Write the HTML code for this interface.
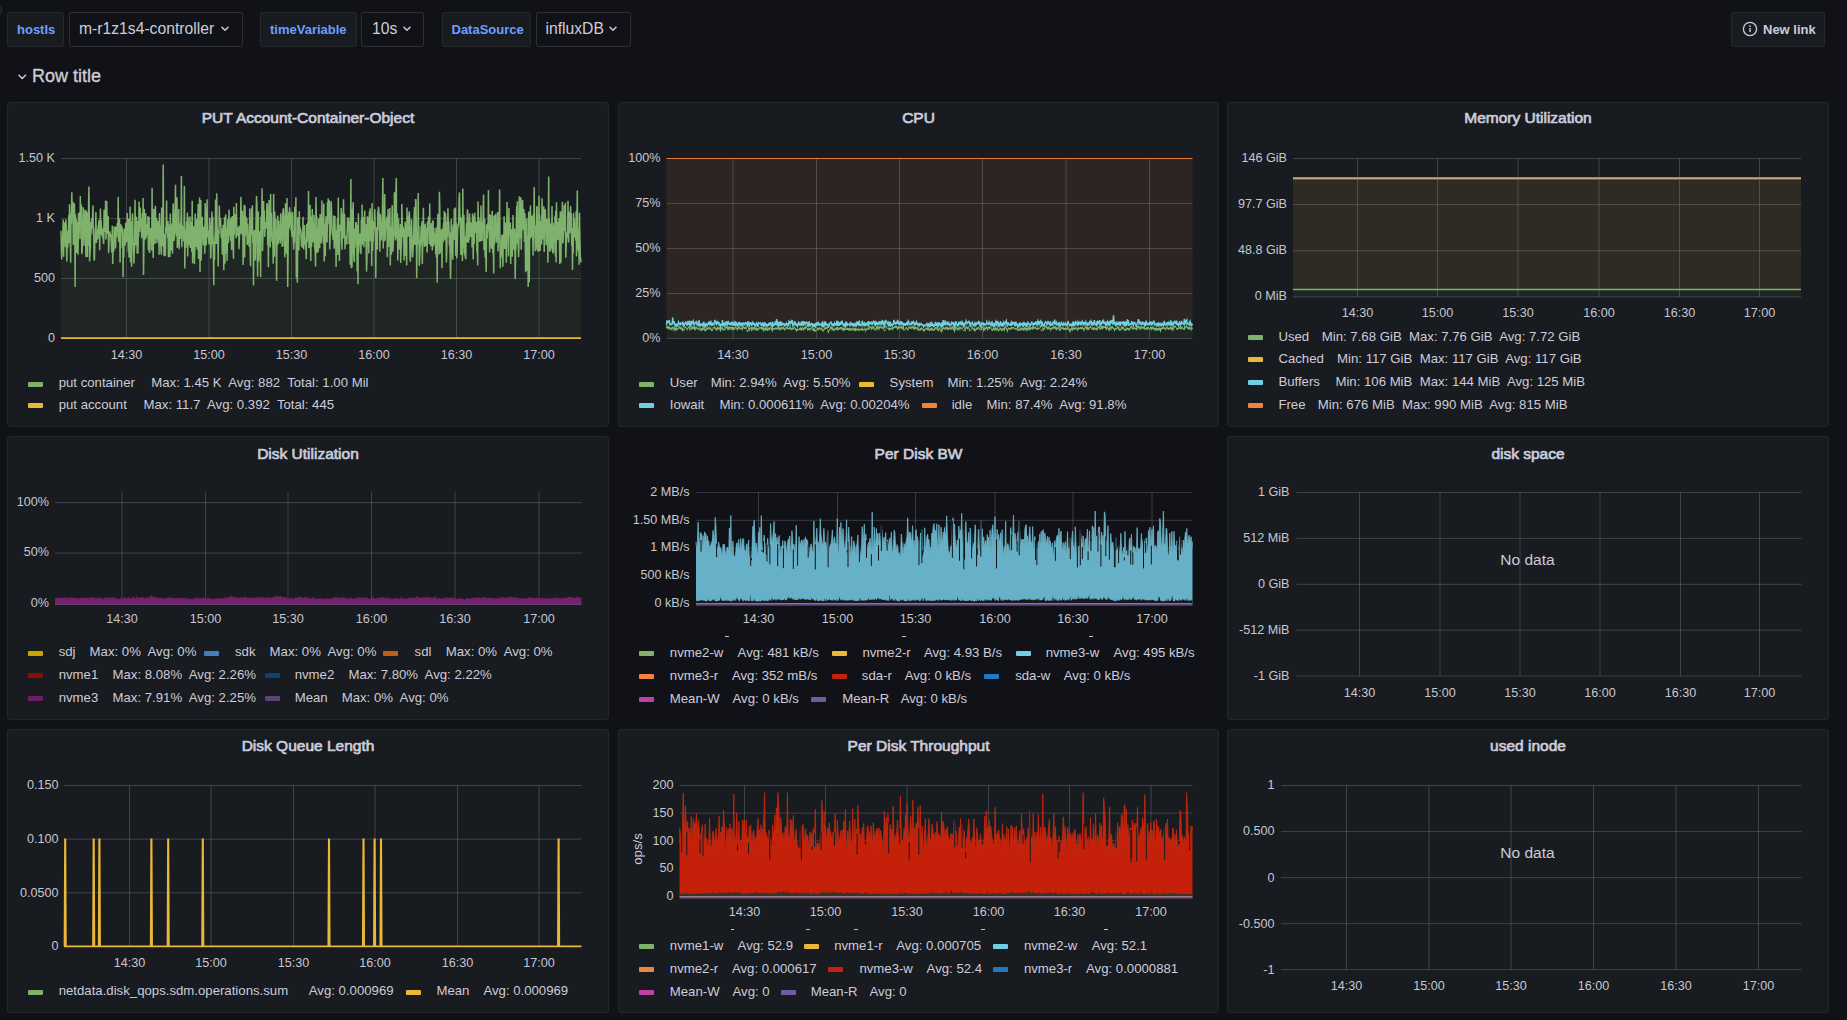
<!DOCTYPE html>
<html><head><meta charset="utf-8"><style>
html,body{margin:0;padding:0;background:#111217;width:1847px;height:1020px;overflow:hidden;position:relative;font-family:"Liberation Sans", sans-serif;}
.t{position:absolute;white-space:nowrap;line-height:1;}
.c{text-align:center;}
.a{position:absolute;}
.p{position:absolute;box-sizing:border-box;background:#181b1f;border:1px solid #24262b;border-radius:3px;}
.vl{position:absolute;top:12px;height:35px;box-sizing:border-box;background:#181b1f;border:1px solid #25272c;border-radius:2px;}
.vv{position:absolute;top:12px;height:35px;box-sizing:border-box;background:#111217;border:1px solid #2c2e33;border-radius:2px;}
.sw{position:absolute;width:15px;height:5px;border-radius:1px;}
.circ{position:absolute;left:-14px;top:3px;width:16px;height:15px;box-sizing:border-box;border-radius:8px;background:#16181c;border:1px solid #2e3137;}
</style></head><body>
<div class="circ"></div><div class="vl" style="left:7px;width:57px"></div><div class="t" style="left:17.00px;top:22.90px;font-size:13px;color:#6e9fff;font-weight:700;">hostIs</div><div class="vv" style="left:69px;width:174px"></div><div class="t" style="left:79.00px;top:20.61px;font-size:15.7px;color:#ccccdc;font-weight:400;">m-r1z1s4-controller</div><svg class="a" style="left:221.3px;top:26.4px" width="8" height="6.0" viewBox="0 0 8 6.0"><path d="M1 1.2 L4.0 4.2 L7 1.2" stroke="#ccccdc" stroke-width="1.5" fill="none" stroke-linecap="round" stroke-linejoin="round"/></svg><div class="vl" style="left:260px;width:97px"></div><div class="t" style="left:270.00px;top:22.90px;font-size:13px;color:#6e9fff;font-weight:700;">timeVariable</div><div class="vv" style="left:361px;width:63px"></div><div class="t" style="left:372.00px;top:20.61px;font-size:15.7px;color:#ccccdc;font-weight:400;">10s</div><svg class="a" style="left:402.6px;top:26.4px" width="8" height="6.0" viewBox="0 0 8 6.0"><path d="M1 1.2 L4.0 4.2 L7 1.2" stroke="#ccccdc" stroke-width="1.5" fill="none" stroke-linecap="round" stroke-linejoin="round"/></svg><div class="vl" style="left:442px;width:89px"></div><div class="t" style="left:451.50px;top:22.90px;font-size:13px;color:#6e9fff;font-weight:700;">DataSource</div><div class="vv" style="left:536px;width:95px"></div><div class="t" style="left:545.50px;top:20.61px;font-size:15.7px;color:#ccccdc;font-weight:400;">influxDB</div><svg class="a" style="left:608.6px;top:26.4px" width="8" height="6.0" viewBox="0 0 8 6.0"><path d="M1 1.2 L4.0 4.2 L7 1.2" stroke="#ccccdc" stroke-width="1.5" fill="none" stroke-linecap="round" stroke-linejoin="round"/></svg><div class="vl" style="left:1731px;width:94px"></div><svg class="a" style="left:1742px;top:21px" width="16" height="16" viewBox="0 0 16 16"><circle cx="8" cy="8" r="6.6" stroke="#ccccdc" stroke-width="1.3" fill="none"/><rect x="7.3" y="7" width="1.4" height="4" fill="#ccccdc"/><circle cx="8" cy="5.2" r="0.85" fill="#ccccdc"/></svg><div class="t" style="left:1763.00px;top:23.10px;font-size:13px;color:#ccccdc;font-weight:700;">New link</div><svg class="a" style="left:18px;top:73.8px" width="8.5" height="6.25" viewBox="0 0 8.5 6.25"><path d="M1 1.2 L4.25 4.45 L7.5 1.2" stroke="#ccccdc" stroke-width="1.5" fill="none" stroke-linecap="round" stroke-linejoin="round"/></svg><div class="t" style="left:32.00px;top:66.76px;font-size:18px;color:#ccccdc;font-weight:400;-webkit-text-stroke:0.35px #ccccdc;">Row title</div><div class="p" style="left:7px;top:102px;width:602px;height:325px"></div><div class="p" style="left:618px;top:102px;width:601px;height:325px"></div><div class="p" style="left:1227px;top:102px;width:602px;height:325px"></div><div class="p" style="left:7px;top:436px;width:602px;height:284px"></div><div class="p" style="left:1227px;top:436px;width:602px;height:284px"></div><div class="p" style="left:7px;top:729px;width:602px;height:284px"></div><div class="p" style="left:618px;top:729px;width:601px;height:284px"></div><div class="p" style="left:1227px;top:729px;width:602px;height:284px"></div><div class="t c" style="left:58.00px;width:500px;top:110.48px;font-size:15.5px;color:#ccccdc;font-weight:400;-webkit-text-stroke:0.7px #ccccdc;">PUT Account-Container-Object</div><div class="t c" style="left:668.50px;width:500px;top:110.48px;font-size:15.5px;color:#ccccdc;font-weight:400;-webkit-text-stroke:0.7px #ccccdc;">CPU</div><div class="t c" style="left:1278.00px;width:500px;top:110.48px;font-size:15.5px;color:#ccccdc;font-weight:400;-webkit-text-stroke:0.7px #ccccdc;">Memory Utilization</div><div class="t c" style="left:58.00px;width:500px;top:445.58px;font-size:15.5px;color:#ccccdc;font-weight:400;-webkit-text-stroke:0.7px #ccccdc;">Disk Utilization</div><div class="t c" style="left:668.50px;width:500px;top:445.58px;font-size:15.5px;color:#ccccdc;font-weight:400;-webkit-text-stroke:0.7px #ccccdc;">Per Disk BW</div><div class="t c" style="left:1278.00px;width:500px;top:445.58px;font-size:15.5px;color:#ccccdc;font-weight:400;-webkit-text-stroke:0.7px #ccccdc;">disk space</div><div class="t c" style="left:58.00px;width:500px;top:737.88px;font-size:15.5px;color:#ccccdc;font-weight:400;-webkit-text-stroke:0.7px #ccccdc;">Disk Queue Length</div><div class="t c" style="left:668.50px;width:500px;top:737.88px;font-size:15.5px;color:#ccccdc;font-weight:400;-webkit-text-stroke:0.7px #ccccdc;">Per Disk Throughput</div><div class="t c" style="left:1278.00px;width:500px;top:737.88px;font-size:15.5px;color:#ccccdc;font-weight:400;-webkit-text-stroke:0.7px #ccccdc;">used inode</div><div class="t" style="right:1792.00px;top:152.43px;font-size:12.6px;color:#c7c7d2;font-weight:400;">1.50 K</div><div class="t" style="right:1792.00px;top:212.43px;font-size:12.6px;color:#c7c7d2;font-weight:400;">1 K</div><div class="t" style="right:1792.00px;top:272.43px;font-size:12.6px;color:#c7c7d2;font-weight:400;">500</div><div class="t" style="right:1792.00px;top:332.43px;font-size:12.6px;color:#c7c7d2;font-weight:400;">0</div><div class="t c" style="left:-123.50px;width:500px;top:349.33px;font-size:12.6px;color:#c7c7d2;font-weight:400;">14:30</div><div class="t c" style="left:-41.00px;width:500px;top:349.33px;font-size:12.6px;color:#c7c7d2;font-weight:400;">15:00</div><div class="t c" style="left:41.50px;width:500px;top:349.33px;font-size:12.6px;color:#c7c7d2;font-weight:400;">15:30</div><div class="t c" style="left:124.00px;width:500px;top:349.33px;font-size:12.6px;color:#c7c7d2;font-weight:400;">16:00</div><div class="t c" style="left:206.50px;width:500px;top:349.33px;font-size:12.6px;color:#c7c7d2;font-weight:400;">16:30</div><div class="t c" style="left:289.00px;width:500px;top:349.33px;font-size:12.6px;color:#c7c7d2;font-weight:400;">17:00</div><div class="sw" style="left:28.0px;top:381.5px;background:#7eb26d"></div><div class="t" style="left:58.70px;top:376.33px;font-size:13.2px;color:#ccccdc;font-weight:400;">put container</div><div class="t" style="left:151.30px;top:376.33px;font-size:13.2px;color:#ccccdc;font-weight:400;">Max: 1.45 K&nbsp; Avg: 882&nbsp; Total: 1.00 Mil</div><div class="sw" style="left:28.0px;top:403.3px;background:#eab839"></div><div class="t" style="left:58.70px;top:398.13px;font-size:13.2px;color:#ccccdc;font-weight:400;">put account</div><div class="t" style="left:143.50px;top:398.13px;font-size:13.2px;color:#ccccdc;font-weight:400;">Max: 11.7&nbsp; Avg: 0.392&nbsp; Total: 445</div><div class="t" style="right:1186.50px;top:152.43px;font-size:12.6px;color:#c7c7d2;font-weight:400;">100%</div><div class="t" style="right:1186.50px;top:197.43px;font-size:12.6px;color:#c7c7d2;font-weight:400;">75%</div><div class="t" style="right:1186.50px;top:242.43px;font-size:12.6px;color:#c7c7d2;font-weight:400;">50%</div><div class="t" style="right:1186.50px;top:287.43px;font-size:12.6px;color:#c7c7d2;font-weight:400;">25%</div><div class="t" style="right:1186.50px;top:332.43px;font-size:12.6px;color:#c7c7d2;font-weight:400;">0%</div><div class="t c" style="left:483.00px;width:500px;top:349.33px;font-size:12.6px;color:#c7c7d2;font-weight:400;">14:30</div><div class="t c" style="left:566.50px;width:500px;top:349.33px;font-size:12.6px;color:#c7c7d2;font-weight:400;">15:00</div><div class="t c" style="left:649.50px;width:500px;top:349.33px;font-size:12.6px;color:#c7c7d2;font-weight:400;">15:30</div><div class="t c" style="left:732.50px;width:500px;top:349.33px;font-size:12.6px;color:#c7c7d2;font-weight:400;">16:00</div><div class="t c" style="left:816.00px;width:500px;top:349.33px;font-size:12.6px;color:#c7c7d2;font-weight:400;">16:30</div><div class="t c" style="left:899.50px;width:500px;top:349.33px;font-size:12.6px;color:#c7c7d2;font-weight:400;">17:00</div><div class="sw" style="left:639.0px;top:381.5px;background:#7eb26d"></div><div class="t" style="left:669.80px;top:376.33px;font-size:13.2px;color:#ccccdc;font-weight:400;">User</div><div class="t" style="left:710.70px;top:376.33px;font-size:13.2px;color:#ccccdc;font-weight:400;">Min: 2.94%&nbsp; Avg: 5.50%</div><div class="sw" style="left:859.0px;top:381.5px;background:#eab839"></div><div class="t" style="left:889.60px;top:376.33px;font-size:13.2px;color:#ccccdc;font-weight:400;">System</div><div class="t" style="left:947.40px;top:376.33px;font-size:13.2px;color:#ccccdc;font-weight:400;">Min: 1.25%&nbsp; Avg: 2.24%</div><div class="sw" style="left:639.0px;top:403.3px;background:#6ed0e0"></div><div class="t" style="left:669.80px;top:398.13px;font-size:13.2px;color:#ccccdc;font-weight:400;">Iowait</div><div class="t" style="left:719.40px;top:398.13px;font-size:13.2px;color:#ccccdc;font-weight:400;">Min: 0.000611%&nbsp; Avg: 0.00204%</div><div class="sw" style="left:921.5px;top:403.3px;background:#ef843c"></div><div class="t" style="left:951.70px;top:398.13px;font-size:13.2px;color:#ccccdc;font-weight:400;">idle</div><div class="t" style="left:986.60px;top:398.13px;font-size:13.2px;color:#ccccdc;font-weight:400;">Min: 87.4%&nbsp; Avg: 91.8%</div><div class="t" style="right:560.00px;top:152.43px;font-size:12.6px;color:#c7c7d2;font-weight:400;">146 GiB</div><div class="t" style="right:560.00px;top:198.27px;font-size:12.6px;color:#c7c7d2;font-weight:400;">97.7 GiB</div><div class="t" style="right:560.00px;top:244.10px;font-size:12.6px;color:#c7c7d2;font-weight:400;">48.8 GiB</div><div class="t" style="right:560.00px;top:289.93px;font-size:12.6px;color:#c7c7d2;font-weight:400;">0 MiB</div><div class="t c" style="left:1107.50px;width:500px;top:307.33px;font-size:12.6px;color:#c7c7d2;font-weight:400;">14:30</div><div class="t c" style="left:1187.50px;width:500px;top:307.33px;font-size:12.6px;color:#c7c7d2;font-weight:400;">15:00</div><div class="t c" style="left:1268.00px;width:500px;top:307.33px;font-size:12.6px;color:#c7c7d2;font-weight:400;">15:30</div><div class="t c" style="left:1349.00px;width:500px;top:307.33px;font-size:12.6px;color:#c7c7d2;font-weight:400;">16:00</div><div class="t c" style="left:1429.50px;width:500px;top:307.33px;font-size:12.6px;color:#c7c7d2;font-weight:400;">16:30</div><div class="t c" style="left:1509.50px;width:500px;top:307.33px;font-size:12.6px;color:#c7c7d2;font-weight:400;">17:00</div><div class="sw" style="left:1248.0px;top:335.3px;background:#7eb26d"></div><div class="t" style="left:1278.40px;top:330.13px;font-size:13.2px;color:#ccccdc;font-weight:400;">Used</div><div class="t" style="left:1321.80px;top:330.13px;font-size:13.2px;color:#ccccdc;font-weight:400;">Min: 7.68 GiB&nbsp; Max: 7.76 GiB&nbsp; Avg: 7.72 GiB</div><div class="sw" style="left:1248.0px;top:357.4px;background:#eab839"></div><div class="t" style="left:1278.40px;top:352.23px;font-size:13.2px;color:#ccccdc;font-weight:400;">Cached</div><div class="t" style="left:1337.10px;top:352.23px;font-size:13.2px;color:#ccccdc;font-weight:400;">Min: 117 GiB&nbsp; Max: 117 GiB&nbsp; Avg: 117 GiB</div><div class="sw" style="left:1248.0px;top:380.4px;background:#6ed0e0"></div><div class="t" style="left:1278.40px;top:375.23px;font-size:13.2px;color:#ccccdc;font-weight:400;">Buffers</div><div class="t" style="left:1335.40px;top:375.23px;font-size:13.2px;color:#ccccdc;font-weight:400;">Min: 106 MiB&nbsp; Max: 144 MiB&nbsp; Avg: 125 MiB</div><div class="sw" style="left:1248.0px;top:403.2px;background:#ef843c"></div><div class="t" style="left:1278.40px;top:398.03px;font-size:13.2px;color:#ccccdc;font-weight:400;">Free</div><div class="t" style="left:1317.80px;top:398.03px;font-size:13.2px;color:#ccccdc;font-weight:400;">Min: 676 MiB&nbsp; Max: 990 MiB&nbsp; Avg: 815 MiB</div><div class="t" style="right:1798.00px;top:495.53px;font-size:12.6px;color:#c7c7d2;font-weight:400;">100%</div><div class="t" style="right:1798.00px;top:546.48px;font-size:12.6px;color:#c7c7d2;font-weight:400;">50%</div><div class="t" style="right:1798.00px;top:597.43px;font-size:12.6px;color:#c7c7d2;font-weight:400;">0%</div><div class="t c" style="left:-128.00px;width:500px;top:613.33px;font-size:12.6px;color:#c7c7d2;font-weight:400;">14:30</div><div class="t c" style="left:-44.50px;width:500px;top:613.33px;font-size:12.6px;color:#c7c7d2;font-weight:400;">15:00</div><div class="t c" style="left:38.00px;width:500px;top:613.33px;font-size:12.6px;color:#c7c7d2;font-weight:400;">15:30</div><div class="t c" style="left:121.50px;width:500px;top:613.33px;font-size:12.6px;color:#c7c7d2;font-weight:400;">16:00</div><div class="t c" style="left:205.00px;width:500px;top:613.33px;font-size:12.6px;color:#c7c7d2;font-weight:400;">16:30</div><div class="t c" style="left:289.00px;width:500px;top:613.33px;font-size:12.6px;color:#c7c7d2;font-weight:400;">17:00</div><div class="sw" style="left:28.0px;top:650.5px;background:#cca300"></div><div class="t" style="left:58.70px;top:645.33px;font-size:13.2px;color:#ccccdc;font-weight:400;">sdj</div><div class="t" style="left:89.60px;top:645.33px;font-size:13.2px;color:#ccccdc;font-weight:400;">Max: 0%&nbsp; Avg: 0%</div><div class="sw" style="left:204.0px;top:650.5px;background:#447ebc"></div><div class="t" style="left:235.00px;top:645.33px;font-size:13.2px;color:#ccccdc;font-weight:400;">sdk</div><div class="t" style="left:269.60px;top:645.33px;font-size:13.2px;color:#ccccdc;font-weight:400;">Max: 0%&nbsp; Avg: 0%</div><div class="sw" style="left:382.7px;top:650.5px;background:#c15c17"></div><div class="t" style="left:414.60px;top:645.33px;font-size:13.2px;color:#ccccdc;font-weight:400;">sdl</div><div class="t" style="left:445.80px;top:645.33px;font-size:13.2px;color:#ccccdc;font-weight:400;">Max: 0%&nbsp; Avg: 0%</div><div class="sw" style="left:28.0px;top:673.4px;background:#890f02"></div><div class="t" style="left:58.70px;top:668.23px;font-size:13.2px;color:#ccccdc;font-weight:400;">nvme1</div><div class="t" style="left:112.50px;top:668.23px;font-size:13.2px;color:#ccccdc;font-weight:400;">Max: 8.08%&nbsp; Avg: 2.26%</div><div class="sw" style="left:264.5px;top:673.4px;background:#0a437c"></div><div class="t" style="left:294.70px;top:668.23px;font-size:13.2px;color:#ccccdc;font-weight:400;">nvme2</div><div class="t" style="left:348.40px;top:668.23px;font-size:13.2px;color:#ccccdc;font-weight:400;">Max: 7.80%&nbsp; Avg: 2.22%</div><div class="sw" style="left:28.0px;top:696.3px;background:#6d1f62"></div><div class="t" style="left:58.70px;top:691.13px;font-size:13.2px;color:#ccccdc;font-weight:400;">nvme3</div><div class="t" style="left:112.50px;top:691.13px;font-size:13.2px;color:#ccccdc;font-weight:400;">Max: 7.91%&nbsp; Avg: 2.25%</div><div class="sw" style="left:264.5px;top:696.3px;background:#584477"></div><div class="t" style="left:294.70px;top:691.13px;font-size:13.2px;color:#ccccdc;font-weight:400;">Mean</div><div class="t" style="left:341.70px;top:691.13px;font-size:13.2px;color:#ccccdc;font-weight:400;">Max: 0%&nbsp; Avg: 0%</div><div class="t" style="right:1157.50px;top:485.53px;font-size:12.6px;color:#c7c7d2;font-weight:400;">2 MB/s</div><div class="t" style="right:1157.50px;top:513.51px;font-size:12.6px;color:#c7c7d2;font-weight:400;">1.50 MB/s</div><div class="t" style="right:1157.50px;top:541.48px;font-size:12.6px;color:#c7c7d2;font-weight:400;">1 MB/s</div><div class="t" style="right:1157.50px;top:569.46px;font-size:12.6px;color:#c7c7d2;font-weight:400;">500 kB/s</div><div class="t" style="right:1157.50px;top:597.43px;font-size:12.6px;color:#c7c7d2;font-weight:400;">0 kB/s</div><div class="t c" style="left:508.50px;width:500px;top:613.33px;font-size:12.6px;color:#c7c7d2;font-weight:400;">14:30</div><div class="t c" style="left:587.50px;width:500px;top:613.33px;font-size:12.6px;color:#c7c7d2;font-weight:400;">15:00</div><div class="t c" style="left:665.50px;width:500px;top:613.33px;font-size:12.6px;color:#c7c7d2;font-weight:400;">15:30</div><div class="t c" style="left:745.00px;width:500px;top:613.33px;font-size:12.6px;color:#c7c7d2;font-weight:400;">16:00</div><div class="t c" style="left:823.00px;width:500px;top:613.33px;font-size:12.6px;color:#c7c7d2;font-weight:400;">16:30</div><div class="t c" style="left:902.00px;width:500px;top:613.33px;font-size:12.6px;color:#c7c7d2;font-weight:400;">17:00</div><div class="a" style="left:725.0px;top:636px;width:4px;height:1px;background:#c4c4d0"></div><div class="a" style="left:902.0px;top:636px;width:4px;height:1px;background:#c4c4d0"></div><div class="a" style="left:1089.0px;top:636px;width:4px;height:1px;background:#c4c4d0"></div><div class="sw" style="left:639.0px;top:651.3px;background:#7eb26d"></div><div class="t" style="left:669.80px;top:646.13px;font-size:13.2px;color:#ccccdc;font-weight:400;">nvme2-w</div><div class="t" style="left:737.60px;top:646.13px;font-size:13.2px;color:#ccccdc;font-weight:400;">Avg: 481 kB/s</div><div class="sw" style="left:831.5px;top:651.3px;background:#eab839"></div><div class="t" style="left:862.40px;top:646.13px;font-size:13.2px;color:#ccccdc;font-weight:400;">nvme2-r</div><div class="t" style="left:923.90px;top:646.13px;font-size:13.2px;color:#ccccdc;font-weight:400;">Avg: 4.93 B/s</div><div class="sw" style="left:1015.5px;top:651.3px;background:#6ed0e0"></div><div class="t" style="left:1045.70px;top:646.13px;font-size:13.2px;color:#ccccdc;font-weight:400;">nvme3-w</div><div class="t" style="left:1113.50px;top:646.13px;font-size:13.2px;color:#ccccdc;font-weight:400;">Avg: 495 kB/s</div><div class="sw" style="left:639.0px;top:674.2px;background:#ef843c"></div><div class="t" style="left:669.80px;top:669.03px;font-size:13.2px;color:#ccccdc;font-weight:400;">nvme3-r</div><div class="t" style="left:731.90px;top:669.03px;font-size:13.2px;color:#ccccdc;font-weight:400;">Avg: 352 mB/s</div><div class="sw" style="left:831.5px;top:674.2px;background:#c4220a"></div><div class="t" style="left:861.80px;top:669.03px;font-size:13.2px;color:#ccccdc;font-weight:400;">sda-r</div><div class="t" style="left:904.70px;top:669.03px;font-size:13.2px;color:#ccccdc;font-weight:400;">Avg: 0 kB/s</div><div class="sw" style="left:984.3px;top:674.2px;background:#1f78c1"></div><div class="t" style="left:1015.20px;top:669.03px;font-size:13.2px;color:#ccccdc;font-weight:400;">sda-w</div><div class="t" style="left:1063.80px;top:669.03px;font-size:13.2px;color:#ccccdc;font-weight:400;">Avg: 0 kB/s</div><div class="sw" style="left:639.0px;top:697.1px;background:#ba43a9"></div><div class="t" style="left:669.80px;top:691.93px;font-size:13.2px;color:#ccccdc;font-weight:400;">Mean-W</div><div class="t" style="left:732.50px;top:691.93px;font-size:13.2px;color:#ccccdc;font-weight:400;">Avg: 0 kB/s</div><div class="sw" style="left:811.4px;top:697.1px;background:#705da0"></div><div class="t" style="left:842.30px;top:691.93px;font-size:13.2px;color:#ccccdc;font-weight:400;">Mean-R</div><div class="t" style="left:900.70px;top:691.93px;font-size:13.2px;color:#ccccdc;font-weight:400;">Avg: 0 kB/s</div><div class="t" style="right:557.50px;top:486.43px;font-size:12.6px;color:#c7c7d2;font-weight:400;">1 GiB</div><div class="t" style="right:557.50px;top:532.33px;font-size:12.6px;color:#c7c7d2;font-weight:400;">512 MiB</div><div class="t" style="right:557.50px;top:578.23px;font-size:12.6px;color:#c7c7d2;font-weight:400;">0 GiB</div><div class="t" style="right:557.50px;top:624.13px;font-size:12.6px;color:#c7c7d2;font-weight:400;">-512 MiB</div><div class="t" style="right:557.50px;top:670.03px;font-size:12.6px;color:#c7c7d2;font-weight:400;">-1 GiB</div><div class="t c" style="left:1109.50px;width:500px;top:686.83px;font-size:12.6px;color:#c7c7d2;font-weight:400;">14:30</div><div class="t c" style="left:1190.00px;width:500px;top:686.83px;font-size:12.6px;color:#c7c7d2;font-weight:400;">15:00</div><div class="t c" style="left:1270.00px;width:500px;top:686.83px;font-size:12.6px;color:#c7c7d2;font-weight:400;">15:30</div><div class="t c" style="left:1350.00px;width:500px;top:686.83px;font-size:12.6px;color:#c7c7d2;font-weight:400;">16:00</div><div class="t c" style="left:1430.50px;width:500px;top:686.83px;font-size:12.6px;color:#c7c7d2;font-weight:400;">16:30</div><div class="t c" style="left:1509.50px;width:500px;top:686.83px;font-size:12.6px;color:#c7c7d2;font-weight:400;">17:00</div><div class="t c" style="left:1277.50px;width:500px;top:551.88px;font-size:15.5px;color:#ccccdc;font-weight:400;">No data</div><div class="t" style="right:1788.50px;top:779.43px;font-size:12.6px;color:#c7c7d2;font-weight:400;">0.150</div><div class="t" style="right:1788.50px;top:833.10px;font-size:12.6px;color:#c7c7d2;font-weight:400;">0.100</div><div class="t" style="right:1788.50px;top:886.77px;font-size:12.6px;color:#c7c7d2;font-weight:400;">0.0500</div><div class="t" style="right:1788.50px;top:940.43px;font-size:12.6px;color:#c7c7d2;font-weight:400;">0</div><div class="t c" style="left:-120.50px;width:500px;top:956.83px;font-size:12.6px;color:#c7c7d2;font-weight:400;">14:30</div><div class="t c" style="left:-39.00px;width:500px;top:956.83px;font-size:12.6px;color:#c7c7d2;font-weight:400;">15:00</div><div class="t c" style="left:43.50px;width:500px;top:956.83px;font-size:12.6px;color:#c7c7d2;font-weight:400;">15:30</div><div class="t c" style="left:125.00px;width:500px;top:956.83px;font-size:12.6px;color:#c7c7d2;font-weight:400;">16:00</div><div class="t c" style="left:207.50px;width:500px;top:956.83px;font-size:12.6px;color:#c7c7d2;font-weight:400;">16:30</div><div class="t c" style="left:289.00px;width:500px;top:956.83px;font-size:12.6px;color:#c7c7d2;font-weight:400;">17:00</div><div class="sw" style="left:28.0px;top:989.6px;background:#7eb26d"></div><div class="t" style="left:58.70px;top:984.43px;font-size:13.2px;color:#ccccdc;font-weight:400;">netdata.disk_qops.sdm.operations.sum</div><div class="t" style="left:308.80px;top:984.43px;font-size:13.2px;color:#ccccdc;font-weight:400;">Avg: 0.000969</div><div class="sw" style="left:405.5px;top:989.6px;background:#eab839"></div><div class="t" style="left:436.40px;top:984.43px;font-size:13.2px;color:#ccccdc;font-weight:400;">Mean</div><div class="t" style="left:483.40px;top:984.43px;font-size:13.2px;color:#ccccdc;font-weight:400;">Avg: 0.000969</div><div class="t" style="right:1173.50px;top:779.43px;font-size:12.6px;color:#c7c7d2;font-weight:400;">200</div><div class="t" style="right:1173.50px;top:807.06px;font-size:12.6px;color:#c7c7d2;font-weight:400;">150</div><div class="t" style="right:1173.50px;top:834.68px;font-size:12.6px;color:#c7c7d2;font-weight:400;">100</div><div class="t" style="right:1173.50px;top:862.31px;font-size:12.6px;color:#c7c7d2;font-weight:400;">50</div><div class="t" style="right:1173.50px;top:889.93px;font-size:12.6px;color:#c7c7d2;font-weight:400;">0</div><div class="t c" style="left:494.50px;width:500px;top:906.33px;font-size:12.6px;color:#c7c7d2;font-weight:400;">14:30</div><div class="t c" style="left:575.50px;width:500px;top:906.33px;font-size:12.6px;color:#c7c7d2;font-weight:400;">15:00</div><div class="t c" style="left:657.00px;width:500px;top:906.33px;font-size:12.6px;color:#c7c7d2;font-weight:400;">15:30</div><div class="t c" style="left:738.50px;width:500px;top:906.33px;font-size:12.6px;color:#c7c7d2;font-weight:400;">16:00</div><div class="t c" style="left:819.50px;width:500px;top:906.33px;font-size:12.6px;color:#c7c7d2;font-weight:400;">16:30</div><div class="t c" style="left:901.00px;width:500px;top:906.33px;font-size:12.6px;color:#c7c7d2;font-weight:400;">17:00</div><div class="t" style="left:618px;top:841.5px;width:40px;height:14px;font-size:13.2px;color:#ccccdc;transform:rotate(-90deg);transform-origin:20px 7px;text-align:center;line-height:14px">ops/s</div><div class="a" style="left:730.7px;top:929px;width:3.5px;height:1px;background:#c4c4d0"></div><div class="a" style="left:806.2px;top:929px;width:3.5px;height:1px;background:#c4c4d0"></div><div class="a" style="left:854.2px;top:929px;width:3.5px;height:1px;background:#c4c4d0"></div><div class="a" style="left:981.1px;top:929px;width:3.5px;height:1px;background:#c4c4d0"></div><div class="a" style="left:1104.3px;top:929px;width:3.5px;height:1px;background:#c4c4d0"></div><div class="sw" style="left:639.0px;top:944.2px;background:#7eb26d"></div><div class="t" style="left:669.80px;top:939.03px;font-size:13.2px;color:#ccccdc;font-weight:400;">nvme1-w</div><div class="t" style="left:737.60px;top:939.03px;font-size:13.2px;color:#ccccdc;font-weight:400;">Avg: 52.9</div><div class="sw" style="left:804.0px;top:944.2px;background:#eab839"></div><div class="t" style="left:834.20px;top:939.03px;font-size:13.2px;color:#ccccdc;font-weight:400;">nvme1-r</div><div class="t" style="left:896.30px;top:939.03px;font-size:13.2px;color:#ccccdc;font-weight:400;">Avg: 0.000705</div><div class="sw" style="left:992.7px;top:944.2px;background:#6ed0e0"></div><div class="t" style="left:1023.90px;top:939.03px;font-size:13.2px;color:#ccccdc;font-weight:400;">nvme2-w</div><div class="t" style="left:1091.70px;top:939.03px;font-size:13.2px;color:#ccccdc;font-weight:400;">Avg: 52.1</div><div class="sw" style="left:639.0px;top:967.4px;background:#ef843c"></div><div class="t" style="left:669.80px;top:962.23px;font-size:13.2px;color:#ccccdc;font-weight:400;">nvme2-r</div><div class="t" style="left:731.90px;top:962.23px;font-size:13.2px;color:#ccccdc;font-weight:400;">Avg: 0.000617</div><div class="sw" style="left:828.2px;top:967.4px;background:#c4220a"></div><div class="t" style="left:859.40px;top:962.23px;font-size:13.2px;color:#ccccdc;font-weight:400;">nvme3-w</div><div class="t" style="left:926.60px;top:962.23px;font-size:13.2px;color:#ccccdc;font-weight:400;">Avg: 52.4</div><div class="sw" style="left:992.7px;top:967.4px;background:#1f78c1"></div><div class="t" style="left:1023.90px;top:962.23px;font-size:13.2px;color:#ccccdc;font-weight:400;">nvme3-r</div><div class="t" style="left:1086.00px;top:962.23px;font-size:13.2px;color:#ccccdc;font-weight:400;">Avg: 0.0000881</div><div class="sw" style="left:639.0px;top:990.2px;background:#ba43a9"></div><div class="t" style="left:669.80px;top:985.03px;font-size:13.2px;color:#ccccdc;font-weight:400;">Mean-W</div><div class="t" style="left:732.50px;top:985.03px;font-size:13.2px;color:#ccccdc;font-weight:400;">Avg: 0</div><div class="sw" style="left:780.5px;top:990.2px;background:#705da0"></div><div class="t" style="left:810.70px;top:985.03px;font-size:13.2px;color:#ccccdc;font-weight:400;">Mean-R</div><div class="t" style="left:869.50px;top:985.03px;font-size:13.2px;color:#ccccdc;font-weight:400;">Avg: 0</div><div class="t" style="right:572.50px;top:779.43px;font-size:12.6px;color:#c7c7d2;font-weight:400;">1</div><div class="t" style="right:572.50px;top:825.48px;font-size:12.6px;color:#c7c7d2;font-weight:400;">0.500</div><div class="t" style="right:572.50px;top:871.53px;font-size:12.6px;color:#c7c7d2;font-weight:400;">0</div><div class="t" style="right:572.50px;top:917.58px;font-size:12.6px;color:#c7c7d2;font-weight:400;">-0.500</div><div class="t" style="right:572.50px;top:963.63px;font-size:12.6px;color:#c7c7d2;font-weight:400;">-1</div><div class="t c" style="left:1096.50px;width:500px;top:980.33px;font-size:12.6px;color:#c7c7d2;font-weight:400;">14:30</div><div class="t c" style="left:1179.00px;width:500px;top:980.33px;font-size:12.6px;color:#c7c7d2;font-weight:400;">15:00</div><div class="t c" style="left:1261.00px;width:500px;top:980.33px;font-size:12.6px;color:#c7c7d2;font-weight:400;">15:30</div><div class="t c" style="left:1343.50px;width:500px;top:980.33px;font-size:12.6px;color:#c7c7d2;font-weight:400;">16:00</div><div class="t c" style="left:1426.00px;width:500px;top:980.33px;font-size:12.6px;color:#c7c7d2;font-weight:400;">16:30</div><div class="t c" style="left:1508.50px;width:500px;top:980.33px;font-size:12.6px;color:#c7c7d2;font-weight:400;">17:00</div><div class="t c" style="left:1277.50px;width:500px;top:845.38px;font-size:15.5px;color:#ccccdc;font-weight:400;">No data</div><svg class="a" style="left:0;top:0" width="1847" height="1020" viewBox="0 0 1847 1020"><g stroke="rgba(204,204,214,0.22)" stroke-width="1"><line x1="61" y1="158.50" x2="581" y2="158.50"/><line x1="61" y1="218.50" x2="581" y2="218.50"/><line x1="61" y1="278.50" x2="581" y2="278.50"/><line x1="61" y1="338.50" x2="581" y2="338.50"/><line x1="126.50" y1="158.5" x2="126.50" y2="338.5"/><line x1="209.00" y1="158.5" x2="209.00" y2="338.5"/><line x1="291.50" y1="158.5" x2="291.50" y2="338.5"/><line x1="374.00" y1="158.5" x2="374.00" y2="338.5"/><line x1="456.50" y1="158.5" x2="456.50" y2="338.5"/><line x1="539.00" y1="158.5" x2="539.00" y2="338.5"/></g><path d="M61.0 338.5 L61.0 230.8 L61.4 249.1 L61.7 259.5 L62.1 246.1 L62.5 242.9 L62.9 233.3 L63.2 219.5 L63.6 256.8 L64.0 222.3 L64.3 223.6 L64.7 229.3 L65.1 239.9 L65.5 247.3 L65.8 219.4 L66.2 226.0 L66.6 253.7 L66.9 261.5 L67.3 230.7 L67.7 247.8 L68.1 239.5 L68.4 231.7 L68.8 214.9 L69.2 243.0 L69.5 204.3 L69.9 217.8 L70.3 243.5 L70.7 262.7 L71.0 213.4 L71.4 223.9 L71.8 192.3 L72.2 210.4 L72.5 217.9 L72.9 201.7 L73.3 245.1 L73.6 228.1 L74.0 243.7 L74.4 203.2 L74.8 224.3 L75.1 286.9 L75.5 214.2 L75.9 242.2 L76.2 219.1 L76.6 253.0 L77.0 221.7 L77.4 222.7 L77.7 239.2 L78.1 254.7 L78.5 212.8 L78.8 231.7 L79.2 221.7 L79.6 212.5 L80.0 239.2 L80.3 195.9 L80.7 227.2 L81.1 219.9 L81.4 204.5 L81.8 254.1 L82.2 250.4 L82.6 230.7 L82.9 231.1 L83.3 207.2 L83.7 222.3 L84.0 246.0 L84.4 223.0 L84.8 217.7 L85.2 209.7 L85.5 218.3 L85.9 256.9 L86.3 210.8 L86.6 232.5 L87.0 223.8 L87.4 256.9 L87.8 212.6 L88.1 246.1 L88.5 211.2 L88.9 186.4 L89.2 209.7 L89.6 261.4 L90.0 253.0 L90.4 247.4 L90.7 222.3 L91.1 233.2 L91.5 218.5 L91.9 228.2 L92.2 227.7 L92.6 216.0 L93.0 205.4 L93.3 234.9 L93.7 228.0 L94.1 260.4 L94.5 259.3 L94.8 239.4 L95.2 241.5 L95.6 231.4 L95.9 212.1 L96.3 242.9 L96.7 238.2 L97.1 239.9 L97.4 229.4 L97.8 238.9 L98.2 225.4 L98.5 226.2 L98.9 220.8 L99.3 220.4 L99.7 250.2 L100.0 227.2 L100.4 208.4 L100.8 234.7 L101.1 220.4 L101.5 228.2 L101.9 235.5 L102.3 235.2 L102.6 237.6 L103.0 228.6 L103.4 242.3 L103.7 244.1 L104.1 209.8 L104.5 229.3 L104.9 209.4 L105.2 232.1 L105.6 200.4 L106.0 239.4 L106.3 231.3 L106.7 201.0 L107.1 220.5 L107.5 220.7 L107.8 234.0 L108.2 215.9 L108.6 253.2 L108.9 245.7 L109.3 232.7 L109.7 231.3 L110.1 233.3 L110.4 236.0 L110.8 234.7 L111.2 241.1 L111.6 248.9 L111.9 252.8 L112.3 225.4 L112.7 263.9 L113.0 251.1 L113.4 244.0 L113.8 251.5 L114.2 226.7 L114.5 242.4 L114.9 235.0 L115.3 226.4 L115.6 248.6 L116.0 227.1 L116.4 230.2 L116.8 237.5 L117.1 227.2 L117.5 223.1 L117.9 229.3 L118.2 196.7 L118.6 241.7 L119.0 225.9 L119.4 218.6 L119.7 234.3 L120.1 262.4 L120.5 224.1 L120.8 225.4 L121.2 232.2 L121.6 225.9 L122.0 228.3 L122.3 248.0 L122.7 228.6 L123.1 277.2 L123.4 233.9 L123.8 257.6 L124.2 236.3 L124.6 228.5 L124.9 245.7 L125.3 242.2 L125.7 222.8 L126.0 227.5 L126.4 242.2 L126.8 240.3 L127.2 213.0 L127.5 225.3 L127.9 221.9 L128.3 251.7 L128.6 218.8 L129.0 257.5 L129.4 224.6 L129.8 250.3 L130.1 206.5 L130.5 262.2 L130.9 253.0 L131.3 221.4 L131.6 266.7 L132.0 241.0 L132.4 213.4 L132.7 220.4 L133.1 245.2 L133.5 242.8 L133.9 263.4 L134.2 252.0 L134.6 247.7 L135.0 199.7 L135.3 229.5 L135.7 242.2 L136.1 245.2 L136.5 216.7 L136.8 230.5 L137.2 253.8 L137.6 221.0 L137.9 253.6 L138.3 233.4 L138.7 236.8 L139.1 201.6 L139.4 231.8 L139.8 230.9 L140.2 207.6 L140.5 226.6 L140.9 226.3 L141.3 219.1 L141.7 238.3 L142.0 223.4 L142.4 212.7 L142.8 235.0 L143.1 198.0 L143.5 275.0 L143.9 246.1 L144.3 209.1 L144.6 230.6 L145.0 240.3 L145.4 228.6 L145.7 213.3 L146.1 238.2 L146.5 224.2 L146.9 233.2 L147.2 234.3 L147.6 234.6 L148.0 215.9 L148.3 250.2 L148.7 243.0 L149.1 217.1 L149.5 252.9 L149.8 250.3 L150.2 228.3 L150.6 229.6 L150.9 234.2 L151.3 231.2 L151.7 250.4 L152.1 187.7 L152.4 241.7 L152.8 239.4 L153.2 258.1 L153.6 230.0 L153.9 208.8 L154.3 237.7 L154.7 227.4 L155.0 244.1 L155.4 205.8 L155.8 230.0 L156.2 238.9 L156.5 217.9 L156.9 243.0 L157.3 235.1 L157.6 239.5 L158.0 221.9 L158.4 220.7 L158.8 238.0 L159.1 254.8 L159.5 213.1 L159.9 229.1 L160.2 225.7 L160.6 238.9 L161.0 250.9 L161.4 254.8 L161.7 207.6 L162.1 239.3 L162.5 235.6 L162.8 246.2 L163.2 164.5 L163.6 233.9 L164.0 256.2 L164.3 234.3 L164.7 243.3 L165.1 244.2 L165.4 255.8 L165.8 226.7 L166.2 229.9 L166.6 200.6 L166.9 232.8 L167.3 228.2 L167.7 237.8 L168.0 221.1 L168.4 256.2 L168.8 257.3 L169.2 249.6 L169.5 224.5 L169.9 256.9 L170.3 213.6 L170.6 227.0 L171.0 250.8 L171.4 238.6 L171.8 223.5 L172.1 243.1 L172.5 253.7 L172.9 215.6 L173.3 203.6 L173.6 215.3 L174.0 241.0 L174.4 238.0 L174.7 232.7 L175.1 213.5 L175.5 184.8 L175.9 233.6 L176.2 211.8 L176.6 236.5 L177.0 197.3 L177.3 247.9 L177.7 241.4 L178.1 224.9 L178.5 245.5 L178.8 209.0 L179.2 249.3 L179.6 223.9 L179.9 223.9 L180.3 238.9 L180.7 233.6 L181.1 216.7 L181.4 175.9 L181.8 247.3 L182.2 225.0 L182.5 231.5 L182.9 233.4 L183.3 226.2 L183.7 241.6 L184.0 231.6 L184.4 185.9 L184.8 268.6 L185.1 236.5 L185.5 230.1 L185.9 247.8 L186.3 231.8 L186.6 221.3 L187.0 234.0 L187.4 212.5 L187.7 256.5 L188.1 217.3 L188.5 236.7 L188.9 245.3 L189.2 235.4 L189.6 235.1 L190.0 216.3 L190.3 248.0 L190.7 235.0 L191.1 240.7 L191.5 221.9 L191.8 252.0 L192.2 200.7 L192.6 263.2 L193.0 234.0 L193.3 233.7 L193.7 226.2 L194.1 247.8 L194.4 264.3 L194.8 249.9 L195.2 213.5 L195.6 230.7 L195.9 247.0 L196.3 219.0 L196.7 246.0 L197.0 239.2 L197.4 250.0 L197.8 220.2 L198.2 204.1 L198.5 258.9 L198.9 229.3 L199.3 211.5 L199.6 197.6 L200.0 272.1 L200.4 232.6 L200.8 199.9 L201.1 260.8 L201.5 250.6 L201.9 225.1 L202.2 216.8 L202.6 238.2 L203.0 227.5 L203.4 245.2 L203.7 226.6 L204.1 235.2 L204.5 234.5 L204.8 253.8 L205.2 203.0 L205.6 216.8 L206.0 217.5 L206.3 245.5 L206.7 231.8 L207.1 199.2 L207.4 224.2 L207.8 237.3 L208.2 235.6 L208.6 230.6 L208.9 244.2 L209.3 243.3 L209.7 217.8 L210.0 222.6 L210.4 239.1 L210.8 258.4 L211.2 243.7 L211.5 234.0 L211.9 211.4 L212.3 244.2 L212.7 216.8 L213.0 235.6 L213.4 255.1 L213.8 285.2 L214.1 241.6 L214.5 260.3 L214.9 238.7 L215.3 231.0 L215.6 199.4 L216.0 236.7 L216.4 243.9 L216.7 193.2 L217.1 227.9 L217.5 239.4 L217.9 243.1 L218.2 266.5 L218.6 229.4 L219.0 234.6 L219.3 205.5 L219.7 221.6 L220.1 225.6 L220.5 218.0 L220.8 225.9 L221.2 238.0 L221.6 228.6 L221.9 234.1 L222.3 254.7 L222.7 238.0 L223.1 224.7 L223.4 232.4 L223.8 270.2 L224.2 237.2 L224.5 217.1 L224.9 263.7 L225.3 238.1 L225.7 214.3 L226.0 253.4 L226.4 234.6 L226.8 228.7 L227.1 261.1 L227.5 230.6 L227.9 219.1 L228.3 243.0 L228.6 231.1 L229.0 209.5 L229.4 236.0 L229.7 227.7 L230.1 221.4 L230.5 240.8 L230.9 217.6 L231.2 225.9 L231.6 250.0 L232.0 220.5 L232.4 216.0 L232.7 218.5 L233.1 245.2 L233.5 258.7 L233.8 206.7 L234.2 234.8 L234.6 216.3 L235.0 214.1 L235.3 224.2 L235.7 218.5 L236.1 238.3 L236.4 203.0 L236.8 235.8 L237.2 235.1 L237.6 229.3 L237.9 232.9 L238.3 228.0 L238.7 226.3 L239.0 249.2 L239.4 238.2 L239.8 231.1 L240.2 225.3 L240.5 233.1 L240.9 196.8 L241.3 216.4 L241.6 234.6 L242.0 215.5 L242.4 210.8 L242.8 225.3 L243.1 265.1 L243.5 227.3 L243.9 237.6 L244.2 204.7 L244.6 257.6 L245.0 205.7 L245.4 236.2 L245.7 216.0 L246.1 231.0 L246.5 226.6 L246.8 218.0 L247.2 244.9 L247.6 223.8 L248.0 240.0 L248.3 243.0 L248.7 238.1 L249.1 246.6 L249.4 234.1 L249.8 208.6 L250.2 254.3 L250.6 266.3 L250.9 219.3 L251.3 235.0 L251.7 208.2 L252.1 214.2 L252.4 205.3 L252.8 242.7 L253.2 233.5 L253.5 285.6 L253.9 242.0 L254.3 230.1 L254.7 258.0 L255.0 236.3 L255.4 260.6 L255.8 231.2 L256.1 216.8 L256.5 195.9 L256.9 204.6 L257.3 253.7 L257.6 276.6 L258.0 232.9 L258.4 211.6 L258.7 261.6 L259.1 238.6 L259.5 231.3 L259.9 234.0 L260.2 234.5 L260.6 277.2 L261.0 216.7 L261.3 226.5 L261.7 220.4 L262.1 188.2 L262.5 251.1 L262.8 241.8 L263.2 212.8 L263.6 200.9 L263.9 229.6 L264.3 210.2 L264.7 237.0 L265.1 226.0 L265.4 221.9 L265.8 227.8 L266.2 228.5 L266.5 224.7 L266.9 203.6 L267.3 203.9 L267.7 245.2 L268.0 230.4 L268.4 267.3 L268.8 221.1 L269.1 200.1 L269.5 220.8 L269.9 212.9 L270.3 247.6 L270.6 194.1 L271.0 236.3 L271.4 212.9 L271.8 233.0 L272.1 241.8 L272.5 240.1 L272.9 245.1 L273.2 263.7 L273.6 194.1 L274.0 227.1 L274.4 256.8 L274.7 211.4 L275.1 228.7 L275.5 229.7 L275.8 219.0 L276.2 250.2 L276.6 280.8 L277.0 234.3 L277.3 243.0 L277.7 215.4 L278.1 244.3 L278.4 241.9 L278.8 220.5 L279.2 240.2 L279.6 227.2 L279.9 224.9 L280.3 243.5 L280.7 213.3 L281.0 239.1 L281.4 225.4 L281.8 232.1 L282.2 247.1 L282.5 216.1 L282.9 212.7 L283.3 208.4 L283.6 216.1 L284.0 246.2 L284.4 215.8 L284.8 257.2 L285.1 228.4 L285.5 203.2 L285.9 221.9 L286.2 247.1 L286.6 253.8 L287.0 197.9 L287.4 240.5 L287.7 286.9 L288.1 251.6 L288.5 223.0 L288.8 212.2 L289.2 228.5 L289.6 207.2 L290.0 225.5 L290.3 218.0 L290.7 211.8 L291.1 230.9 L291.5 214.4 L291.8 234.3 L292.2 236.8 L292.6 211.8 L292.9 233.7 L293.3 237.9 L293.7 249.6 L294.1 230.7 L294.4 242.6 L294.8 206.5 L295.2 223.5 L295.5 229.1 L295.9 197.2 L296.3 277.5 L296.7 254.3 L297.0 276.6 L297.4 282.8 L297.8 217.3 L298.1 223.7 L298.5 229.8 L298.9 250.5 L299.3 211.3 L299.6 233.4 L300.0 226.8 L300.4 232.6 L300.7 229.3 L301.1 237.8 L301.5 246.6 L301.9 236.3 L302.2 233.3 L302.6 248.1 L303.0 216.8 L303.3 242.4 L303.7 249.5 L304.1 231.1 L304.5 225.1 L304.8 244.5 L305.2 238.5 L305.6 244.0 L305.9 248.7 L306.3 259.1 L306.7 224.0 L307.1 242.1 L307.4 237.0 L307.8 222.0 L308.2 237.2 L308.5 191.0 L308.9 248.0 L309.3 246.6 L309.7 237.8 L310.0 204.8 L310.4 234.9 L310.8 261.1 L311.2 216.5 L311.5 247.0 L311.9 232.4 L312.3 208.9 L312.6 241.6 L313.0 242.1 L313.4 222.6 L313.8 240.8 L314.1 214.8 L314.5 245.4 L314.9 249.1 L315.2 252.0 L315.6 266.6 L316.0 196.9 L316.4 221.2 L316.7 216.6 L317.1 253.0 L317.5 228.8 L317.8 235.3 L318.2 252.0 L318.6 218.5 L319.0 237.8 L319.3 221.8 L319.7 248.2 L320.1 214.1 L320.4 217.0 L320.8 216.1 L321.2 243.2 L321.6 231.4 L321.9 200.6 L322.3 236.4 L322.7 222.1 L323.0 223.7 L323.4 243.9 L323.8 203.5 L324.2 261.6 L324.5 229.1 L324.9 224.0 L325.3 256.3 L325.6 229.6 L326.0 216.2 L326.4 221.9 L326.8 241.5 L327.1 242.3 L327.5 202.3 L327.9 224.2 L328.2 198.2 L328.6 216.9 L329.0 209.7 L329.4 200.3 L329.7 249.5 L330.1 239.9 L330.5 224.3 L330.8 224.3 L331.2 201.2 L331.6 211.8 L332.0 228.7 L332.3 234.3 L332.7 234.4 L333.1 239.7 L333.5 239.3 L333.8 215.4 L334.2 248.6 L334.6 238.6 L334.9 216.1 L335.3 238.4 L335.7 237.1 L336.1 266.9 L336.4 230.2 L336.8 233.6 L337.2 227.3 L337.5 218.4 L337.9 255.1 L338.3 197.6 L338.7 240.8 L339.0 228.4 L339.4 261.0 L339.8 224.8 L340.1 226.4 L340.5 230.7 L340.9 230.0 L341.3 208.0 L341.6 240.8 L342.0 249.8 L342.4 213.4 L342.7 234.9 L343.1 238.7 L343.5 199.3 L343.9 234.3 L344.2 236.2 L344.6 213.8 L345.0 249.2 L345.3 240.3 L345.7 236.1 L346.1 242.6 L346.5 235.5 L346.8 244.4 L347.2 231.5 L347.6 217.5 L347.9 227.1 L348.3 231.0 L348.7 217.4 L349.1 243.9 L349.4 239.0 L349.8 221.9 L350.2 264.8 L350.5 228.0 L350.9 179.0 L351.3 268.3 L351.7 208.8 L352.0 267.4 L352.4 222.5 L352.8 213.2 L353.2 202.2 L353.5 247.7 L353.9 258.3 L354.3 262.3 L354.6 228.9 L355.0 247.7 L355.4 232.4 L355.8 222.4 L356.1 222.4 L356.5 226.0 L356.9 251.5 L357.2 271.5 L357.6 224.9 L358.0 284.2 L358.4 213.2 L358.7 252.8 L359.1 235.4 L359.5 242.8 L359.8 233.4 L360.2 242.4 L360.6 245.9 L361.0 254.1 L361.3 219.6 L361.7 238.7 L362.1 204.5 L362.4 238.2 L362.8 245.0 L363.2 219.6 L363.6 216.9 L363.9 247.2 L364.3 235.0 L364.7 210.6 L365.0 240.9 L365.4 234.5 L365.8 224.3 L366.2 248.5 L366.5 271.6 L366.9 262.8 L367.3 216.6 L367.6 217.1 L368.0 221.1 L368.4 228.2 L368.8 253.5 L369.1 222.0 L369.5 211.2 L369.9 241.6 L370.2 208.2 L370.6 237.9 L371.0 228.9 L371.4 220.5 L371.7 266.1 L372.1 203.1 L372.5 251.1 L372.9 227.1 L373.2 241.6 L373.6 221.6 L374.0 221.7 L374.3 228.6 L374.7 209.1 L375.1 222.8 L375.5 238.5 L375.8 278.1 L376.2 227.3 L376.6 232.6 L376.9 242.7 L377.3 249.7 L377.7 211.6 L378.1 213.3 L378.4 206.7 L378.8 209.6 L379.2 230.4 L379.5 220.5 L379.9 251.7 L380.3 213.7 L380.7 221.7 L381.0 238.1 L381.4 240.4 L381.8 234.8 L382.1 234.1 L382.5 206.6 L382.9 178.0 L383.3 248.6 L383.6 210.6 L384.0 226.4 L384.4 241.3 L384.7 194.1 L385.1 240.4 L385.5 225.8 L385.9 228.3 L386.2 221.1 L386.6 220.7 L387.0 216.9 L387.3 257.2 L387.7 227.3 L388.1 208.9 L388.5 247.0 L388.8 220.8 L389.2 221.1 L389.6 219.4 L389.9 207.9 L390.3 265.4 L390.7 226.4 L391.1 246.5 L391.4 254.8 L391.8 233.2 L392.2 205.3 L392.6 239.4 L392.9 251.6 L393.3 241.2 L393.7 232.5 L394.0 235.8 L394.4 192.3 L394.8 219.5 L395.2 228.7 L395.5 240.5 L395.9 191.2 L396.3 177.9 L396.6 238.7 L397.0 235.7 L397.4 213.2 L397.8 260.5 L398.1 237.2 L398.5 218.2 L398.9 243.1 L399.2 244.2 L399.6 249.7 L400.0 236.2 L400.4 223.9 L400.7 262.9 L401.1 249.5 L401.5 243.9 L401.8 204.1 L402.2 219.3 L402.6 237.4 L403.0 226.5 L403.3 229.2 L403.7 229.9 L404.1 260.5 L404.4 229.9 L404.8 236.0 L405.2 221.4 L405.6 255.8 L405.9 223.5 L406.3 246.4 L406.7 265.6 L407.0 207.5 L407.4 226.2 L407.8 224.1 L408.2 236.7 L408.5 215.8 L408.9 216.9 L409.3 211.4 L409.6 216.6 L410.0 257.8 L410.4 261.8 L410.8 226.0 L411.1 249.3 L411.5 219.3 L411.9 234.2 L412.3 256.1 L412.6 257.3 L413.0 250.0 L413.4 242.8 L413.7 233.7 L414.1 216.0 L414.5 207.0 L414.9 245.0 L415.2 237.7 L415.6 199.0 L416.0 200.1 L416.3 227.8 L416.7 277.9 L417.1 248.6 L417.5 232.6 L417.8 244.1 L418.2 193.0 L418.6 227.4 L418.9 226.1 L419.3 265.8 L419.7 257.7 L420.1 246.1 L420.4 244.9 L420.8 236.6 L421.2 226.2 L421.5 231.7 L421.9 221.2 L422.3 264.1 L422.7 244.2 L423.0 228.6 L423.4 207.7 L423.8 242.8 L424.1 229.6 L424.5 246.9 L424.9 228.9 L425.3 223.8 L425.6 245.8 L426.0 244.2 L426.4 240.3 L426.7 228.2 L427.1 252.4 L427.5 222.1 L427.9 222.4 L428.2 223.2 L428.6 216.5 L429.0 235.7 L429.3 244.3 L429.7 203.6 L430.1 239.3 L430.5 225.0 L430.8 246.3 L431.2 233.6 L431.6 223.0 L432.0 234.1 L432.3 250.5 L432.7 221.1 L433.1 220.6 L433.4 246.5 L433.8 228.1 L434.2 234.8 L434.6 236.3 L434.9 244.2 L435.3 233.3 L435.7 253.9 L436.0 227.6 L436.4 257.5 L436.8 235.0 L437.2 282.7 L437.5 225.6 L437.9 213.9 L438.3 218.8 L438.6 214.1 L439.0 254.5 L439.4 191.8 L439.8 206.5 L440.1 253.5 L440.5 244.9 L440.9 229.4 L441.2 242.5 L441.6 233.9 L442.0 268.2 L442.4 228.6 L442.7 235.3 L443.1 242.6 L443.5 223.2 L443.8 239.5 L444.2 211.1 L444.6 225.5 L445.0 240.4 L445.3 212.7 L445.7 217.4 L446.1 242.5 L446.4 262.5 L446.8 250.4 L447.2 221.8 L447.6 237.0 L447.9 208.2 L448.3 223.4 L448.7 221.1 L449.0 226.6 L449.4 245.5 L449.8 232.4 L450.2 259.8 L450.5 278.9 L450.9 259.7 L451.3 218.9 L451.7 240.0 L452.0 233.3 L452.4 250.3 L452.8 259.7 L453.1 227.3 L453.5 224.3 L453.9 240.0 L454.3 208.5 L454.6 231.5 L455.0 239.7 L455.4 207.5 L455.7 255.7 L456.1 222.3 L456.5 250.7 L456.9 258.4 L457.2 248.3 L457.6 229.6 L458.0 224.0 L458.3 226.4 L458.7 220.0 L459.1 198.9 L459.5 192.5 L459.8 212.3 L460.2 221.4 L460.6 232.8 L460.9 255.0 L461.3 217.2 L461.7 233.4 L462.1 220.5 L462.4 261.1 L462.8 188.4 L463.2 248.1 L463.5 228.9 L463.9 214.8 L464.3 253.9 L464.7 236.8 L465.0 255.4 L465.4 257.0 L465.8 259.2 L466.1 233.6 L466.5 223.0 L466.9 242.1 L467.3 210.8 L467.6 209.4 L468.0 230.1 L468.4 242.9 L468.7 237.7 L469.1 240.0 L469.5 213.6 L469.9 224.9 L470.2 235.3 L470.6 236.8 L471.0 222.5 L471.4 234.9 L471.7 223.4 L472.1 247.4 L472.5 213.6 L472.8 217.1 L473.2 259.5 L473.6 236.2 L474.0 216.2 L474.3 243.8 L474.7 212.7 L475.1 221.8 L475.4 226.3 L475.8 232.8 L476.2 229.4 L476.6 221.8 L476.9 252.6 L477.3 246.2 L477.7 265.5 L478.0 201.4 L478.4 219.8 L478.8 217.2 L479.2 226.9 L479.5 241.7 L479.9 240.9 L480.3 220.7 L480.6 241.2 L481.0 205.6 L481.4 234.7 L481.8 225.8 L482.1 240.9 L482.5 221.4 L482.9 232.5 L483.2 207.8 L483.6 194.4 L484.0 250.3 L484.4 225.2 L484.7 219.1 L485.1 257.4 L485.5 242.5 L485.8 255.0 L486.2 272.1 L486.6 224.4 L487.0 225.9 L487.3 238.5 L487.7 223.2 L488.1 231.3 L488.4 190.0 L488.8 229.8 L489.2 214.1 L489.6 252.4 L489.9 220.8 L490.3 214.8 L490.7 242.2 L491.1 244.0 L491.4 248.8 L491.8 222.9 L492.2 210.8 L492.5 231.2 L492.9 253.5 L493.3 241.2 L493.7 273.5 L494.0 215.5 L494.4 245.1 L494.8 227.9 L495.1 215.0 L495.5 237.2 L495.9 213.4 L496.3 242.6 L496.6 234.6 L497.0 238.9 L497.4 239.7 L497.7 212.1 L498.1 251.4 L498.5 238.3 L498.9 241.2 L499.2 230.2 L499.6 189.5 L500.0 241.8 L500.3 268.3 L500.7 241.2 L501.1 257.5 L501.5 245.0 L501.8 235.1 L502.2 251.5 L502.6 248.3 L502.9 266.7 L503.3 234.0 L503.7 249.1 L504.1 216.3 L504.4 226.7 L504.8 248.9 L505.2 239.2 L505.5 229.0 L505.9 222.6 L506.3 262.8 L506.7 236.4 L507.0 201.9 L507.4 232.4 L507.8 230.0 L508.1 237.5 L508.5 256.4 L508.9 208.1 L509.3 235.1 L509.6 233.1 L510.0 224.5 L510.4 222.7 L510.7 263.9 L511.1 228.9 L511.5 244.8 L511.9 230.6 L512.2 256.8 L512.6 246.8 L513.0 215.0 L513.4 233.9 L513.7 249.5 L514.1 244.8 L514.5 228.5 L514.8 238.7 L515.2 279.0 L515.6 251.3 L516.0 246.8 L516.3 223.0 L516.7 206.0 L517.1 243.5 L517.4 201.2 L517.8 234.1 L518.2 243.6 L518.6 257.3 L518.9 247.0 L519.3 196.3 L519.7 238.4 L520.0 227.8 L520.4 204.7 L520.8 197.3 L521.2 249.7 L521.5 239.2 L521.9 225.6 L522.3 203.4 L522.6 200.0 L523.0 228.6 L523.4 229.4 L523.8 209.0 L524.1 215.1 L524.5 241.9 L524.9 212.9 L525.2 236.7 L525.6 272.3 L526.0 251.0 L526.4 227.7 L526.7 218.2 L527.1 270.8 L527.5 258.9 L527.8 235.8 L528.2 286.9 L528.6 214.2 L529.0 211.5 L529.3 282.3 L529.7 217.5 L530.1 239.1 L530.4 205.5 L530.8 226.6 L531.2 237.4 L531.6 231.0 L531.9 215.7 L532.3 222.8 L532.7 236.1 L533.1 255.6 L533.4 214.1 L533.8 224.3 L534.2 187.1 L534.5 218.7 L534.9 234.5 L535.3 251.2 L535.7 225.6 L536.0 249.9 L536.4 244.4 L536.8 206.7 L537.1 206.4 L537.5 238.2 L537.9 251.7 L538.3 232.1 L538.6 251.7 L539.0 195.8 L539.4 229.7 L539.7 214.9 L540.1 251.0 L540.5 239.4 L540.9 221.5 L541.2 225.4 L541.6 244.6 L542.0 198.2 L542.3 214.3 L542.7 235.3 L543.1 239.5 L543.5 232.0 L543.8 206.2 L544.2 252.0 L544.6 229.3 L544.9 245.2 L545.3 209.3 L545.7 232.6 L546.1 218.4 L546.4 220.5 L546.8 245.3 L547.2 229.6 L547.5 219.3 L547.9 262.8 L548.3 228.2 L548.7 176.4 L549.0 242.1 L549.4 219.3 L549.8 251.6 L550.1 223.8 L550.5 251.6 L550.9 223.4 L551.3 233.3 L551.6 248.8 L552.0 205.9 L552.4 238.1 L552.8 253.4 L553.1 222.7 L553.5 252.4 L553.9 226.3 L554.2 241.3 L554.6 240.6 L555.0 215.8 L555.4 256.5 L555.7 210.7 L556.1 262.5 L556.5 202.2 L556.8 225.9 L557.2 235.3 L557.6 240.3 L558.0 222.0 L558.3 239.3 L558.7 230.5 L559.1 218.1 L559.4 236.2 L559.8 264.1 L560.2 211.8 L560.6 211.9 L560.9 262.8 L561.3 228.3 L561.7 233.1 L562.0 222.3 L562.4 201.8 L562.8 243.4 L563.2 239.7 L563.5 233.9 L563.9 221.9 L564.3 205.1 L564.6 228.1 L565.0 230.8 L565.4 202.8 L565.8 257.7 L566.1 247.5 L566.5 236.5 L566.9 232.2 L567.2 237.2 L567.6 237.6 L568.0 200.8 L568.4 242.6 L568.7 241.2 L569.1 211.8 L569.5 225.8 L569.8 233.5 L570.2 226.7 L570.6 206.1 L571.0 229.9 L571.3 213.6 L571.7 245.5 L572.1 228.3 L572.5 270.0 L572.8 239.3 L573.2 253.3 L573.6 212.8 L573.9 235.2 L574.3 218.3 L574.7 237.2 L575.1 236.1 L575.4 235.3 L575.8 240.7 L576.2 211.1 L576.5 256.6 L576.9 220.5 L577.3 190.4 L577.7 249.0 L578.0 236.6 L578.4 251.7 L578.8 228.9 L579.1 264.8 L579.5 212.8 L579.9 237.5 L580.3 257.3 L580.6 258.2 L581.0 262.4 L581.0 338.5 Z" fill="rgba(126,178,109,0.07)"/><path d="M61.0 230.8 L61.4 249.1 L61.7 259.5 L62.1 246.1 L62.5 242.9 L62.9 233.3 L63.2 219.5 L63.6 256.8 L64.0 222.3 L64.3 223.6 L64.7 229.3 L65.1 239.9 L65.5 247.3 L65.8 219.4 L66.2 226.0 L66.6 253.7 L66.9 261.5 L67.3 230.7 L67.7 247.8 L68.1 239.5 L68.4 231.7 L68.8 214.9 L69.2 243.0 L69.5 204.3 L69.9 217.8 L70.3 243.5 L70.7 262.7 L71.0 213.4 L71.4 223.9 L71.8 192.3 L72.2 210.4 L72.5 217.9 L72.9 201.7 L73.3 245.1 L73.6 228.1 L74.0 243.7 L74.4 203.2 L74.8 224.3 L75.1 286.9 L75.5 214.2 L75.9 242.2 L76.2 219.1 L76.6 253.0 L77.0 221.7 L77.4 222.7 L77.7 239.2 L78.1 254.7 L78.5 212.8 L78.8 231.7 L79.2 221.7 L79.6 212.5 L80.0 239.2 L80.3 195.9 L80.7 227.2 L81.1 219.9 L81.4 204.5 L81.8 254.1 L82.2 250.4 L82.6 230.7 L82.9 231.1 L83.3 207.2 L83.7 222.3 L84.0 246.0 L84.4 223.0 L84.8 217.7 L85.2 209.7 L85.5 218.3 L85.9 256.9 L86.3 210.8 L86.6 232.5 L87.0 223.8 L87.4 256.9 L87.8 212.6 L88.1 246.1 L88.5 211.2 L88.9 186.4 L89.2 209.7 L89.6 261.4 L90.0 253.0 L90.4 247.4 L90.7 222.3 L91.1 233.2 L91.5 218.5 L91.9 228.2 L92.2 227.7 L92.6 216.0 L93.0 205.4 L93.3 234.9 L93.7 228.0 L94.1 260.4 L94.5 259.3 L94.8 239.4 L95.2 241.5 L95.6 231.4 L95.9 212.1 L96.3 242.9 L96.7 238.2 L97.1 239.9 L97.4 229.4 L97.8 238.9 L98.2 225.4 L98.5 226.2 L98.9 220.8 L99.3 220.4 L99.7 250.2 L100.0 227.2 L100.4 208.4 L100.8 234.7 L101.1 220.4 L101.5 228.2 L101.9 235.5 L102.3 235.2 L102.6 237.6 L103.0 228.6 L103.4 242.3 L103.7 244.1 L104.1 209.8 L104.5 229.3 L104.9 209.4 L105.2 232.1 L105.6 200.4 L106.0 239.4 L106.3 231.3 L106.7 201.0 L107.1 220.5 L107.5 220.7 L107.8 234.0 L108.2 215.9 L108.6 253.2 L108.9 245.7 L109.3 232.7 L109.7 231.3 L110.1 233.3 L110.4 236.0 L110.8 234.7 L111.2 241.1 L111.6 248.9 L111.9 252.8 L112.3 225.4 L112.7 263.9 L113.0 251.1 L113.4 244.0 L113.8 251.5 L114.2 226.7 L114.5 242.4 L114.9 235.0 L115.3 226.4 L115.6 248.6 L116.0 227.1 L116.4 230.2 L116.8 237.5 L117.1 227.2 L117.5 223.1 L117.9 229.3 L118.2 196.7 L118.6 241.7 L119.0 225.9 L119.4 218.6 L119.7 234.3 L120.1 262.4 L120.5 224.1 L120.8 225.4 L121.2 232.2 L121.6 225.9 L122.0 228.3 L122.3 248.0 L122.7 228.6 L123.1 277.2 L123.4 233.9 L123.8 257.6 L124.2 236.3 L124.6 228.5 L124.9 245.7 L125.3 242.2 L125.7 222.8 L126.0 227.5 L126.4 242.2 L126.8 240.3 L127.2 213.0 L127.5 225.3 L127.9 221.9 L128.3 251.7 L128.6 218.8 L129.0 257.5 L129.4 224.6 L129.8 250.3 L130.1 206.5 L130.5 262.2 L130.9 253.0 L131.3 221.4 L131.6 266.7 L132.0 241.0 L132.4 213.4 L132.7 220.4 L133.1 245.2 L133.5 242.8 L133.9 263.4 L134.2 252.0 L134.6 247.7 L135.0 199.7 L135.3 229.5 L135.7 242.2 L136.1 245.2 L136.5 216.7 L136.8 230.5 L137.2 253.8 L137.6 221.0 L137.9 253.6 L138.3 233.4 L138.7 236.8 L139.1 201.6 L139.4 231.8 L139.8 230.9 L140.2 207.6 L140.5 226.6 L140.9 226.3 L141.3 219.1 L141.7 238.3 L142.0 223.4 L142.4 212.7 L142.8 235.0 L143.1 198.0 L143.5 275.0 L143.9 246.1 L144.3 209.1 L144.6 230.6 L145.0 240.3 L145.4 228.6 L145.7 213.3 L146.1 238.2 L146.5 224.2 L146.9 233.2 L147.2 234.3 L147.6 234.6 L148.0 215.9 L148.3 250.2 L148.7 243.0 L149.1 217.1 L149.5 252.9 L149.8 250.3 L150.2 228.3 L150.6 229.6 L150.9 234.2 L151.3 231.2 L151.7 250.4 L152.1 187.7 L152.4 241.7 L152.8 239.4 L153.2 258.1 L153.6 230.0 L153.9 208.8 L154.3 237.7 L154.7 227.4 L155.0 244.1 L155.4 205.8 L155.8 230.0 L156.2 238.9 L156.5 217.9 L156.9 243.0 L157.3 235.1 L157.6 239.5 L158.0 221.9 L158.4 220.7 L158.8 238.0 L159.1 254.8 L159.5 213.1 L159.9 229.1 L160.2 225.7 L160.6 238.9 L161.0 250.9 L161.4 254.8 L161.7 207.6 L162.1 239.3 L162.5 235.6 L162.8 246.2 L163.2 164.5 L163.6 233.9 L164.0 256.2 L164.3 234.3 L164.7 243.3 L165.1 244.2 L165.4 255.8 L165.8 226.7 L166.2 229.9 L166.6 200.6 L166.9 232.8 L167.3 228.2 L167.7 237.8 L168.0 221.1 L168.4 256.2 L168.8 257.3 L169.2 249.6 L169.5 224.5 L169.9 256.9 L170.3 213.6 L170.6 227.0 L171.0 250.8 L171.4 238.6 L171.8 223.5 L172.1 243.1 L172.5 253.7 L172.9 215.6 L173.3 203.6 L173.6 215.3 L174.0 241.0 L174.4 238.0 L174.7 232.7 L175.1 213.5 L175.5 184.8 L175.9 233.6 L176.2 211.8 L176.6 236.5 L177.0 197.3 L177.3 247.9 L177.7 241.4 L178.1 224.9 L178.5 245.5 L178.8 209.0 L179.2 249.3 L179.6 223.9 L179.9 223.9 L180.3 238.9 L180.7 233.6 L181.1 216.7 L181.4 175.9 L181.8 247.3 L182.2 225.0 L182.5 231.5 L182.9 233.4 L183.3 226.2 L183.7 241.6 L184.0 231.6 L184.4 185.9 L184.8 268.6 L185.1 236.5 L185.5 230.1 L185.9 247.8 L186.3 231.8 L186.6 221.3 L187.0 234.0 L187.4 212.5 L187.7 256.5 L188.1 217.3 L188.5 236.7 L188.9 245.3 L189.2 235.4 L189.6 235.1 L190.0 216.3 L190.3 248.0 L190.7 235.0 L191.1 240.7 L191.5 221.9 L191.8 252.0 L192.2 200.7 L192.6 263.2 L193.0 234.0 L193.3 233.7 L193.7 226.2 L194.1 247.8 L194.4 264.3 L194.8 249.9 L195.2 213.5 L195.6 230.7 L195.9 247.0 L196.3 219.0 L196.7 246.0 L197.0 239.2 L197.4 250.0 L197.8 220.2 L198.2 204.1 L198.5 258.9 L198.9 229.3 L199.3 211.5 L199.6 197.6 L200.0 272.1 L200.4 232.6 L200.8 199.9 L201.1 260.8 L201.5 250.6 L201.9 225.1 L202.2 216.8 L202.6 238.2 L203.0 227.5 L203.4 245.2 L203.7 226.6 L204.1 235.2 L204.5 234.5 L204.8 253.8 L205.2 203.0 L205.6 216.8 L206.0 217.5 L206.3 245.5 L206.7 231.8 L207.1 199.2 L207.4 224.2 L207.8 237.3 L208.2 235.6 L208.6 230.6 L208.9 244.2 L209.3 243.3 L209.7 217.8 L210.0 222.6 L210.4 239.1 L210.8 258.4 L211.2 243.7 L211.5 234.0 L211.9 211.4 L212.3 244.2 L212.7 216.8 L213.0 235.6 L213.4 255.1 L213.8 285.2 L214.1 241.6 L214.5 260.3 L214.9 238.7 L215.3 231.0 L215.6 199.4 L216.0 236.7 L216.4 243.9 L216.7 193.2 L217.1 227.9 L217.5 239.4 L217.9 243.1 L218.2 266.5 L218.6 229.4 L219.0 234.6 L219.3 205.5 L219.7 221.6 L220.1 225.6 L220.5 218.0 L220.8 225.9 L221.2 238.0 L221.6 228.6 L221.9 234.1 L222.3 254.7 L222.7 238.0 L223.1 224.7 L223.4 232.4 L223.8 270.2 L224.2 237.2 L224.5 217.1 L224.9 263.7 L225.3 238.1 L225.7 214.3 L226.0 253.4 L226.4 234.6 L226.8 228.7 L227.1 261.1 L227.5 230.6 L227.9 219.1 L228.3 243.0 L228.6 231.1 L229.0 209.5 L229.4 236.0 L229.7 227.7 L230.1 221.4 L230.5 240.8 L230.9 217.6 L231.2 225.9 L231.6 250.0 L232.0 220.5 L232.4 216.0 L232.7 218.5 L233.1 245.2 L233.5 258.7 L233.8 206.7 L234.2 234.8 L234.6 216.3 L235.0 214.1 L235.3 224.2 L235.7 218.5 L236.1 238.3 L236.4 203.0 L236.8 235.8 L237.2 235.1 L237.6 229.3 L237.9 232.9 L238.3 228.0 L238.7 226.3 L239.0 249.2 L239.4 238.2 L239.8 231.1 L240.2 225.3 L240.5 233.1 L240.9 196.8 L241.3 216.4 L241.6 234.6 L242.0 215.5 L242.4 210.8 L242.8 225.3 L243.1 265.1 L243.5 227.3 L243.9 237.6 L244.2 204.7 L244.6 257.6 L245.0 205.7 L245.4 236.2 L245.7 216.0 L246.1 231.0 L246.5 226.6 L246.8 218.0 L247.2 244.9 L247.6 223.8 L248.0 240.0 L248.3 243.0 L248.7 238.1 L249.1 246.6 L249.4 234.1 L249.8 208.6 L250.2 254.3 L250.6 266.3 L250.9 219.3 L251.3 235.0 L251.7 208.2 L252.1 214.2 L252.4 205.3 L252.8 242.7 L253.2 233.5 L253.5 285.6 L253.9 242.0 L254.3 230.1 L254.7 258.0 L255.0 236.3 L255.4 260.6 L255.8 231.2 L256.1 216.8 L256.5 195.9 L256.9 204.6 L257.3 253.7 L257.6 276.6 L258.0 232.9 L258.4 211.6 L258.7 261.6 L259.1 238.6 L259.5 231.3 L259.9 234.0 L260.2 234.5 L260.6 277.2 L261.0 216.7 L261.3 226.5 L261.7 220.4 L262.1 188.2 L262.5 251.1 L262.8 241.8 L263.2 212.8 L263.6 200.9 L263.9 229.6 L264.3 210.2 L264.7 237.0 L265.1 226.0 L265.4 221.9 L265.8 227.8 L266.2 228.5 L266.5 224.7 L266.9 203.6 L267.3 203.9 L267.7 245.2 L268.0 230.4 L268.4 267.3 L268.8 221.1 L269.1 200.1 L269.5 220.8 L269.9 212.9 L270.3 247.6 L270.6 194.1 L271.0 236.3 L271.4 212.9 L271.8 233.0 L272.1 241.8 L272.5 240.1 L272.9 245.1 L273.2 263.7 L273.6 194.1 L274.0 227.1 L274.4 256.8 L274.7 211.4 L275.1 228.7 L275.5 229.7 L275.8 219.0 L276.2 250.2 L276.6 280.8 L277.0 234.3 L277.3 243.0 L277.7 215.4 L278.1 244.3 L278.4 241.9 L278.8 220.5 L279.2 240.2 L279.6 227.2 L279.9 224.9 L280.3 243.5 L280.7 213.3 L281.0 239.1 L281.4 225.4 L281.8 232.1 L282.2 247.1 L282.5 216.1 L282.9 212.7 L283.3 208.4 L283.6 216.1 L284.0 246.2 L284.4 215.8 L284.8 257.2 L285.1 228.4 L285.5 203.2 L285.9 221.9 L286.2 247.1 L286.6 253.8 L287.0 197.9 L287.4 240.5 L287.7 286.9 L288.1 251.6 L288.5 223.0 L288.8 212.2 L289.2 228.5 L289.6 207.2 L290.0 225.5 L290.3 218.0 L290.7 211.8 L291.1 230.9 L291.5 214.4 L291.8 234.3 L292.2 236.8 L292.6 211.8 L292.9 233.7 L293.3 237.9 L293.7 249.6 L294.1 230.7 L294.4 242.6 L294.8 206.5 L295.2 223.5 L295.5 229.1 L295.9 197.2 L296.3 277.5 L296.7 254.3 L297.0 276.6 L297.4 282.8 L297.8 217.3 L298.1 223.7 L298.5 229.8 L298.9 250.5 L299.3 211.3 L299.6 233.4 L300.0 226.8 L300.4 232.6 L300.7 229.3 L301.1 237.8 L301.5 246.6 L301.9 236.3 L302.2 233.3 L302.6 248.1 L303.0 216.8 L303.3 242.4 L303.7 249.5 L304.1 231.1 L304.5 225.1 L304.8 244.5 L305.2 238.5 L305.6 244.0 L305.9 248.7 L306.3 259.1 L306.7 224.0 L307.1 242.1 L307.4 237.0 L307.8 222.0 L308.2 237.2 L308.5 191.0 L308.9 248.0 L309.3 246.6 L309.7 237.8 L310.0 204.8 L310.4 234.9 L310.8 261.1 L311.2 216.5 L311.5 247.0 L311.9 232.4 L312.3 208.9 L312.6 241.6 L313.0 242.1 L313.4 222.6 L313.8 240.8 L314.1 214.8 L314.5 245.4 L314.9 249.1 L315.2 252.0 L315.6 266.6 L316.0 196.9 L316.4 221.2 L316.7 216.6 L317.1 253.0 L317.5 228.8 L317.8 235.3 L318.2 252.0 L318.6 218.5 L319.0 237.8 L319.3 221.8 L319.7 248.2 L320.1 214.1 L320.4 217.0 L320.8 216.1 L321.2 243.2 L321.6 231.4 L321.9 200.6 L322.3 236.4 L322.7 222.1 L323.0 223.7 L323.4 243.9 L323.8 203.5 L324.2 261.6 L324.5 229.1 L324.9 224.0 L325.3 256.3 L325.6 229.6 L326.0 216.2 L326.4 221.9 L326.8 241.5 L327.1 242.3 L327.5 202.3 L327.9 224.2 L328.2 198.2 L328.6 216.9 L329.0 209.7 L329.4 200.3 L329.7 249.5 L330.1 239.9 L330.5 224.3 L330.8 224.3 L331.2 201.2 L331.6 211.8 L332.0 228.7 L332.3 234.3 L332.7 234.4 L333.1 239.7 L333.5 239.3 L333.8 215.4 L334.2 248.6 L334.6 238.6 L334.9 216.1 L335.3 238.4 L335.7 237.1 L336.1 266.9 L336.4 230.2 L336.8 233.6 L337.2 227.3 L337.5 218.4 L337.9 255.1 L338.3 197.6 L338.7 240.8 L339.0 228.4 L339.4 261.0 L339.8 224.8 L340.1 226.4 L340.5 230.7 L340.9 230.0 L341.3 208.0 L341.6 240.8 L342.0 249.8 L342.4 213.4 L342.7 234.9 L343.1 238.7 L343.5 199.3 L343.9 234.3 L344.2 236.2 L344.6 213.8 L345.0 249.2 L345.3 240.3 L345.7 236.1 L346.1 242.6 L346.5 235.5 L346.8 244.4 L347.2 231.5 L347.6 217.5 L347.9 227.1 L348.3 231.0 L348.7 217.4 L349.1 243.9 L349.4 239.0 L349.8 221.9 L350.2 264.8 L350.5 228.0 L350.9 179.0 L351.3 268.3 L351.7 208.8 L352.0 267.4 L352.4 222.5 L352.8 213.2 L353.2 202.2 L353.5 247.7 L353.9 258.3 L354.3 262.3 L354.6 228.9 L355.0 247.7 L355.4 232.4 L355.8 222.4 L356.1 222.4 L356.5 226.0 L356.9 251.5 L357.2 271.5 L357.6 224.9 L358.0 284.2 L358.4 213.2 L358.7 252.8 L359.1 235.4 L359.5 242.8 L359.8 233.4 L360.2 242.4 L360.6 245.9 L361.0 254.1 L361.3 219.6 L361.7 238.7 L362.1 204.5 L362.4 238.2 L362.8 245.0 L363.2 219.6 L363.6 216.9 L363.9 247.2 L364.3 235.0 L364.7 210.6 L365.0 240.9 L365.4 234.5 L365.8 224.3 L366.2 248.5 L366.5 271.6 L366.9 262.8 L367.3 216.6 L367.6 217.1 L368.0 221.1 L368.4 228.2 L368.8 253.5 L369.1 222.0 L369.5 211.2 L369.9 241.6 L370.2 208.2 L370.6 237.9 L371.0 228.9 L371.4 220.5 L371.7 266.1 L372.1 203.1 L372.5 251.1 L372.9 227.1 L373.2 241.6 L373.6 221.6 L374.0 221.7 L374.3 228.6 L374.7 209.1 L375.1 222.8 L375.5 238.5 L375.8 278.1 L376.2 227.3 L376.6 232.6 L376.9 242.7 L377.3 249.7 L377.7 211.6 L378.1 213.3 L378.4 206.7 L378.8 209.6 L379.2 230.4 L379.5 220.5 L379.9 251.7 L380.3 213.7 L380.7 221.7 L381.0 238.1 L381.4 240.4 L381.8 234.8 L382.1 234.1 L382.5 206.6 L382.9 178.0 L383.3 248.6 L383.6 210.6 L384.0 226.4 L384.4 241.3 L384.7 194.1 L385.1 240.4 L385.5 225.8 L385.9 228.3 L386.2 221.1 L386.6 220.7 L387.0 216.9 L387.3 257.2 L387.7 227.3 L388.1 208.9 L388.5 247.0 L388.8 220.8 L389.2 221.1 L389.6 219.4 L389.9 207.9 L390.3 265.4 L390.7 226.4 L391.1 246.5 L391.4 254.8 L391.8 233.2 L392.2 205.3 L392.6 239.4 L392.9 251.6 L393.3 241.2 L393.7 232.5 L394.0 235.8 L394.4 192.3 L394.8 219.5 L395.2 228.7 L395.5 240.5 L395.9 191.2 L396.3 177.9 L396.6 238.7 L397.0 235.7 L397.4 213.2 L397.8 260.5 L398.1 237.2 L398.5 218.2 L398.9 243.1 L399.2 244.2 L399.6 249.7 L400.0 236.2 L400.4 223.9 L400.7 262.9 L401.1 249.5 L401.5 243.9 L401.8 204.1 L402.2 219.3 L402.6 237.4 L403.0 226.5 L403.3 229.2 L403.7 229.9 L404.1 260.5 L404.4 229.9 L404.8 236.0 L405.2 221.4 L405.6 255.8 L405.9 223.5 L406.3 246.4 L406.7 265.6 L407.0 207.5 L407.4 226.2 L407.8 224.1 L408.2 236.7 L408.5 215.8 L408.9 216.9 L409.3 211.4 L409.6 216.6 L410.0 257.8 L410.4 261.8 L410.8 226.0 L411.1 249.3 L411.5 219.3 L411.9 234.2 L412.3 256.1 L412.6 257.3 L413.0 250.0 L413.4 242.8 L413.7 233.7 L414.1 216.0 L414.5 207.0 L414.9 245.0 L415.2 237.7 L415.6 199.0 L416.0 200.1 L416.3 227.8 L416.7 277.9 L417.1 248.6 L417.5 232.6 L417.8 244.1 L418.2 193.0 L418.6 227.4 L418.9 226.1 L419.3 265.8 L419.7 257.7 L420.1 246.1 L420.4 244.9 L420.8 236.6 L421.2 226.2 L421.5 231.7 L421.9 221.2 L422.3 264.1 L422.7 244.2 L423.0 228.6 L423.4 207.7 L423.8 242.8 L424.1 229.6 L424.5 246.9 L424.9 228.9 L425.3 223.8 L425.6 245.8 L426.0 244.2 L426.4 240.3 L426.7 228.2 L427.1 252.4 L427.5 222.1 L427.9 222.4 L428.2 223.2 L428.6 216.5 L429.0 235.7 L429.3 244.3 L429.7 203.6 L430.1 239.3 L430.5 225.0 L430.8 246.3 L431.2 233.6 L431.6 223.0 L432.0 234.1 L432.3 250.5 L432.7 221.1 L433.1 220.6 L433.4 246.5 L433.8 228.1 L434.2 234.8 L434.6 236.3 L434.9 244.2 L435.3 233.3 L435.7 253.9 L436.0 227.6 L436.4 257.5 L436.8 235.0 L437.2 282.7 L437.5 225.6 L437.9 213.9 L438.3 218.8 L438.6 214.1 L439.0 254.5 L439.4 191.8 L439.8 206.5 L440.1 253.5 L440.5 244.9 L440.9 229.4 L441.2 242.5 L441.6 233.9 L442.0 268.2 L442.4 228.6 L442.7 235.3 L443.1 242.6 L443.5 223.2 L443.8 239.5 L444.2 211.1 L444.6 225.5 L445.0 240.4 L445.3 212.7 L445.7 217.4 L446.1 242.5 L446.4 262.5 L446.8 250.4 L447.2 221.8 L447.6 237.0 L447.9 208.2 L448.3 223.4 L448.7 221.1 L449.0 226.6 L449.4 245.5 L449.8 232.4 L450.2 259.8 L450.5 278.9 L450.9 259.7 L451.3 218.9 L451.7 240.0 L452.0 233.3 L452.4 250.3 L452.8 259.7 L453.1 227.3 L453.5 224.3 L453.9 240.0 L454.3 208.5 L454.6 231.5 L455.0 239.7 L455.4 207.5 L455.7 255.7 L456.1 222.3 L456.5 250.7 L456.9 258.4 L457.2 248.3 L457.6 229.6 L458.0 224.0 L458.3 226.4 L458.7 220.0 L459.1 198.9 L459.5 192.5 L459.8 212.3 L460.2 221.4 L460.6 232.8 L460.9 255.0 L461.3 217.2 L461.7 233.4 L462.1 220.5 L462.4 261.1 L462.8 188.4 L463.2 248.1 L463.5 228.9 L463.9 214.8 L464.3 253.9 L464.7 236.8 L465.0 255.4 L465.4 257.0 L465.8 259.2 L466.1 233.6 L466.5 223.0 L466.9 242.1 L467.3 210.8 L467.6 209.4 L468.0 230.1 L468.4 242.9 L468.7 237.7 L469.1 240.0 L469.5 213.6 L469.9 224.9 L470.2 235.3 L470.6 236.8 L471.0 222.5 L471.4 234.9 L471.7 223.4 L472.1 247.4 L472.5 213.6 L472.8 217.1 L473.2 259.5 L473.6 236.2 L474.0 216.2 L474.3 243.8 L474.7 212.7 L475.1 221.8 L475.4 226.3 L475.8 232.8 L476.2 229.4 L476.6 221.8 L476.9 252.6 L477.3 246.2 L477.7 265.5 L478.0 201.4 L478.4 219.8 L478.8 217.2 L479.2 226.9 L479.5 241.7 L479.9 240.9 L480.3 220.7 L480.6 241.2 L481.0 205.6 L481.4 234.7 L481.8 225.8 L482.1 240.9 L482.5 221.4 L482.9 232.5 L483.2 207.8 L483.6 194.4 L484.0 250.3 L484.4 225.2 L484.7 219.1 L485.1 257.4 L485.5 242.5 L485.8 255.0 L486.2 272.1 L486.6 224.4 L487.0 225.9 L487.3 238.5 L487.7 223.2 L488.1 231.3 L488.4 190.0 L488.8 229.8 L489.2 214.1 L489.6 252.4 L489.9 220.8 L490.3 214.8 L490.7 242.2 L491.1 244.0 L491.4 248.8 L491.8 222.9 L492.2 210.8 L492.5 231.2 L492.9 253.5 L493.3 241.2 L493.7 273.5 L494.0 215.5 L494.4 245.1 L494.8 227.9 L495.1 215.0 L495.5 237.2 L495.9 213.4 L496.3 242.6 L496.6 234.6 L497.0 238.9 L497.4 239.7 L497.7 212.1 L498.1 251.4 L498.5 238.3 L498.9 241.2 L499.2 230.2 L499.6 189.5 L500.0 241.8 L500.3 268.3 L500.7 241.2 L501.1 257.5 L501.5 245.0 L501.8 235.1 L502.2 251.5 L502.6 248.3 L502.9 266.7 L503.3 234.0 L503.7 249.1 L504.1 216.3 L504.4 226.7 L504.8 248.9 L505.2 239.2 L505.5 229.0 L505.9 222.6 L506.3 262.8 L506.7 236.4 L507.0 201.9 L507.4 232.4 L507.8 230.0 L508.1 237.5 L508.5 256.4 L508.9 208.1 L509.3 235.1 L509.6 233.1 L510.0 224.5 L510.4 222.7 L510.7 263.9 L511.1 228.9 L511.5 244.8 L511.9 230.6 L512.2 256.8 L512.6 246.8 L513.0 215.0 L513.4 233.9 L513.7 249.5 L514.1 244.8 L514.5 228.5 L514.8 238.7 L515.2 279.0 L515.6 251.3 L516.0 246.8 L516.3 223.0 L516.7 206.0 L517.1 243.5 L517.4 201.2 L517.8 234.1 L518.2 243.6 L518.6 257.3 L518.9 247.0 L519.3 196.3 L519.7 238.4 L520.0 227.8 L520.4 204.7 L520.8 197.3 L521.2 249.7 L521.5 239.2 L521.9 225.6 L522.3 203.4 L522.6 200.0 L523.0 228.6 L523.4 229.4 L523.8 209.0 L524.1 215.1 L524.5 241.9 L524.9 212.9 L525.2 236.7 L525.6 272.3 L526.0 251.0 L526.4 227.7 L526.7 218.2 L527.1 270.8 L527.5 258.9 L527.8 235.8 L528.2 286.9 L528.6 214.2 L529.0 211.5 L529.3 282.3 L529.7 217.5 L530.1 239.1 L530.4 205.5 L530.8 226.6 L531.2 237.4 L531.6 231.0 L531.9 215.7 L532.3 222.8 L532.7 236.1 L533.1 255.6 L533.4 214.1 L533.8 224.3 L534.2 187.1 L534.5 218.7 L534.9 234.5 L535.3 251.2 L535.7 225.6 L536.0 249.9 L536.4 244.4 L536.8 206.7 L537.1 206.4 L537.5 238.2 L537.9 251.7 L538.3 232.1 L538.6 251.7 L539.0 195.8 L539.4 229.7 L539.7 214.9 L540.1 251.0 L540.5 239.4 L540.9 221.5 L541.2 225.4 L541.6 244.6 L542.0 198.2 L542.3 214.3 L542.7 235.3 L543.1 239.5 L543.5 232.0 L543.8 206.2 L544.2 252.0 L544.6 229.3 L544.9 245.2 L545.3 209.3 L545.7 232.6 L546.1 218.4 L546.4 220.5 L546.8 245.3 L547.2 229.6 L547.5 219.3 L547.9 262.8 L548.3 228.2 L548.7 176.4 L549.0 242.1 L549.4 219.3 L549.8 251.6 L550.1 223.8 L550.5 251.6 L550.9 223.4 L551.3 233.3 L551.6 248.8 L552.0 205.9 L552.4 238.1 L552.8 253.4 L553.1 222.7 L553.5 252.4 L553.9 226.3 L554.2 241.3 L554.6 240.6 L555.0 215.8 L555.4 256.5 L555.7 210.7 L556.1 262.5 L556.5 202.2 L556.8 225.9 L557.2 235.3 L557.6 240.3 L558.0 222.0 L558.3 239.3 L558.7 230.5 L559.1 218.1 L559.4 236.2 L559.8 264.1 L560.2 211.8 L560.6 211.9 L560.9 262.8 L561.3 228.3 L561.7 233.1 L562.0 222.3 L562.4 201.8 L562.8 243.4 L563.2 239.7 L563.5 233.9 L563.9 221.9 L564.3 205.1 L564.6 228.1 L565.0 230.8 L565.4 202.8 L565.8 257.7 L566.1 247.5 L566.5 236.5 L566.9 232.2 L567.2 237.2 L567.6 237.6 L568.0 200.8 L568.4 242.6 L568.7 241.2 L569.1 211.8 L569.5 225.8 L569.8 233.5 L570.2 226.7 L570.6 206.1 L571.0 229.9 L571.3 213.6 L571.7 245.5 L572.1 228.3 L572.5 270.0 L572.8 239.3 L573.2 253.3 L573.6 212.8 L573.9 235.2 L574.3 218.3 L574.7 237.2 L575.1 236.1 L575.4 235.3 L575.8 240.7 L576.2 211.1 L576.5 256.6 L576.9 220.5 L577.3 190.4 L577.7 249.0 L578.0 236.6 L578.4 251.7 L578.8 228.9 L579.1 264.8 L579.5 212.8 L579.9 237.5 L580.3 257.3 L580.6 258.2 L581.0 262.4" stroke="#7eb26d" stroke-width="1.5" fill="none" stroke-linejoin="bevel"/><line x1="61" y1="338.1" x2="581" y2="338.1" stroke="#eab839" stroke-width="1.8"/><path d="M666.5 158.5 L667.0 158.5 L667.5 158.5 L667.9 158.5 L668.4 158.5 L668.9 158.5 L669.4 158.5 L669.9 158.5 L670.3 158.5 L670.8 158.5 L671.3 158.5 L671.8 158.5 L672.2 158.5 L672.7 158.5 L673.2 158.5 L673.7 158.5 L674.2 158.5 L674.6 158.5 L675.1 158.5 L675.6 158.5 L676.1 158.5 L676.6 158.5 L677.0 158.5 L677.5 158.5 L678.0 158.5 L678.5 158.5 L678.9 158.5 L679.4 158.5 L679.9 158.5 L680.4 158.5 L680.9 158.5 L681.3 158.5 L681.8 158.5 L682.3 158.5 L682.8 158.5 L683.3 158.5 L683.7 158.5 L684.2 158.5 L684.7 158.5 L685.2 158.5 L685.6 158.5 L686.1 158.5 L686.6 158.5 L687.1 158.5 L687.6 158.5 L688.0 158.5 L688.5 158.5 L689.0 158.5 L689.5 158.5 L690.0 158.5 L690.4 158.5 L690.9 158.5 L691.4 158.5 L691.9 158.5 L692.3 158.5 L692.8 158.5 L693.3 158.5 L693.8 158.5 L694.3 158.5 L694.7 158.5 L695.2 158.5 L695.7 158.5 L696.2 158.5 L696.7 158.5 L697.1 158.5 L697.6 158.5 L698.1 158.5 L698.6 158.5 L699.0 158.5 L699.5 158.5 L700.0 158.5 L700.5 158.5 L701.0 158.5 L701.4 158.5 L701.9 158.5 L702.4 158.5 L702.9 158.5 L703.4 158.5 L703.8 158.5 L704.3 158.5 L704.8 158.5 L705.3 158.5 L705.7 158.5 L706.2 158.5 L706.7 158.5 L707.2 158.5 L707.7 158.5 L708.1 158.5 L708.6 158.5 L709.1 158.5 L709.6 158.5 L710.1 158.5 L710.5 158.5 L711.0 158.5 L711.5 158.5 L712.0 158.5 L712.4 158.5 L712.9 158.5 L713.4 158.5 L713.9 158.5 L714.4 158.5 L714.8 158.5 L715.3 158.5 L715.8 158.5 L716.3 158.5 L716.8 158.5 L717.2 158.5 L717.7 158.5 L718.2 158.5 L718.7 158.5 L719.1 158.5 L719.6 158.5 L720.1 158.5 L720.6 158.5 L721.1 158.5 L721.5 158.5 L722.0 158.5 L722.5 158.5 L723.0 158.5 L723.5 158.5 L723.9 158.5 L724.4 158.5 L724.9 158.5 L725.4 158.5 L725.8 158.5 L726.3 158.5 L726.8 158.5 L727.3 158.5 L727.8 158.5 L728.2 158.5 L728.7 158.5 L729.2 158.5 L729.7 158.5 L730.2 158.5 L730.6 158.5 L731.1 158.5 L731.6 158.5 L732.1 158.5 L732.5 158.5 L733.0 158.5 L733.5 158.5 L734.0 158.5 L734.5 158.5 L734.9 158.5 L735.4 158.5 L735.9 158.5 L736.4 158.5 L736.9 158.5 L737.3 158.5 L737.8 158.5 L738.3 158.5 L738.8 158.5 L739.2 158.5 L739.7 158.5 L740.2 158.5 L740.7 158.5 L741.2 158.5 L741.6 158.5 L742.1 158.5 L742.6 158.5 L743.1 158.5 L743.6 158.5 L744.0 158.5 L744.5 158.5 L745.0 158.5 L745.5 158.5 L746.0 158.5 L746.4 158.5 L746.9 158.5 L747.4 158.5 L747.9 158.5 L748.3 158.5 L748.8 158.5 L749.3 158.5 L749.8 158.5 L750.3 158.5 L750.7 158.5 L751.2 158.5 L751.7 158.5 L752.2 158.5 L752.7 158.5 L753.1 158.5 L753.6 158.5 L754.1 158.5 L754.6 158.5 L755.0 158.5 L755.5 158.5 L756.0 158.5 L756.5 158.5 L757.0 158.5 L757.4 158.5 L757.9 158.5 L758.4 158.5 L758.9 158.5 L759.4 158.5 L759.8 158.5 L760.3 158.5 L760.8 158.5 L761.3 158.5 L761.7 158.5 L762.2 158.5 L762.7 158.5 L763.2 158.5 L763.7 158.5 L764.1 158.5 L764.6 158.5 L765.1 158.5 L765.6 158.5 L766.1 158.5 L766.5 158.5 L767.0 158.5 L767.5 158.5 L768.0 158.5 L768.4 158.5 L768.9 158.5 L769.4 158.5 L769.9 158.5 L770.4 158.5 L770.8 158.5 L771.3 158.5 L771.8 158.5 L772.3 158.5 L772.8 158.5 L773.2 158.5 L773.7 158.5 L774.2 158.5 L774.7 158.5 L775.1 158.5 L775.6 158.5 L776.1 158.5 L776.6 158.5 L777.1 158.5 L777.5 158.5 L778.0 158.5 L778.5 158.5 L779.0 158.5 L779.5 158.5 L779.9 158.5 L780.4 158.5 L780.9 158.5 L781.4 158.5 L781.8 158.5 L782.3 158.5 L782.8 158.5 L783.3 158.5 L783.8 158.5 L784.2 158.5 L784.7 158.5 L785.2 158.5 L785.7 158.5 L786.2 158.5 L786.6 158.5 L787.1 158.5 L787.6 158.5 L788.1 158.5 L788.5 158.5 L789.0 158.5 L789.5 158.5 L790.0 158.5 L790.5 158.5 L790.9 158.5 L791.4 158.5 L791.9 158.5 L792.4 158.5 L792.9 158.5 L793.3 158.5 L793.8 158.5 L794.3 158.5 L794.8 158.5 L795.2 158.5 L795.7 158.5 L796.2 158.5 L796.7 158.5 L797.2 158.5 L797.6 158.5 L798.1 158.5 L798.6 158.5 L799.1 158.5 L799.6 158.5 L800.0 158.5 L800.5 158.5 L801.0 158.5 L801.5 158.5 L801.9 158.5 L802.4 158.5 L802.9 158.5 L803.4 158.5 L803.9 158.5 L804.3 158.5 L804.8 158.5 L805.3 158.5 L805.8 158.5 L806.3 158.5 L806.7 158.5 L807.2 158.5 L807.7 158.5 L808.2 158.5 L808.6 158.5 L809.1 158.5 L809.6 158.5 L810.1 158.5 L810.6 158.5 L811.0 158.5 L811.5 158.5 L812.0 158.5 L812.5 158.5 L813.0 158.5 L813.4 158.5 L813.9 158.5 L814.4 158.5 L814.9 158.5 L815.3 158.5 L815.8 158.5 L816.3 158.5 L816.8 158.5 L817.3 158.5 L817.7 158.5 L818.2 158.5 L818.7 158.5 L819.2 158.5 L819.7 158.5 L820.1 158.5 L820.6 158.5 L821.1 158.5 L821.6 158.5 L822.1 158.5 L822.5 158.5 L823.0 158.5 L823.5 158.5 L824.0 158.5 L824.4 158.5 L824.9 158.5 L825.4 158.5 L825.9 158.5 L826.4 158.5 L826.8 158.5 L827.3 158.5 L827.8 158.5 L828.3 158.5 L828.8 158.5 L829.2 158.5 L829.7 158.5 L830.2 158.5 L830.7 158.5 L831.1 158.5 L831.6 158.5 L832.1 158.5 L832.6 158.5 L833.1 158.5 L833.5 158.5 L834.0 158.5 L834.5 158.5 L835.0 158.5 L835.5 158.5 L835.9 158.5 L836.4 158.5 L836.9 158.5 L837.4 158.5 L837.8 158.5 L838.3 158.5 L838.8 158.5 L839.3 158.5 L839.8 158.5 L840.2 158.5 L840.7 158.5 L841.2 158.5 L841.7 158.5 L842.2 158.5 L842.6 158.5 L843.1 158.5 L843.6 158.5 L844.1 158.5 L844.5 158.5 L845.0 158.5 L845.5 158.5 L846.0 158.5 L846.5 158.5 L846.9 158.5 L847.4 158.5 L847.9 158.5 L848.4 158.5 L848.9 158.5 L849.3 158.5 L849.8 158.5 L850.3 158.5 L850.8 158.5 L851.2 158.5 L851.7 158.5 L852.2 158.5 L852.7 158.5 L853.2 158.5 L853.6 158.5 L854.1 158.5 L854.6 158.5 L855.1 158.5 L855.6 158.5 L856.0 158.5 L856.5 158.5 L857.0 158.5 L857.5 158.5 L857.9 158.5 L858.4 158.5 L858.9 158.5 L859.4 158.5 L859.9 158.5 L860.3 158.5 L860.8 158.5 L861.3 158.5 L861.8 158.5 L862.3 158.5 L862.7 158.5 L863.2 158.5 L863.7 158.5 L864.2 158.5 L864.6 158.5 L865.1 158.5 L865.6 158.5 L866.1 158.5 L866.6 158.5 L867.0 158.5 L867.5 158.5 L868.0 158.5 L868.5 158.5 L869.0 158.5 L869.4 158.5 L869.9 158.5 L870.4 158.5 L870.9 158.5 L871.3 158.5 L871.8 158.5 L872.3 158.5 L872.8 158.5 L873.3 158.5 L873.7 158.5 L874.2 158.5 L874.7 158.5 L875.2 158.5 L875.7 158.5 L876.1 158.5 L876.6 158.5 L877.1 158.5 L877.6 158.5 L878.0 158.5 L878.5 158.5 L879.0 158.5 L879.5 158.5 L880.0 158.5 L880.4 158.5 L880.9 158.5 L881.4 158.5 L881.9 158.5 L882.4 158.5 L882.8 158.5 L883.3 158.5 L883.8 158.5 L884.3 158.5 L884.7 158.5 L885.2 158.5 L885.7 158.5 L886.2 158.5 L886.7 158.5 L887.1 158.5 L887.6 158.5 L888.1 158.5 L888.6 158.5 L889.1 158.5 L889.5 158.5 L890.0 158.5 L890.5 158.5 L891.0 158.5 L891.4 158.5 L891.9 158.5 L892.4 158.5 L892.9 158.5 L893.4 158.5 L893.8 158.5 L894.3 158.5 L894.8 158.5 L895.3 158.5 L895.8 158.5 L896.2 158.5 L896.7 158.5 L897.2 158.5 L897.7 158.5 L898.2 158.5 L898.6 158.5 L899.1 158.5 L899.6 158.5 L900.1 158.5 L900.5 158.5 L901.0 158.5 L901.5 158.5 L902.0 158.5 L902.5 158.5 L902.9 158.5 L903.4 158.5 L903.9 158.5 L904.4 158.5 L904.9 158.5 L905.3 158.5 L905.8 158.5 L906.3 158.5 L906.8 158.5 L907.2 158.5 L907.7 158.5 L908.2 158.5 L908.7 158.5 L909.2 158.5 L909.6 158.5 L910.1 158.5 L910.6 158.5 L911.1 158.5 L911.6 158.5 L912.0 158.5 L912.5 158.5 L913.0 158.5 L913.5 158.5 L913.9 158.5 L914.4 158.5 L914.9 158.5 L915.4 158.5 L915.9 158.5 L916.3 158.5 L916.8 158.5 L917.3 158.5 L917.8 158.5 L918.3 158.5 L918.7 158.5 L919.2 158.5 L919.7 158.5 L920.2 158.5 L920.6 158.5 L921.1 158.5 L921.6 158.5 L922.1 158.5 L922.6 158.5 L923.0 158.5 L923.5 158.5 L924.0 158.5 L924.5 158.5 L925.0 158.5 L925.4 158.5 L925.9 158.5 L926.4 158.5 L926.9 158.5 L927.3 158.5 L927.8 158.5 L928.3 158.5 L928.8 158.5 L929.3 158.5 L929.7 158.5 L930.2 158.5 L930.7 158.5 L931.2 158.5 L931.7 158.5 L932.1 158.5 L932.6 158.5 L933.1 158.5 L933.6 158.5 L934.0 158.5 L934.5 158.5 L935.0 158.5 L935.5 158.5 L936.0 158.5 L936.4 158.5 L936.9 158.5 L937.4 158.5 L937.9 158.5 L938.4 158.5 L938.8 158.5 L939.3 158.5 L939.8 158.5 L940.3 158.5 L940.7 158.5 L941.2 158.5 L941.7 158.5 L942.2 158.5 L942.7 158.5 L943.1 158.5 L943.6 158.5 L944.1 158.5 L944.6 158.5 L945.1 158.5 L945.5 158.5 L946.0 158.5 L946.5 158.5 L947.0 158.5 L947.4 158.5 L947.9 158.5 L948.4 158.5 L948.9 158.5 L949.4 158.5 L949.8 158.5 L950.3 158.5 L950.8 158.5 L951.3 158.5 L951.8 158.5 L952.2 158.5 L952.7 158.5 L953.2 158.5 L953.7 158.5 L954.1 158.5 L954.6 158.5 L955.1 158.5 L955.6 158.5 L956.1 158.5 L956.5 158.5 L957.0 158.5 L957.5 158.5 L958.0 158.5 L958.5 158.5 L958.9 158.5 L959.4 158.5 L959.9 158.5 L960.4 158.5 L960.8 158.5 L961.3 158.5 L961.8 158.5 L962.3 158.5 L962.8 158.5 L963.2 158.5 L963.7 158.5 L964.2 158.5 L964.7 158.5 L965.2 158.5 L965.6 158.5 L966.1 158.5 L966.6 158.5 L967.1 158.5 L967.6 158.5 L968.0 158.5 L968.5 158.5 L969.0 158.5 L969.5 158.5 L969.9 158.5 L970.4 158.5 L970.9 158.5 L971.4 158.5 L971.9 158.5 L972.3 158.5 L972.8 158.5 L973.3 158.5 L973.8 158.5 L974.3 158.5 L974.7 158.5 L975.2 158.5 L975.7 158.5 L976.2 158.5 L976.6 158.5 L977.1 158.5 L977.6 158.5 L978.1 158.5 L978.6 158.5 L979.0 158.5 L979.5 158.5 L980.0 158.5 L980.5 158.5 L981.0 158.5 L981.4 158.5 L981.9 158.5 L982.4 158.5 L982.9 158.5 L983.3 158.5 L983.8 158.5 L984.3 158.5 L984.8 158.5 L985.3 158.5 L985.7 158.5 L986.2 158.5 L986.7 158.5 L987.2 158.5 L987.7 158.5 L988.1 158.5 L988.6 158.5 L989.1 158.5 L989.6 158.5 L990.0 158.5 L990.5 158.5 L991.0 158.5 L991.5 158.5 L992.0 158.5 L992.4 158.5 L992.9 158.5 L993.4 158.5 L993.9 158.5 L994.4 158.5 L994.8 158.5 L995.3 158.5 L995.8 158.5 L996.3 158.5 L996.7 158.5 L997.2 158.5 L997.7 158.5 L998.2 158.5 L998.7 158.5 L999.1 158.5 L999.6 158.5 L1000.1 158.5 L1000.6 158.5 L1001.1 158.5 L1001.5 158.5 L1002.0 158.5 L1002.5 158.5 L1003.0 158.5 L1003.4 158.5 L1003.9 158.5 L1004.4 158.5 L1004.9 158.5 L1005.4 158.5 L1005.8 158.5 L1006.3 158.5 L1006.8 158.5 L1007.3 158.5 L1007.8 158.5 L1008.2 158.5 L1008.7 158.5 L1009.2 158.5 L1009.7 158.5 L1010.1 158.5 L1010.6 158.5 L1011.1 158.5 L1011.6 158.5 L1012.1 158.5 L1012.5 158.5 L1013.0 158.5 L1013.5 158.5 L1014.0 158.5 L1014.5 158.5 L1014.9 158.5 L1015.4 158.5 L1015.9 158.5 L1016.4 158.5 L1016.8 158.5 L1017.3 158.5 L1017.8 158.5 L1018.3 158.5 L1018.8 158.5 L1019.2 158.5 L1019.7 158.5 L1020.2 158.5 L1020.7 158.5 L1021.2 158.5 L1021.6 158.5 L1022.1 158.5 L1022.6 158.5 L1023.1 158.5 L1023.5 158.5 L1024.0 158.5 L1024.5 158.5 L1025.0 158.5 L1025.5 158.5 L1025.9 158.5 L1026.4 158.5 L1026.9 158.5 L1027.4 158.5 L1027.9 158.5 L1028.3 158.5 L1028.8 158.5 L1029.3 158.5 L1029.8 158.5 L1030.2 158.5 L1030.7 158.5 L1031.2 158.5 L1031.7 158.5 L1032.2 158.5 L1032.6 158.5 L1033.1 158.5 L1033.6 158.5 L1034.1 158.5 L1034.6 158.5 L1035.0 158.5 L1035.5 158.5 L1036.0 158.5 L1036.5 158.5 L1036.9 158.5 L1037.4 158.5 L1037.9 158.5 L1038.4 158.5 L1038.9 158.5 L1039.3 158.5 L1039.8 158.5 L1040.3 158.5 L1040.8 158.5 L1041.3 158.5 L1041.7 158.5 L1042.2 158.5 L1042.7 158.5 L1043.2 158.5 L1043.7 158.5 L1044.1 158.5 L1044.6 158.5 L1045.1 158.5 L1045.6 158.5 L1046.0 158.5 L1046.5 158.5 L1047.0 158.5 L1047.5 158.5 L1048.0 158.5 L1048.4 158.5 L1048.9 158.5 L1049.4 158.5 L1049.9 158.5 L1050.4 158.5 L1050.8 158.5 L1051.3 158.5 L1051.8 158.5 L1052.3 158.5 L1052.7 158.5 L1053.2 158.5 L1053.7 158.5 L1054.2 158.5 L1054.7 158.5 L1055.1 158.5 L1055.6 158.5 L1056.1 158.5 L1056.6 158.5 L1057.1 158.5 L1057.5 158.5 L1058.0 158.5 L1058.5 158.5 L1059.0 158.5 L1059.4 158.5 L1059.9 158.5 L1060.4 158.5 L1060.9 158.5 L1061.4 158.5 L1061.8 158.5 L1062.3 158.5 L1062.8 158.5 L1063.3 158.5 L1063.8 158.5 L1064.2 158.5 L1064.7 158.5 L1065.2 158.5 L1065.7 158.5 L1066.1 158.5 L1066.6 158.5 L1067.1 158.5 L1067.6 158.5 L1068.1 158.5 L1068.5 158.5 L1069.0 158.5 L1069.5 158.5 L1070.0 158.5 L1070.5 158.5 L1070.9 158.5 L1071.4 158.5 L1071.9 158.5 L1072.4 158.5 L1072.8 158.5 L1073.3 158.5 L1073.8 158.5 L1074.3 158.5 L1074.8 158.5 L1075.2 158.5 L1075.7 158.5 L1076.2 158.5 L1076.7 158.5 L1077.2 158.5 L1077.6 158.5 L1078.1 158.5 L1078.6 158.5 L1079.1 158.5 L1079.5 158.5 L1080.0 158.5 L1080.5 158.5 L1081.0 158.5 L1081.5 158.5 L1081.9 158.5 L1082.4 158.5 L1082.9 158.5 L1083.4 158.5 L1083.9 158.5 L1084.3 158.5 L1084.8 158.5 L1085.3 158.5 L1085.8 158.5 L1086.2 158.5 L1086.7 158.5 L1087.2 158.5 L1087.7 158.5 L1088.2 158.5 L1088.6 158.5 L1089.1 158.5 L1089.6 158.5 L1090.1 158.5 L1090.6 158.5 L1091.0 158.5 L1091.5 158.5 L1092.0 158.5 L1092.5 158.5 L1092.9 158.5 L1093.4 158.5 L1093.9 158.5 L1094.4 158.5 L1094.9 158.5 L1095.3 158.5 L1095.8 158.5 L1096.3 158.5 L1096.8 158.5 L1097.3 158.5 L1097.7 158.5 L1098.2 158.5 L1098.7 158.5 L1099.2 158.5 L1099.6 158.5 L1100.1 158.5 L1100.6 158.5 L1101.1 158.5 L1101.6 158.5 L1102.0 158.5 L1102.5 158.5 L1103.0 158.5 L1103.5 158.5 L1104.0 158.5 L1104.4 158.5 L1104.9 158.5 L1105.4 158.5 L1105.9 158.5 L1106.3 158.5 L1106.8 158.5 L1107.3 158.5 L1107.8 158.5 L1108.3 158.5 L1108.7 158.5 L1109.2 158.5 L1109.7 158.5 L1110.2 158.5 L1110.7 158.5 L1111.1 158.5 L1111.6 158.5 L1112.1 158.5 L1112.6 158.5 L1113.0 158.5 L1113.5 158.5 L1114.0 158.5 L1114.5 158.5 L1115.0 158.5 L1115.4 158.5 L1115.9 158.5 L1116.4 158.5 L1116.9 158.5 L1117.4 158.5 L1117.8 158.5 L1118.3 158.5 L1118.8 158.5 L1119.3 158.5 L1119.8 158.5 L1120.2 158.5 L1120.7 158.5 L1121.2 158.5 L1121.7 158.5 L1122.1 158.5 L1122.6 158.5 L1123.1 158.5 L1123.6 158.5 L1124.1 158.5 L1124.5 158.5 L1125.0 158.5 L1125.5 158.5 L1126.0 158.5 L1126.5 158.5 L1126.9 158.5 L1127.4 158.5 L1127.9 158.5 L1128.4 158.5 L1128.8 158.5 L1129.3 158.5 L1129.8 158.5 L1130.3 158.5 L1130.8 158.5 L1131.2 158.5 L1131.7 158.5 L1132.2 158.5 L1132.7 158.5 L1133.2 158.5 L1133.6 158.5 L1134.1 158.5 L1134.6 158.5 L1135.1 158.5 L1135.5 158.5 L1136.0 158.5 L1136.5 158.5 L1137.0 158.5 L1137.5 158.5 L1137.9 158.5 L1138.4 158.5 L1138.9 158.5 L1139.4 158.5 L1139.9 158.5 L1140.3 158.5 L1140.8 158.5 L1141.3 158.5 L1141.8 158.5 L1142.2 158.5 L1142.7 158.5 L1143.2 158.5 L1143.7 158.5 L1144.2 158.5 L1144.6 158.5 L1145.1 158.5 L1145.6 158.5 L1146.1 158.5 L1146.6 158.5 L1147.0 158.5 L1147.5 158.5 L1148.0 158.5 L1148.5 158.5 L1148.9 158.5 L1149.4 158.5 L1149.9 158.5 L1150.4 158.5 L1150.9 158.5 L1151.3 158.5 L1151.8 158.5 L1152.3 158.5 L1152.8 158.5 L1153.3 158.5 L1153.7 158.5 L1154.2 158.5 L1154.7 158.5 L1155.2 158.5 L1155.6 158.5 L1156.1 158.5 L1156.6 158.5 L1157.1 158.5 L1157.6 158.5 L1158.0 158.5 L1158.5 158.5 L1159.0 158.5 L1159.5 158.5 L1160.0 158.5 L1160.4 158.5 L1160.9 158.5 L1161.4 158.5 L1161.9 158.5 L1162.3 158.5 L1162.8 158.5 L1163.3 158.5 L1163.8 158.5 L1164.3 158.5 L1164.7 158.5 L1165.2 158.5 L1165.7 158.5 L1166.2 158.5 L1166.7 158.5 L1167.1 158.5 L1167.6 158.5 L1168.1 158.5 L1168.6 158.5 L1169.0 158.5 L1169.5 158.5 L1170.0 158.5 L1170.5 158.5 L1171.0 158.5 L1171.4 158.5 L1171.9 158.5 L1172.4 158.5 L1172.9 158.5 L1173.4 158.5 L1173.8 158.5 L1174.3 158.5 L1174.8 158.5 L1175.3 158.5 L1175.7 158.5 L1176.2 158.5 L1176.7 158.5 L1177.2 158.5 L1177.7 158.5 L1178.1 158.5 L1178.6 158.5 L1179.1 158.5 L1179.6 158.5 L1180.1 158.5 L1180.5 158.5 L1181.0 158.5 L1181.5 158.5 L1182.0 158.5 L1182.4 158.5 L1182.9 158.5 L1183.4 158.5 L1183.9 158.5 L1184.4 158.5 L1184.8 158.5 L1185.3 158.5 L1185.8 158.5 L1186.3 158.5 L1186.8 158.5 L1187.2 158.5 L1187.7 158.5 L1188.2 158.5 L1188.7 158.5 L1189.1 158.5 L1189.6 158.5 L1190.1 158.5 L1190.6 158.5 L1191.1 158.5 L1191.5 158.5 L1192.0 158.5 L1192.5 158.5 L1192.5 323.7 L1192.0 324.7 L1191.5 324.1 L1191.1 325.5 L1190.6 324.1 L1190.1 321.3 L1189.6 322.3 L1189.1 324.7 L1188.7 324.2 L1188.2 323.6 L1187.7 323.7 L1187.2 324.1 L1186.8 319.9 L1186.3 320.8 L1185.8 321.4 L1185.3 323.2 L1184.8 324.0 L1184.4 318.9 L1183.9 323.0 L1183.4 324.0 L1182.9 323.2 L1182.4 323.1 L1182.0 323.5 L1181.5 320.8 L1181.0 323.5 L1180.5 324.6 L1180.1 323.2 L1179.6 322.4 L1179.1 324.7 L1178.6 325.7 L1178.1 325.0 L1177.7 322.8 L1177.2 325.0 L1176.7 320.7 L1176.2 323.8 L1175.7 323.3 L1175.3 323.0 L1174.8 321.5 L1174.3 322.7 L1173.8 323.4 L1173.4 322.8 L1172.9 325.4 L1172.4 324.9 L1171.9 323.2 L1171.4 325.1 L1171.0 324.7 L1170.5 320.4 L1170.0 325.1 L1169.5 323.9 L1169.0 323.3 L1168.6 325.3 L1168.1 323.1 L1167.6 324.5 L1167.1 322.8 L1166.7 322.9 L1166.2 324.0 L1165.7 325.1 L1165.2 324.5 L1164.7 324.6 L1164.3 320.9 L1163.8 323.4 L1163.3 325.3 L1162.8 324.3 L1162.3 323.5 L1161.9 323.4 L1161.4 326.5 L1160.9 323.7 L1160.4 325.7 L1160.0 323.6 L1159.5 324.2 L1159.0 323.4 L1158.5 326.7 L1158.0 323.1 L1157.6 324.3 L1157.1 322.6 L1156.6 326.2 L1156.1 324.3 L1155.6 324.2 L1155.2 323.8 L1154.7 324.6 L1154.2 322.1 L1153.7 320.6 L1153.3 323.6 L1152.8 322.0 L1152.3 325.1 L1151.8 323.6 L1151.3 325.5 L1150.9 321.8 L1150.4 324.1 L1149.9 321.5 L1149.4 325.1 L1148.9 323.5 L1148.5 324.5 L1148.0 324.7 L1147.5 324.6 L1147.0 322.6 L1146.6 324.9 L1146.1 320.6 L1145.6 326.2 L1145.1 323.8 L1144.6 325.1 L1144.2 323.3 L1143.7 323.6 L1143.2 322.5 L1142.7 322.2 L1142.2 325.1 L1141.8 323.7 L1141.3 324.4 L1140.8 322.7 L1140.3 323.4 L1139.9 322.5 L1139.4 324.7 L1138.9 321.7 L1138.4 319.2 L1137.9 322.1 L1137.5 322.4 L1137.0 324.1 L1136.5 326.5 L1136.0 325.9 L1135.5 324.7 L1135.1 323.4 L1134.6 322.4 L1134.1 322.8 L1133.6 322.7 L1133.2 325.4 L1132.7 324.1 L1132.2 324.0 L1131.7 321.1 L1131.2 324.6 L1130.8 323.5 L1130.3 323.6 L1129.8 324.7 L1129.3 324.4 L1128.8 325.8 L1128.4 320.2 L1127.9 324.2 L1127.4 319.4 L1126.9 324.4 L1126.5 325.7 L1126.0 322.9 L1125.5 322.3 L1125.0 326.6 L1124.5 324.8 L1124.1 322.4 L1123.6 321.9 L1123.1 324.2 L1122.6 323.2 L1122.1 322.5 L1121.7 323.2 L1121.2 322.6 L1120.7 322.3 L1120.2 325.8 L1119.8 324.2 L1119.3 322.8 L1118.8 323.7 L1118.3 321.7 L1117.8 324.2 L1117.4 324.6 L1116.9 324.2 L1116.4 323.0 L1115.9 326.4 L1115.4 323.6 L1115.0 324.3 L1114.5 323.0 L1114.0 321.8 L1113.5 315.4 L1113.0 324.8 L1112.6 321.5 L1112.1 320.8 L1111.6 322.1 L1111.1 323.4 L1110.7 320.4 L1110.2 322.5 L1109.7 326.0 L1109.2 321.2 L1108.7 323.2 L1108.3 324.9 L1107.8 324.5 L1107.3 321.8 L1106.8 322.9 L1106.3 325.1 L1105.9 325.7 L1105.4 322.9 L1104.9 323.9 L1104.4 323.5 L1104.0 322.3 L1103.5 323.8 L1103.0 320.5 L1102.5 321.2 L1102.0 323.2 L1101.6 321.4 L1101.1 325.0 L1100.6 322.5 L1100.1 326.6 L1099.6 320.1 L1099.2 321.8 L1098.7 321.8 L1098.2 323.7 L1097.7 324.2 L1097.3 321.5 L1096.8 322.0 L1096.3 325.4 L1095.8 324.7 L1095.3 324.6 L1094.9 323.0 L1094.4 320.1 L1093.9 323.2 L1093.4 324.5 L1092.9 325.0 L1092.5 321.8 L1092.0 325.7 L1091.5 323.4 L1091.0 321.2 L1090.6 322.3 L1090.1 323.1 L1089.6 322.2 L1089.1 324.8 L1088.6 324.9 L1088.2 323.9 L1087.7 322.4 L1087.2 325.4 L1086.7 324.9 L1086.2 324.3 L1085.8 322.0 L1085.3 323.3 L1084.8 322.6 L1084.3 324.3 L1083.9 325.6 L1083.4 322.0 L1082.9 324.0 L1082.4 321.8 L1081.9 323.4 L1081.5 325.3 L1081.0 322.9 L1080.5 323.8 L1080.0 322.4 L1079.5 323.8 L1079.1 324.2 L1078.6 323.2 L1078.1 322.0 L1077.6 326.0 L1077.2 322.1 L1076.7 323.6 L1076.2 322.4 L1075.7 321.8 L1075.2 324.0 L1074.8 326.1 L1074.3 324.0 L1073.8 324.7 L1073.3 321.4 L1072.8 324.4 L1072.4 323.8 L1071.9 326.1 L1071.4 324.5 L1070.9 324.1 L1070.5 325.1 L1070.0 325.0 L1069.5 325.6 L1069.0 324.3 L1068.5 322.8 L1068.1 324.4 L1067.6 321.3 L1067.1 325.5 L1066.6 324.9 L1066.1 325.3 L1065.7 324.5 L1065.2 323.0 L1064.7 323.9 L1064.2 324.9 L1063.8 325.0 L1063.3 323.4 L1062.8 324.7 L1062.3 325.2 L1061.8 324.6 L1061.4 322.6 L1060.9 323.3 L1060.4 324.6 L1059.9 326.5 L1059.4 325.6 L1059.0 322.7 L1058.5 323.3 L1058.0 324.9 L1057.5 324.1 L1057.1 323.8 L1056.6 322.6 L1056.1 324.5 L1055.6 323.3 L1055.1 323.2 L1054.7 319.7 L1054.2 323.2 L1053.7 322.5 L1053.2 322.1 L1052.7 325.7 L1052.3 323.6 L1051.8 324.0 L1051.3 325.1 L1050.8 325.4 L1050.4 321.3 L1049.9 325.5 L1049.4 323.8 L1048.9 323.1 L1048.4 323.4 L1048.0 320.8 L1047.5 324.1 L1047.0 324.7 L1046.5 322.9 L1046.0 322.4 L1045.6 321.8 L1045.1 322.4 L1044.6 324.1 L1044.1 326.2 L1043.7 325.9 L1043.2 324.9 L1042.7 323.5 L1042.2 321.8 L1041.7 326.8 L1041.3 323.2 L1040.8 321.0 L1040.3 321.8 L1039.8 322.9 L1039.3 321.1 L1038.9 325.4 L1038.4 322.7 L1037.9 321.0 L1037.4 323.1 L1036.9 324.8 L1036.5 323.7 L1036.0 321.3 L1035.5 324.6 L1035.0 323.2 L1034.6 323.9 L1034.1 323.3 L1033.6 325.2 L1033.1 323.8 L1032.6 323.6 L1032.2 324.1 L1031.7 321.6 L1031.2 323.7 L1030.7 324.2 L1030.2 325.6 L1029.8 326.6 L1029.3 324.4 L1028.8 323.4 L1028.3 323.8 L1027.9 322.6 L1027.4 323.7 L1026.9 326.8 L1026.4 324.3 L1025.9 325.1 L1025.5 322.9 L1025.0 325.9 L1024.5 323.2 L1024.0 322.5 L1023.5 322.5 L1023.1 326.9 L1022.6 325.0 L1022.1 324.0 L1021.6 324.6 L1021.2 324.7 L1020.7 322.7 L1020.2 325.7 L1019.7 324.7 L1019.2 322.8 L1018.8 326.0 L1018.3 326.6 L1017.8 327.0 L1017.3 324.6 L1016.8 323.9 L1016.4 325.7 L1015.9 321.6 L1015.4 326.3 L1014.9 321.9 L1014.5 325.5 L1014.0 323.1 L1013.5 322.6 L1013.0 323.2 L1012.5 324.1 L1012.1 323.1 L1011.6 325.5 L1011.1 322.7 L1010.6 323.9 L1010.1 325.9 L1009.7 324.3 L1009.2 324.3 L1008.7 324.1 L1008.2 322.4 L1007.8 324.5 L1007.3 326.5 L1006.8 323.1 L1006.3 320.8 L1005.8 322.2 L1005.4 322.2 L1004.9 324.4 L1004.4 323.8 L1003.9 322.6 L1003.4 326.5 L1003.0 325.2 L1002.5 322.6 L1002.0 326.4 L1001.5 324.0 L1001.1 326.2 L1000.6 321.3 L1000.1 322.8 L999.6 323.8 L999.1 325.8 L998.7 326.9 L998.2 322.6 L997.7 321.6 L997.2 322.0 L996.7 325.1 L996.3 325.1 L995.8 321.6 L995.3 322.6 L994.8 324.7 L994.4 323.6 L993.9 327.1 L993.4 324.0 L992.9 324.2 L992.4 323.0 L992.0 326.3 L991.5 321.7 L991.0 324.0 L990.5 324.8 L990.0 324.3 L989.6 323.6 L989.1 322.0 L988.6 323.7 L988.1 324.4 L987.7 323.6 L987.2 323.5 L986.7 321.9 L986.2 324.2 L985.7 324.5 L985.3 324.9 L984.8 324.0 L984.3 323.8 L983.8 325.1 L983.3 323.5 L982.9 324.2 L982.4 323.5 L981.9 322.9 L981.4 323.8 L981.0 326.8 L980.5 326.1 L980.0 325.7 L979.5 321.4 L979.0 324.1 L978.6 322.3 L978.1 323.6 L977.6 322.6 L977.1 323.0 L976.6 324.0 L976.2 323.3 L975.7 325.3 L975.2 325.8 L974.7 323.3 L974.3 324.1 L973.8 325.5 L973.3 325.7 L972.8 323.9 L972.3 322.4 L971.9 323.2 L971.4 323.8 L970.9 323.3 L970.4 326.9 L969.9 324.6 L969.5 324.1 L969.0 321.4 L968.5 321.6 L968.0 322.3 L967.6 322.6 L967.1 323.5 L966.6 322.5 L966.1 321.0 L965.6 323.3 L965.2 323.9 L964.7 324.9 L964.2 322.7 L963.7 327.4 L963.2 325.0 L962.8 324.1 L962.3 322.3 L961.8 323.8 L961.3 321.7 L960.8 324.6 L960.4 322.9 L959.9 324.3 L959.4 323.5 L958.9 321.7 L958.5 323.9 L958.0 326.5 L957.5 324.7 L957.0 324.8 L956.5 323.4 L956.1 322.1 L955.6 322.1 L955.1 325.5 L954.6 327.3 L954.1 325.8 L953.7 322.3 L953.2 324.3 L952.7 323.0 L952.2 322.6 L951.8 322.2 L951.3 324.1 L950.8 325.3 L950.3 324.2 L949.8 324.0 L949.4 324.9 L948.9 323.2 L948.4 324.8 L947.9 324.6 L947.4 322.3 L947.0 322.2 L946.5 323.5 L946.0 324.6 L945.5 324.5 L945.1 320.4 L944.6 324.1 L944.1 324.0 L943.6 324.8 L943.1 320.1 L942.7 325.0 L942.2 326.5 L941.7 322.6 L941.2 326.7 L940.7 325.7 L940.3 324.2 L939.8 323.9 L939.3 322.5 L938.8 325.9 L938.4 322.0 L937.9 327.5 L937.4 325.9 L936.9 324.3 L936.4 322.8 L936.0 326.0 L935.5 321.9 L935.0 323.9 L934.5 325.4 L934.0 324.1 L933.6 327.1 L933.1 324.9 L932.6 324.1 L932.1 325.8 L931.7 323.8 L931.2 321.8 L930.7 325.8 L930.2 325.2 L929.7 326.0 L929.3 324.3 L928.8 325.6 L928.3 324.1 L927.8 324.6 L927.3 325.9 L926.9 323.7 L926.4 324.3 L925.9 324.6 L925.4 324.9 L925.0 325.7 L924.5 325.0 L924.0 325.1 L923.5 326.6 L923.0 324.9 L922.6 325.0 L922.1 325.2 L921.6 324.8 L921.1 323.7 L920.6 324.7 L920.2 324.7 L919.7 324.0 L919.2 326.5 L918.7 323.4 L918.3 324.8 L917.8 325.1 L917.3 322.4 L916.8 324.7 L916.3 322.1 L915.9 323.1 L915.4 324.8 L914.9 325.0 L914.4 323.8 L913.9 322.5 L913.5 324.1 L913.0 322.2 L912.5 323.1 L912.0 323.9 L911.6 321.4 L911.1 324.0 L910.6 324.5 L910.1 323.9 L909.6 323.8 L909.2 324.4 L908.7 321.8 L908.2 321.0 L907.7 323.5 L907.2 325.1 L906.8 322.2 L906.3 325.2 L905.8 323.2 L905.3 325.8 L904.9 323.7 L904.4 325.4 L903.9 322.9 L903.4 325.5 L902.9 324.0 L902.5 323.0 L902.0 323.6 L901.5 324.2 L901.0 321.0 L900.5 322.6 L900.1 323.6 L899.6 322.1 L899.1 325.3 L898.6 322.6 L898.2 320.7 L897.7 323.6 L897.2 321.8 L896.7 323.8 L896.2 321.7 L895.8 324.0 L895.3 322.8 L894.8 322.5 L894.3 323.2 L893.8 319.9 L893.4 323.6 L892.9 324.6 L892.4 325.6 L891.9 324.6 L891.4 324.7 L891.0 325.2 L890.5 321.9 L890.0 324.4 L889.5 323.2 L889.1 325.8 L888.6 325.6 L888.1 322.9 L887.6 323.9 L887.1 323.1 L886.7 321.9 L886.2 321.0 L885.7 320.6 L885.2 322.3 L884.7 325.9 L884.3 326.6 L883.8 322.3 L883.3 323.0 L882.8 324.6 L882.4 320.0 L881.9 321.9 L881.4 324.0 L880.9 323.5 L880.4 321.4 L880.0 323.0 L879.5 321.3 L879.0 324.5 L878.5 323.0 L878.0 324.4 L877.6 322.3 L877.1 324.8 L876.6 322.9 L876.1 322.1 L875.7 323.5 L875.2 326.0 L874.7 322.3 L874.2 323.0 L873.7 321.9 L873.3 323.6 L872.8 323.6 L872.3 324.2 L871.8 321.5 L871.3 323.9 L870.9 323.7 L870.4 322.8 L869.9 322.5 L869.4 322.2 L869.0 324.9 L868.5 325.8 L868.0 322.0 L867.5 322.2 L867.0 324.8 L866.6 324.8 L866.1 324.1 L865.6 325.7 L865.1 325.4 L864.6 322.8 L864.2 323.1 L863.7 326.2 L863.2 323.9 L862.7 323.0 L862.3 320.7 L861.8 325.8 L861.3 324.6 L860.8 325.5 L860.3 324.9 L859.9 326.0 L859.4 320.6 L858.9 325.7 L858.4 323.1 L857.9 324.2 L857.5 323.5 L857.0 321.4 L856.5 326.1 L856.0 326.1 L855.6 322.5 L855.1 326.5 L854.6 324.3 L854.1 324.0 L853.6 325.1 L853.2 326.5 L852.7 322.9 L852.2 325.2 L851.7 325.0 L851.2 324.7 L850.8 322.4 L850.3 322.4 L849.8 326.3 L849.3 324.5 L848.9 324.3 L848.4 324.4 L847.9 324.0 L847.4 323.5 L846.9 326.1 L846.5 323.6 L846.0 321.5 L845.5 325.9 L845.0 324.7 L844.5 323.0 L844.1 326.1 L843.6 325.7 L843.1 324.4 L842.6 324.0 L842.2 320.7 L841.7 322.4 L841.2 324.4 L840.7 321.7 L840.2 324.9 L839.8 322.7 L839.3 325.9 L838.8 323.9 L838.3 321.5 L837.8 325.1 L837.4 324.9 L836.9 320.6 L836.4 325.2 L835.9 325.1 L835.5 323.2 L835.0 325.4 L834.5 323.4 L834.0 324.9 L833.5 326.5 L833.1 324.1 L832.6 324.1 L832.1 325.0 L831.6 323.7 L831.1 322.1 L830.7 322.2 L830.2 323.2 L829.7 323.4 L829.2 325.3 L828.8 324.9 L828.3 328.0 L827.8 325.0 L827.3 324.8 L826.8 324.5 L826.4 322.8 L825.9 326.0 L825.4 321.5 L824.9 323.2 L824.4 322.6 L824.0 327.0 L823.5 323.6 L823.0 327.5 L822.5 322.3 L822.1 322.7 L821.6 325.3 L821.1 324.2 L820.6 324.1 L820.1 324.8 L819.7 324.6 L819.2 325.0 L818.7 323.4 L818.2 325.5 L817.7 323.3 L817.3 323.0 L816.8 324.4 L816.3 323.6 L815.8 326.7 L815.3 327.1 L814.9 323.4 L814.4 326.5 L813.9 324.6 L813.4 324.9 L813.0 327.3 L812.5 324.1 L812.0 324.5 L811.5 323.5 L811.0 324.4 L810.6 325.2 L810.1 324.6 L809.6 326.7 L809.1 322.1 L808.6 322.5 L808.2 324.5 L807.7 326.5 L807.2 323.0 L806.7 322.1 L806.3 322.2 L805.8 322.5 L805.3 324.1 L804.8 322.6 L804.3 322.1 L803.9 322.1 L803.4 325.8 L802.9 321.9 L802.4 322.1 L801.9 321.9 L801.5 325.9 L801.0 324.3 L800.5 323.9 L800.0 322.5 L799.6 325.7 L799.1 323.4 L798.6 322.4 L798.1 323.7 L797.6 326.1 L797.2 325.0 L796.7 325.3 L796.2 323.4 L795.7 325.7 L795.2 323.5 L794.8 321.2 L794.3 324.1 L793.8 323.7 L793.3 325.1 L792.9 325.7 L792.4 321.0 L791.9 320.6 L791.4 322.1 L790.9 323.4 L790.5 321.0 L790.0 323.8 L789.5 322.2 L789.0 321.5 L788.5 326.3 L788.1 323.6 L787.6 323.9 L787.1 325.1 L786.6 323.5 L786.2 324.5 L785.7 324.3 L785.2 324.1 L784.7 326.5 L784.2 324.0 L783.8 324.0 L783.3 323.6 L782.8 324.6 L782.3 324.8 L781.8 323.4 L781.4 324.6 L780.9 323.2 L780.4 325.8 L779.9 323.6 L779.5 324.9 L779.0 325.8 L778.5 321.7 L778.0 323.7 L777.5 324.8 L777.1 321.3 L776.6 319.1 L776.1 325.1 L775.6 323.7 L775.1 322.6 L774.7 323.9 L774.2 325.2 L773.7 325.6 L773.2 325.5 L772.8 321.8 L772.3 326.9 L771.8 326.2 L771.3 324.9 L770.8 322.2 L770.4 324.2 L769.9 323.8 L769.4 325.6 L768.9 322.7 L768.4 325.0 L768.0 324.9 L767.5 326.0 L767.0 324.8 L766.5 325.3 L766.1 325.8 L765.6 323.3 L765.1 322.9 L764.6 324.7 L764.1 324.1 L763.7 326.8 L763.2 322.3 L762.7 325.8 L762.2 323.7 L761.7 324.5 L761.3 325.4 L760.8 324.2 L760.3 322.8 L759.8 323.3 L759.4 323.6 L758.9 323.4 L758.4 322.9 L757.9 326.7 L757.4 325.4 L757.0 324.3 L756.5 323.3 L756.0 325.2 L755.5 325.2 L755.0 326.3 L754.6 324.0 L754.1 323.3 L753.6 323.1 L753.1 324.9 L752.7 323.0 L752.2 324.6 L751.7 325.2 L751.2 323.3 L750.7 323.7 L750.3 323.1 L749.8 324.7 L749.3 325.8 L748.8 322.6 L748.3 322.0 L747.9 322.0 L747.4 327.0 L746.9 322.9 L746.4 323.3 L746.0 323.6 L745.5 322.7 L745.0 323.3 L744.5 324.7 L744.0 324.7 L743.6 323.3 L743.1 322.9 L742.6 323.2 L742.1 325.5 L741.6 323.9 L741.2 322.6 L740.7 326.1 L740.2 323.7 L739.7 323.0 L739.2 324.7 L738.8 322.0 L738.3 324.7 L737.8 324.2 L737.3 325.8 L736.9 325.2 L736.4 323.0 L735.9 322.3 L735.4 324.2 L734.9 322.3 L734.5 325.8 L734.0 322.6 L733.5 323.5 L733.0 325.5 L732.5 323.5 L732.1 321.6 L731.6 325.5 L731.1 322.9 L730.6 323.3 L730.2 324.2 L729.7 324.5 L729.2 323.7 L728.7 322.5 L728.2 324.6 L727.8 323.1 L727.3 325.0 L726.8 323.7 L726.3 321.1 L725.8 324.0 L725.4 323.6 L724.9 325.8 L724.4 324.1 L723.9 326.3 L723.5 324.2 L723.0 324.6 L722.5 320.0 L722.0 324.3 L721.5 326.1 L721.1 323.5 L720.6 326.8 L720.1 325.5 L719.6 324.6 L719.1 322.3 L718.7 324.4 L718.2 323.9 L717.7 321.0 L717.2 324.1 L716.8 322.6 L716.3 324.2 L715.8 323.0 L715.3 322.5 L714.8 319.9 L714.4 323.2 L713.9 324.8 L713.4 324.6 L712.9 323.4 L712.4 323.2 L712.0 325.9 L711.5 324.5 L711.0 322.3 L710.5 323.8 L710.1 324.6 L709.6 322.6 L709.1 323.7 L708.6 322.8 L708.1 324.4 L707.7 324.5 L707.2 325.6 L706.7 323.8 L706.2 324.3 L705.7 325.3 L705.3 326.4 L704.8 324.4 L704.3 325.4 L703.8 323.0 L703.4 323.9 L702.9 325.3 L702.4 324.0 L701.9 325.2 L701.4 324.9 L701.0 325.4 L700.5 323.3 L700.0 325.7 L699.5 324.2 L699.0 320.8 L698.6 321.0 L698.1 326.2 L697.6 323.3 L697.1 325.3 L696.7 322.7 L696.2 321.7 L695.7 322.6 L695.2 323.1 L694.7 323.7 L694.3 325.0 L693.8 324.0 L693.3 321.2 L692.8 322.4 L692.3 322.6 L691.9 323.5 L691.4 321.0 L690.9 323.4 L690.4 326.0 L690.0 326.6 L689.5 322.2 L689.0 323.2 L688.5 324.9 L688.0 320.8 L687.6 323.1 L687.1 325.0 L686.6 324.8 L686.1 322.5 L685.6 322.0 L685.2 323.0 L684.7 324.1 L684.2 324.8 L683.7 327.2 L683.3 324.0 L682.8 321.7 L682.3 324.2 L681.8 323.6 L681.3 323.3 L680.9 323.0 L680.4 324.8 L679.9 324.8 L679.4 323.5 L678.9 323.6 L678.5 322.0 L678.0 323.4 L677.5 326.7 L677.0 323.7 L676.6 325.4 L676.1 324.3 L675.6 324.4 L675.1 326.0 L674.6 323.8 L674.2 322.0 L673.7 322.2 L673.2 322.9 L672.7 317.5 L672.2 324.6 L671.8 323.5 L671.3 323.7 L670.8 324.8 L670.3 324.2 L669.9 324.5 L669.4 320.9 L668.9 321.0 L668.4 323.2 L667.9 320.8 L667.5 322.6 L667.0 320.3 L666.5 325.3 Z" fill="rgba(239,132,60,0.1)"/><path d="M666.5 338.5 L666.5 325.3 L667.0 320.3 L667.5 322.6 L667.9 320.8 L668.4 323.2 L668.9 321.0 L669.4 320.9 L669.9 324.5 L670.3 324.2 L670.8 324.8 L671.3 323.7 L671.8 323.5 L672.2 324.6 L672.7 317.5 L673.2 322.9 L673.7 322.2 L674.2 322.0 L674.6 323.8 L675.1 326.0 L675.6 324.4 L676.1 324.3 L676.6 325.4 L677.0 323.7 L677.5 326.7 L678.0 323.4 L678.5 322.0 L678.9 323.6 L679.4 323.5 L679.9 324.8 L680.4 324.8 L680.9 323.0 L681.3 323.3 L681.8 323.6 L682.3 324.2 L682.8 321.7 L683.3 324.0 L683.7 327.2 L684.2 324.8 L684.7 324.1 L685.2 323.0 L685.6 322.0 L686.1 322.5 L686.6 324.8 L687.1 325.0 L687.6 323.1 L688.0 320.8 L688.5 324.9 L689.0 323.2 L689.5 322.2 L690.0 326.6 L690.4 326.0 L690.9 323.4 L691.4 321.0 L691.9 323.5 L692.3 322.6 L692.8 322.4 L693.3 321.2 L693.8 324.0 L694.3 325.0 L694.7 323.7 L695.2 323.1 L695.7 322.6 L696.2 321.7 L696.7 322.7 L697.1 325.3 L697.6 323.3 L698.1 326.2 L698.6 321.0 L699.0 320.8 L699.5 324.2 L700.0 325.7 L700.5 323.3 L701.0 325.4 L701.4 324.9 L701.9 325.2 L702.4 324.0 L702.9 325.3 L703.4 323.9 L703.8 323.0 L704.3 325.4 L704.8 324.4 L705.3 326.4 L705.7 325.3 L706.2 324.3 L706.7 323.8 L707.2 325.6 L707.7 324.5 L708.1 324.4 L708.6 322.8 L709.1 323.7 L709.6 322.6 L710.1 324.6 L710.5 323.8 L711.0 322.3 L711.5 324.5 L712.0 325.9 L712.4 323.2 L712.9 323.4 L713.4 324.6 L713.9 324.8 L714.4 323.2 L714.8 319.9 L715.3 322.5 L715.8 323.0 L716.3 324.2 L716.8 322.6 L717.2 324.1 L717.7 321.0 L718.2 323.9 L718.7 324.4 L719.1 322.3 L719.6 324.6 L720.1 325.5 L720.6 326.8 L721.1 323.5 L721.5 326.1 L722.0 324.3 L722.5 320.0 L723.0 324.6 L723.5 324.2 L723.9 326.3 L724.4 324.1 L724.9 325.8 L725.4 323.6 L725.8 324.0 L726.3 321.1 L726.8 323.7 L727.3 325.0 L727.8 323.1 L728.2 324.6 L728.7 322.5 L729.2 323.7 L729.7 324.5 L730.2 324.2 L730.6 323.3 L731.1 322.9 L731.6 325.5 L732.1 321.6 L732.5 323.5 L733.0 325.5 L733.5 323.5 L734.0 322.6 L734.5 325.8 L734.9 322.3 L735.4 324.2 L735.9 322.3 L736.4 323.0 L736.9 325.2 L737.3 325.8 L737.8 324.2 L738.3 324.7 L738.8 322.0 L739.2 324.7 L739.7 323.0 L740.2 323.7 L740.7 326.1 L741.2 322.6 L741.6 323.9 L742.1 325.5 L742.6 323.2 L743.1 322.9 L743.6 323.3 L744.0 324.7 L744.5 324.7 L745.0 323.3 L745.5 322.7 L746.0 323.6 L746.4 323.3 L746.9 322.9 L747.4 327.0 L747.9 322.0 L748.3 322.0 L748.8 322.6 L749.3 325.8 L749.8 324.7 L750.3 323.1 L750.7 323.7 L751.2 323.3 L751.7 325.2 L752.2 324.6 L752.7 323.0 L753.1 324.9 L753.6 323.1 L754.1 323.3 L754.6 324.0 L755.0 326.3 L755.5 325.2 L756.0 325.2 L756.5 323.3 L757.0 324.3 L757.4 325.4 L757.9 326.7 L758.4 322.9 L758.9 323.4 L759.4 323.6 L759.8 323.3 L760.3 322.8 L760.8 324.2 L761.3 325.4 L761.7 324.5 L762.2 323.7 L762.7 325.8 L763.2 322.3 L763.7 326.8 L764.1 324.1 L764.6 324.7 L765.1 322.9 L765.6 323.3 L766.1 325.8 L766.5 325.3 L767.0 324.8 L767.5 326.0 L768.0 324.9 L768.4 325.0 L768.9 322.7 L769.4 325.6 L769.9 323.8 L770.4 324.2 L770.8 322.2 L771.3 324.9 L771.8 326.2 L772.3 326.9 L772.8 321.8 L773.2 325.5 L773.7 325.6 L774.2 325.2 L774.7 323.9 L775.1 322.6 L775.6 323.7 L776.1 325.1 L776.6 319.1 L777.1 321.3 L777.5 324.8 L778.0 323.7 L778.5 321.7 L779.0 325.8 L779.5 324.9 L779.9 323.6 L780.4 325.8 L780.9 323.2 L781.4 324.6 L781.8 323.4 L782.3 324.8 L782.8 324.6 L783.3 323.6 L783.8 324.0 L784.2 324.0 L784.7 326.5 L785.2 324.1 L785.7 324.3 L786.2 324.5 L786.6 323.5 L787.1 325.1 L787.6 323.9 L788.1 323.6 L788.5 326.3 L789.0 321.5 L789.5 322.2 L790.0 323.8 L790.5 321.0 L790.9 323.4 L791.4 322.1 L791.9 320.6 L792.4 321.0 L792.9 325.7 L793.3 325.1 L793.8 323.7 L794.3 324.1 L794.8 321.2 L795.2 323.5 L795.7 325.7 L796.2 323.4 L796.7 325.3 L797.2 325.0 L797.6 326.1 L798.1 323.7 L798.6 322.4 L799.1 323.4 L799.6 325.7 L800.0 322.5 L800.5 323.9 L801.0 324.3 L801.5 325.9 L801.9 321.9 L802.4 322.1 L802.9 321.9 L803.4 325.8 L803.9 322.1 L804.3 322.1 L804.8 322.6 L805.3 324.1 L805.8 322.5 L806.3 322.2 L806.7 322.1 L807.2 323.0 L807.7 326.5 L808.2 324.5 L808.6 322.5 L809.1 322.1 L809.6 326.7 L810.1 324.6 L810.6 325.2 L811.0 324.4 L811.5 323.5 L812.0 324.5 L812.5 324.1 L813.0 327.3 L813.4 324.9 L813.9 324.6 L814.4 326.5 L814.9 323.4 L815.3 327.1 L815.8 326.7 L816.3 323.6 L816.8 324.4 L817.3 323.0 L817.7 323.3 L818.2 325.5 L818.7 323.4 L819.2 325.0 L819.7 324.6 L820.1 324.8 L820.6 324.1 L821.1 324.2 L821.6 325.3 L822.1 322.7 L822.5 322.3 L823.0 327.5 L823.5 323.6 L824.0 327.0 L824.4 322.6 L824.9 323.2 L825.4 321.5 L825.9 326.0 L826.4 322.8 L826.8 324.5 L827.3 324.8 L827.8 325.0 L828.3 328.0 L828.8 324.9 L829.2 325.3 L829.7 323.4 L830.2 323.2 L830.7 322.2 L831.1 322.1 L831.6 323.7 L832.1 325.0 L832.6 324.1 L833.1 324.1 L833.5 326.5 L834.0 324.9 L834.5 323.4 L835.0 325.4 L835.5 323.2 L835.9 325.1 L836.4 325.2 L836.9 320.6 L837.4 324.9 L837.8 325.1 L838.3 321.5 L838.8 323.9 L839.3 325.9 L839.8 322.7 L840.2 324.9 L840.7 321.7 L841.2 324.4 L841.7 322.4 L842.2 320.7 L842.6 324.0 L843.1 324.4 L843.6 325.7 L844.1 326.1 L844.5 323.0 L845.0 324.7 L845.5 325.9 L846.0 321.5 L846.5 323.6 L846.9 326.1 L847.4 323.5 L847.9 324.0 L848.4 324.4 L848.9 324.3 L849.3 324.5 L849.8 326.3 L850.3 322.4 L850.8 322.4 L851.2 324.7 L851.7 325.0 L852.2 325.2 L852.7 322.9 L853.2 326.5 L853.6 325.1 L854.1 324.0 L854.6 324.3 L855.1 326.5 L855.6 322.5 L856.0 326.1 L856.5 326.1 L857.0 321.4 L857.5 323.5 L857.9 324.2 L858.4 323.1 L858.9 325.7 L859.4 320.6 L859.9 326.0 L860.3 324.9 L860.8 325.5 L861.3 324.6 L861.8 325.8 L862.3 320.7 L862.7 323.0 L863.2 323.9 L863.7 326.2 L864.2 323.1 L864.6 322.8 L865.1 325.4 L865.6 325.7 L866.1 324.1 L866.6 324.8 L867.0 324.8 L867.5 322.2 L868.0 322.0 L868.5 325.8 L869.0 324.9 L869.4 322.2 L869.9 322.5 L870.4 322.8 L870.9 323.7 L871.3 323.9 L871.8 321.5 L872.3 324.2 L872.8 323.6 L873.3 323.6 L873.7 321.9 L874.2 323.0 L874.7 322.3 L875.2 326.0 L875.7 323.5 L876.1 322.1 L876.6 322.9 L877.1 324.8 L877.6 322.3 L878.0 324.4 L878.5 323.0 L879.0 324.5 L879.5 321.3 L880.0 323.0 L880.4 321.4 L880.9 323.5 L881.4 324.0 L881.9 321.9 L882.4 320.0 L882.8 324.6 L883.3 323.0 L883.8 322.3 L884.3 326.6 L884.7 325.9 L885.2 322.3 L885.7 320.6 L886.2 321.0 L886.7 321.9 L887.1 323.1 L887.6 323.9 L888.1 322.9 L888.6 325.6 L889.1 325.8 L889.5 323.2 L890.0 324.4 L890.5 321.9 L891.0 325.2 L891.4 324.7 L891.9 324.6 L892.4 325.6 L892.9 324.6 L893.4 323.6 L893.8 319.9 L894.3 323.2 L894.8 322.5 L895.3 322.8 L895.8 324.0 L896.2 321.7 L896.7 323.8 L897.2 321.8 L897.7 323.6 L898.2 320.7 L898.6 322.6 L899.1 325.3 L899.6 322.1 L900.1 323.6 L900.5 322.6 L901.0 321.0 L901.5 324.2 L902.0 323.6 L902.5 323.0 L902.9 324.0 L903.4 325.5 L903.9 322.9 L904.4 325.4 L904.9 323.7 L905.3 325.8 L905.8 323.2 L906.3 325.2 L906.8 322.2 L907.2 325.1 L907.7 323.5 L908.2 321.0 L908.7 321.8 L909.2 324.4 L909.6 323.8 L910.1 323.9 L910.6 324.5 L911.1 324.0 L911.6 321.4 L912.0 323.9 L912.5 323.1 L913.0 322.2 L913.5 324.1 L913.9 322.5 L914.4 323.8 L914.9 325.0 L915.4 324.8 L915.9 323.1 L916.3 322.1 L916.8 324.7 L917.3 322.4 L917.8 325.1 L918.3 324.8 L918.7 323.4 L919.2 326.5 L919.7 324.0 L920.2 324.7 L920.6 324.7 L921.1 323.7 L921.6 324.8 L922.1 325.2 L922.6 325.0 L923.0 324.9 L923.5 326.6 L924.0 325.1 L924.5 325.0 L925.0 325.7 L925.4 324.9 L925.9 324.6 L926.4 324.3 L926.9 323.7 L927.3 325.9 L927.8 324.6 L928.3 324.1 L928.8 325.6 L929.3 324.3 L929.7 326.0 L930.2 325.2 L930.7 325.8 L931.2 321.8 L931.7 323.8 L932.1 325.8 L932.6 324.1 L933.1 324.9 L933.6 327.1 L934.0 324.1 L934.5 325.4 L935.0 323.9 L935.5 321.9 L936.0 326.0 L936.4 322.8 L936.9 324.3 L937.4 325.9 L937.9 327.5 L938.4 322.0 L938.8 325.9 L939.3 322.5 L939.8 323.9 L940.3 324.2 L940.7 325.7 L941.2 326.7 L941.7 322.6 L942.2 326.5 L942.7 325.0 L943.1 320.1 L943.6 324.8 L944.1 324.0 L944.6 324.1 L945.1 320.4 L945.5 324.5 L946.0 324.6 L946.5 323.5 L947.0 322.2 L947.4 322.3 L947.9 324.6 L948.4 324.8 L948.9 323.2 L949.4 324.9 L949.8 324.0 L950.3 324.2 L950.8 325.3 L951.3 324.1 L951.8 322.2 L952.2 322.6 L952.7 323.0 L953.2 324.3 L953.7 322.3 L954.1 325.8 L954.6 327.3 L955.1 325.5 L955.6 322.1 L956.1 322.1 L956.5 323.4 L957.0 324.8 L957.5 324.7 L958.0 326.5 L958.5 323.9 L958.9 321.7 L959.4 323.5 L959.9 324.3 L960.4 322.9 L960.8 324.6 L961.3 321.7 L961.8 323.8 L962.3 322.3 L962.8 324.1 L963.2 325.0 L963.7 327.4 L964.2 322.7 L964.7 324.9 L965.2 323.9 L965.6 323.3 L966.1 321.0 L966.6 322.5 L967.1 323.5 L967.6 322.6 L968.0 322.3 L968.5 321.6 L969.0 321.4 L969.5 324.1 L969.9 324.6 L970.4 326.9 L970.9 323.3 L971.4 323.8 L971.9 323.2 L972.3 322.4 L972.8 323.9 L973.3 325.7 L973.8 325.5 L974.3 324.1 L974.7 323.3 L975.2 325.8 L975.7 325.3 L976.2 323.3 L976.6 324.0 L977.1 323.0 L977.6 322.6 L978.1 323.6 L978.6 322.3 L979.0 324.1 L979.5 321.4 L980.0 325.7 L980.5 326.1 L981.0 326.8 L981.4 323.8 L981.9 322.9 L982.4 323.5 L982.9 324.2 L983.3 323.5 L983.8 325.1 L984.3 323.8 L984.8 324.0 L985.3 324.9 L985.7 324.5 L986.2 324.2 L986.7 321.9 L987.2 323.5 L987.7 323.6 L988.1 324.4 L988.6 323.7 L989.1 322.0 L989.6 323.6 L990.0 324.3 L990.5 324.8 L991.0 324.0 L991.5 321.7 L992.0 326.3 L992.4 323.0 L992.9 324.2 L993.4 324.0 L993.9 327.1 L994.4 323.6 L994.8 324.7 L995.3 322.6 L995.8 321.6 L996.3 325.1 L996.7 325.1 L997.2 322.0 L997.7 321.6 L998.2 322.6 L998.7 326.9 L999.1 325.8 L999.6 323.8 L1000.1 322.8 L1000.6 321.3 L1001.1 326.2 L1001.5 324.0 L1002.0 326.4 L1002.5 322.6 L1003.0 325.2 L1003.4 326.5 L1003.9 322.6 L1004.4 323.8 L1004.9 324.4 L1005.4 322.2 L1005.8 322.2 L1006.3 320.8 L1006.8 323.1 L1007.3 326.5 L1007.8 324.5 L1008.2 322.4 L1008.7 324.1 L1009.2 324.3 L1009.7 324.3 L1010.1 325.9 L1010.6 323.9 L1011.1 322.7 L1011.6 325.5 L1012.1 323.1 L1012.5 324.1 L1013.0 323.2 L1013.5 322.6 L1014.0 323.1 L1014.5 325.5 L1014.9 321.9 L1015.4 326.3 L1015.9 321.6 L1016.4 325.7 L1016.8 323.9 L1017.3 324.6 L1017.8 327.0 L1018.3 326.6 L1018.8 326.0 L1019.2 322.8 L1019.7 324.7 L1020.2 325.7 L1020.7 322.7 L1021.2 324.7 L1021.6 324.6 L1022.1 324.0 L1022.6 325.0 L1023.1 326.9 L1023.5 322.5 L1024.0 322.5 L1024.5 323.2 L1025.0 325.9 L1025.5 322.9 L1025.9 325.1 L1026.4 324.3 L1026.9 326.8 L1027.4 323.7 L1027.9 322.6 L1028.3 323.8 L1028.8 323.4 L1029.3 324.4 L1029.8 326.6 L1030.2 325.6 L1030.7 324.2 L1031.2 323.7 L1031.7 321.6 L1032.2 324.1 L1032.6 323.6 L1033.1 323.8 L1033.6 325.2 L1034.1 323.3 L1034.6 323.9 L1035.0 323.2 L1035.5 324.6 L1036.0 321.3 L1036.5 323.7 L1036.9 324.8 L1037.4 323.1 L1037.9 321.0 L1038.4 322.7 L1038.9 325.4 L1039.3 321.1 L1039.8 322.9 L1040.3 321.8 L1040.8 321.0 L1041.3 323.2 L1041.7 326.8 L1042.2 321.8 L1042.7 323.5 L1043.2 324.9 L1043.7 325.9 L1044.1 326.2 L1044.6 324.1 L1045.1 322.4 L1045.6 321.8 L1046.0 322.4 L1046.5 322.9 L1047.0 324.7 L1047.5 324.1 L1048.0 320.8 L1048.4 323.4 L1048.9 323.1 L1049.4 323.8 L1049.9 325.5 L1050.4 321.3 L1050.8 325.4 L1051.3 325.1 L1051.8 324.0 L1052.3 323.6 L1052.7 325.7 L1053.2 322.1 L1053.7 322.5 L1054.2 323.2 L1054.7 319.7 L1055.1 323.2 L1055.6 323.3 L1056.1 324.5 L1056.6 322.6 L1057.1 323.8 L1057.5 324.1 L1058.0 324.9 L1058.5 323.3 L1059.0 322.7 L1059.4 325.6 L1059.9 326.5 L1060.4 324.6 L1060.9 323.3 L1061.4 322.6 L1061.8 324.6 L1062.3 325.2 L1062.8 324.7 L1063.3 323.4 L1063.8 325.0 L1064.2 324.9 L1064.7 323.9 L1065.2 323.0 L1065.7 324.5 L1066.1 325.3 L1066.6 324.9 L1067.1 325.5 L1067.6 321.3 L1068.1 324.4 L1068.5 322.8 L1069.0 324.3 L1069.5 325.6 L1070.0 325.0 L1070.5 325.1 L1070.9 324.1 L1071.4 324.5 L1071.9 326.1 L1072.4 323.8 L1072.8 324.4 L1073.3 321.4 L1073.8 324.7 L1074.3 324.0 L1074.8 326.1 L1075.2 324.0 L1075.7 321.8 L1076.2 322.4 L1076.7 323.6 L1077.2 322.1 L1077.6 326.0 L1078.1 322.0 L1078.6 323.2 L1079.1 324.2 L1079.5 323.8 L1080.0 322.4 L1080.5 323.8 L1081.0 322.9 L1081.5 325.3 L1081.9 323.4 L1082.4 321.8 L1082.9 324.0 L1083.4 322.0 L1083.9 325.6 L1084.3 324.3 L1084.8 322.6 L1085.3 323.3 L1085.8 322.0 L1086.2 324.3 L1086.7 324.9 L1087.2 325.4 L1087.7 322.4 L1088.2 323.9 L1088.6 324.9 L1089.1 324.8 L1089.6 322.2 L1090.1 323.1 L1090.6 322.3 L1091.0 321.2 L1091.5 323.4 L1092.0 325.7 L1092.5 321.8 L1092.9 325.0 L1093.4 324.5 L1093.9 323.2 L1094.4 320.1 L1094.9 323.0 L1095.3 324.6 L1095.8 324.7 L1096.3 325.4 L1096.8 322.0 L1097.3 321.5 L1097.7 324.2 L1098.2 323.7 L1098.7 321.8 L1099.2 321.8 L1099.6 320.1 L1100.1 326.6 L1100.6 322.5 L1101.1 325.0 L1101.6 321.4 L1102.0 323.2 L1102.5 321.2 L1103.0 320.5 L1103.5 323.8 L1104.0 322.3 L1104.4 323.5 L1104.9 323.9 L1105.4 322.9 L1105.9 325.7 L1106.3 325.1 L1106.8 322.9 L1107.3 321.8 L1107.8 324.5 L1108.3 324.9 L1108.7 323.2 L1109.2 321.2 L1109.7 326.0 L1110.2 322.5 L1110.7 320.4 L1111.1 323.4 L1111.6 322.1 L1112.1 320.8 L1112.6 321.5 L1113.0 324.8 L1113.5 315.4 L1114.0 321.8 L1114.5 323.0 L1115.0 324.3 L1115.4 323.6 L1115.9 326.4 L1116.4 323.0 L1116.9 324.2 L1117.4 324.6 L1117.8 324.2 L1118.3 321.7 L1118.8 323.7 L1119.3 322.8 L1119.8 324.2 L1120.2 325.8 L1120.7 322.3 L1121.2 322.6 L1121.7 323.2 L1122.1 322.5 L1122.6 323.2 L1123.1 324.2 L1123.6 321.9 L1124.1 322.4 L1124.5 324.8 L1125.0 326.6 L1125.5 322.3 L1126.0 322.9 L1126.5 325.7 L1126.9 324.4 L1127.4 319.4 L1127.9 324.2 L1128.4 320.2 L1128.8 325.8 L1129.3 324.4 L1129.8 324.7 L1130.3 323.6 L1130.8 323.5 L1131.2 324.6 L1131.7 321.1 L1132.2 324.0 L1132.7 324.1 L1133.2 325.4 L1133.6 322.7 L1134.1 322.8 L1134.6 322.4 L1135.1 323.4 L1135.5 324.7 L1136.0 325.9 L1136.5 326.5 L1137.0 324.1 L1137.5 322.4 L1137.9 322.1 L1138.4 319.2 L1138.9 321.7 L1139.4 324.7 L1139.9 322.5 L1140.3 323.4 L1140.8 322.7 L1141.3 324.4 L1141.8 323.7 L1142.2 325.1 L1142.7 322.2 L1143.2 322.5 L1143.7 323.6 L1144.2 323.3 L1144.6 325.1 L1145.1 323.8 L1145.6 326.2 L1146.1 320.6 L1146.6 324.9 L1147.0 322.6 L1147.5 324.6 L1148.0 324.7 L1148.5 324.5 L1148.9 323.5 L1149.4 325.1 L1149.9 321.5 L1150.4 324.1 L1150.9 321.8 L1151.3 325.5 L1151.8 323.6 L1152.3 325.1 L1152.8 322.0 L1153.3 323.6 L1153.7 320.6 L1154.2 322.1 L1154.7 324.6 L1155.2 323.8 L1155.6 324.2 L1156.1 324.3 L1156.6 326.2 L1157.1 322.6 L1157.6 324.3 L1158.0 323.1 L1158.5 326.7 L1159.0 323.4 L1159.5 324.2 L1160.0 323.6 L1160.4 325.7 L1160.9 323.7 L1161.4 326.5 L1161.9 323.4 L1162.3 323.5 L1162.8 324.3 L1163.3 325.3 L1163.8 323.4 L1164.3 320.9 L1164.7 324.6 L1165.2 324.5 L1165.7 325.1 L1166.2 324.0 L1166.7 322.9 L1167.1 322.8 L1167.6 324.5 L1168.1 323.1 L1168.6 325.3 L1169.0 323.3 L1169.5 323.9 L1170.0 325.1 L1170.5 320.4 L1171.0 324.7 L1171.4 325.1 L1171.9 323.2 L1172.4 324.9 L1172.9 325.4 L1173.4 322.8 L1173.8 323.4 L1174.3 322.7 L1174.8 321.5 L1175.3 323.0 L1175.7 323.3 L1176.2 323.8 L1176.7 320.7 L1177.2 325.0 L1177.7 322.8 L1178.1 325.0 L1178.6 325.7 L1179.1 324.7 L1179.6 322.4 L1180.1 323.2 L1180.5 324.6 L1181.0 323.5 L1181.5 320.8 L1182.0 323.5 L1182.4 323.1 L1182.9 323.2 L1183.4 324.0 L1183.9 323.0 L1184.4 318.9 L1184.8 324.0 L1185.3 323.2 L1185.8 321.4 L1186.3 320.8 L1186.8 319.9 L1187.2 324.1 L1187.7 323.7 L1188.2 323.6 L1188.7 324.2 L1189.1 324.7 L1189.6 322.3 L1190.1 321.3 L1190.6 324.1 L1191.1 325.5 L1191.5 324.1 L1192.0 324.7 L1192.5 323.7 L1192.5 338.5 Z" fill="rgba(126,178,109,0.07)"/><g stroke="rgba(204,204,214,0.22)" stroke-width="1"><line x1="666.5" y1="158.50" x2="1192.5" y2="158.50"/><line x1="666.5" y1="203.50" x2="1192.5" y2="203.50"/><line x1="666.5" y1="248.50" x2="1192.5" y2="248.50"/><line x1="666.5" y1="293.50" x2="1192.5" y2="293.50"/><line x1="666.5" y1="338.50" x2="1192.5" y2="338.50"/><line x1="733.00" y1="158.5" x2="733.00" y2="338.5"/><line x1="816.50" y1="158.5" x2="816.50" y2="338.5"/><line x1="899.50" y1="158.5" x2="899.50" y2="338.5"/><line x1="982.50" y1="158.5" x2="982.50" y2="338.5"/><line x1="1066.00" y1="158.5" x2="1066.00" y2="338.5"/><line x1="1149.50" y1="158.5" x2="1149.50" y2="338.5"/></g><path d="M666.5 328.3 L667.0 325.1 L667.5 326.9 L667.9 326.8 L668.4 328.2 L668.9 327.4 L669.4 326.3 L669.9 328.6 L670.3 328.2 L670.8 328.4 L671.3 328.9 L671.8 326.7 L672.2 328.4 L672.7 325.4 L673.2 328.8 L673.7 327.7 L674.2 327.3 L674.6 328.5 L675.1 329.9 L675.6 328.4 L676.1 327.5 L676.6 328.8 L677.0 327.5 L677.5 329.9 L678.0 327.5 L678.5 325.5 L678.9 326.9 L679.4 326.8 L679.9 328.4 L680.4 328.5 L680.9 326.8 L681.3 328.4 L681.8 327.3 L682.3 329.2 L682.8 327.4 L683.3 327.6 L683.7 330.6 L684.2 328.1 L684.7 327.2 L685.2 327.2 L685.6 327.4 L686.1 326.3 L686.6 327.9 L687.1 328.9 L687.6 326.9 L688.0 325.5 L688.5 328.3 L689.0 326.1 L689.5 328.0 L690.0 329.5 L690.4 328.8 L690.9 328.7 L691.4 326.4 L691.9 327.7 L692.3 328.5 L692.8 327.6 L693.3 326.0 L693.8 327.9 L694.3 328.7 L694.7 327.4 L695.2 328.7 L695.7 327.2 L696.2 326.6 L696.7 327.6 L697.1 328.4 L697.6 327.7 L698.1 329.3 L698.6 326.0 L699.0 325.1 L699.5 327.9 L700.0 330.4 L700.5 328.7 L701.0 329.7 L701.4 330.2 L701.9 328.4 L702.4 328.4 L702.9 329.0 L703.4 326.9 L703.8 328.1 L704.3 329.2 L704.8 327.9 L705.3 329.9 L705.7 328.9 L706.2 329.4 L706.7 328.1 L707.2 328.7 L707.7 329.0 L708.1 328.0 L708.6 327.7 L709.1 328.0 L709.6 327.0 L710.1 329.6 L710.5 328.0 L711.0 326.4 L711.5 328.4 L712.0 331.1 L712.4 327.2 L712.9 328.4 L713.4 327.5 L713.9 328.0 L714.4 327.6 L714.8 326.8 L715.3 328.0 L715.8 327.1 L716.3 329.5 L716.8 328.9 L717.2 328.0 L717.7 326.1 L718.2 329.1 L718.7 328.5 L719.1 327.0 L719.6 328.4 L720.1 329.2 L720.6 330.1 L721.1 326.8 L721.5 329.0 L722.0 327.3 L722.5 327.0 L723.0 328.8 L723.5 327.2 L723.9 330.2 L724.4 327.9 L724.9 328.8 L725.4 327.3 L725.8 327.2 L726.3 327.3 L726.8 326.8 L727.3 328.4 L727.8 329.3 L728.2 329.0 L728.7 326.2 L729.2 328.7 L729.7 327.8 L730.2 327.0 L730.6 327.4 L731.1 328.3 L731.6 329.6 L732.1 326.0 L732.5 327.6 L733.0 329.0 L733.5 327.9 L734.0 327.2 L734.5 329.6 L734.9 327.1 L735.4 327.4 L735.9 327.0 L736.4 327.5 L736.9 328.7 L737.3 329.4 L737.8 327.6 L738.3 328.0 L738.8 325.5 L739.2 327.7 L739.7 326.9 L740.2 327.3 L740.7 329.3 L741.2 326.4 L741.6 327.9 L742.1 329.0 L742.6 326.8 L743.1 326.0 L743.6 327.8 L744.0 328.0 L744.5 328.4 L745.0 328.3 L745.5 326.6 L746.0 327.9 L746.4 327.6 L746.9 327.5 L747.4 331.7 L747.9 328.0 L748.3 327.4 L748.8 327.7 L749.3 329.8 L749.8 329.0 L750.3 327.3 L750.7 327.6 L751.2 327.5 L751.7 329.4 L752.2 327.9 L752.7 326.6 L753.1 328.4 L753.6 326.9 L754.1 327.6 L754.6 327.8 L755.0 329.5 L755.5 329.5 L756.0 329.5 L756.5 327.4 L757.0 327.3 L757.4 330.0 L757.9 330.0 L758.4 328.3 L758.9 327.2 L759.4 328.3 L759.8 328.0 L760.3 328.0 L760.8 327.7 L761.3 328.6 L761.7 327.6 L762.2 327.6 L762.7 328.6 L763.2 326.6 L763.7 329.8 L764.1 328.8 L764.6 329.3 L765.1 327.3 L765.6 327.4 L766.1 329.5 L766.5 328.5 L767.0 329.2 L767.5 330.1 L768.0 329.6 L768.4 328.0 L768.9 327.7 L769.4 329.2 L769.9 328.5 L770.4 327.5 L770.8 327.0 L771.3 328.1 L771.8 329.5 L772.3 330.4 L772.8 328.5 L773.2 328.7 L773.7 329.0 L774.2 329.0 L774.7 328.9 L775.1 328.1 L775.6 327.6 L776.1 329.3 L776.6 326.1 L777.1 326.5 L777.5 328.4 L778.0 327.7 L778.5 326.4 L779.0 329.2 L779.5 328.9 L779.9 328.9 L780.4 329.4 L780.9 327.4 L781.4 328.5 L781.8 328.1 L782.3 327.9 L782.8 328.4 L783.3 326.4 L783.8 328.3 L784.2 329.0 L784.7 329.6 L785.2 328.6 L785.7 327.6 L786.2 327.5 L786.6 327.5 L787.1 328.3 L787.6 327.4 L788.1 327.5 L788.5 329.4 L789.0 327.6 L789.5 327.6 L790.0 328.3 L790.5 326.9 L790.9 328.1 L791.4 328.9 L791.9 327.1 L792.4 326.2 L792.9 329.6 L793.3 328.3 L793.8 327.3 L794.3 327.4 L794.8 326.9 L795.2 326.6 L795.7 330.1 L796.2 327.4 L796.7 330.2 L797.2 329.3 L797.6 329.4 L798.1 327.5 L798.6 330.0 L799.1 327.9 L799.6 329.8 L800.0 325.7 L800.5 328.8 L801.0 328.1 L801.5 329.5 L801.9 328.8 L802.4 326.6 L802.9 327.8 L803.4 329.5 L803.9 328.8 L804.3 328.3 L804.8 326.0 L805.3 328.2 L805.8 327.5 L806.3 326.8 L806.7 325.2 L807.2 327.4 L807.7 329.5 L808.2 329.2 L808.6 326.2 L809.1 327.8 L809.6 330.4 L810.1 328.8 L810.6 328.8 L811.0 328.7 L811.5 327.5 L812.0 327.7 L812.5 327.0 L813.0 330.8 L813.4 328.4 L813.9 329.1 L814.4 330.2 L814.9 328.0 L815.3 330.6 L815.8 330.7 L816.3 327.1 L816.8 328.5 L817.3 328.1 L817.7 327.5 L818.2 330.4 L818.7 327.4 L819.2 328.8 L819.7 328.4 L820.1 328.1 L820.6 328.3 L821.1 329.4 L821.6 328.9 L822.1 328.6 L822.5 327.6 L823.0 331.5 L823.5 327.2 L824.0 329.9 L824.4 326.2 L824.9 328.1 L825.4 326.6 L825.9 328.9 L826.4 326.7 L826.8 328.2 L827.3 328.2 L827.8 328.0 L828.3 331.4 L828.8 330.1 L829.2 330.1 L829.7 328.1 L830.2 328.4 L830.7 327.0 L831.1 327.7 L831.6 326.7 L832.1 329.0 L832.6 327.7 L833.1 328.6 L833.5 329.6 L834.0 330.2 L834.5 328.3 L835.0 329.2 L835.5 328.8 L835.9 329.1 L836.4 329.2 L836.9 324.7 L837.4 327.8 L837.8 329.2 L838.3 328.0 L838.8 327.7 L839.3 329.5 L839.8 326.6 L840.2 329.0 L840.7 327.2 L841.2 328.3 L841.7 328.7 L842.2 324.1 L842.6 328.7 L843.1 329.9 L843.6 328.8 L844.1 329.5 L844.5 327.0 L845.0 328.0 L845.5 329.8 L846.0 326.3 L846.5 328.6 L846.9 329.9 L847.4 327.3 L847.9 327.8 L848.4 329.8 L848.9 329.9 L849.3 328.7 L849.8 329.3 L850.3 328.1 L850.8 328.4 L851.2 330.1 L851.7 329.9 L852.2 329.1 L852.7 327.3 L853.2 329.7 L853.6 328.2 L854.1 329.7 L854.6 328.4 L855.1 329.6 L855.6 328.3 L856.0 329.9 L856.5 329.7 L857.0 326.5 L857.5 327.8 L857.9 330.3 L858.4 327.3 L858.9 329.0 L859.4 327.0 L859.9 330.2 L860.3 328.7 L860.8 329.0 L861.3 329.4 L861.8 329.8 L862.3 326.0 L862.7 328.3 L863.2 328.7 L863.7 330.3 L864.2 327.0 L864.6 326.8 L865.1 328.4 L865.6 330.0 L866.1 327.7 L866.6 328.3 L867.0 329.9 L867.5 325.6 L868.0 327.2 L868.5 329.0 L869.0 328.9 L869.4 327.0 L869.9 326.6 L870.4 327.2 L870.9 327.3 L871.3 328.2 L871.8 325.3 L872.3 328.0 L872.8 327.2 L873.3 327.1 L873.7 328.0 L874.2 326.8 L874.7 325.9 L875.2 330.4 L875.7 328.0 L876.1 326.2 L876.6 326.2 L877.1 328.4 L877.6 326.9 L878.0 327.4 L878.5 327.6 L879.0 328.6 L879.5 326.6 L880.0 326.2 L880.4 325.7 L880.9 327.5 L881.4 327.6 L881.9 326.5 L882.4 323.9 L882.8 328.2 L883.3 328.0 L883.8 325.9 L884.3 329.4 L884.7 331.1 L885.2 326.9 L885.7 326.3 L886.2 326.3 L886.7 326.7 L887.1 326.7 L887.6 328.6 L888.1 326.4 L888.6 328.8 L889.1 329.5 L889.5 328.0 L890.0 329.1 L890.5 329.0 L891.0 328.4 L891.4 328.1 L891.9 327.7 L892.4 329.1 L892.9 328.4 L893.4 327.9 L893.8 327.3 L894.3 327.2 L894.8 326.8 L895.3 327.3 L895.8 327.1 L896.2 326.7 L896.7 327.5 L897.2 327.3 L897.7 328.7 L898.2 327.4 L898.6 326.3 L899.1 328.3 L899.6 326.0 L900.1 328.3 L900.5 326.4 L901.0 325.7 L901.5 327.4 L902.0 328.2 L902.5 327.3 L902.9 328.5 L903.4 329.2 L903.9 326.9 L904.4 330.4 L904.9 326.9 L905.3 328.9 L905.8 326.8 L906.3 328.4 L906.8 325.6 L907.2 328.4 L907.7 330.5 L908.2 324.5 L908.7 327.6 L909.2 327.7 L909.6 327.6 L910.1 328.0 L910.6 327.4 L911.1 328.7 L911.6 325.1 L912.0 328.3 L912.5 326.7 L913.0 326.0 L913.5 327.8 L913.9 326.6 L914.4 328.2 L914.9 328.9 L915.4 328.6 L915.9 326.4 L916.3 326.6 L916.8 328.9 L917.3 326.6 L917.8 328.8 L918.3 327.6 L918.7 327.2 L919.2 330.7 L919.7 327.5 L920.2 328.8 L920.6 330.4 L921.1 327.9 L921.6 328.4 L922.1 328.2 L922.6 328.9 L923.0 329.7 L923.5 330.4 L924.0 329.1 L924.5 330.2 L925.0 329.4 L925.4 328.3 L925.9 328.0 L926.4 328.6 L926.9 328.8 L927.3 329.3 L927.8 327.9 L928.3 327.5 L928.8 329.6 L929.3 329.5 L929.7 330.2 L930.2 329.3 L930.7 329.5 L931.2 326.6 L931.7 327.2 L932.1 330.4 L932.6 327.9 L933.1 329.0 L933.6 330.6 L934.0 328.3 L934.5 329.3 L935.0 328.0 L935.5 327.6 L936.0 329.1 L936.4 326.5 L936.9 328.3 L937.4 329.3 L937.9 330.5 L938.4 325.9 L938.8 329.4 L939.3 328.2 L939.8 327.9 L940.3 327.1 L940.7 329.7 L941.2 330.9 L941.7 327.9 L942.2 329.8 L942.7 328.3 L943.1 325.6 L943.6 328.7 L944.1 327.2 L944.6 329.4 L945.1 324.3 L945.5 328.2 L946.0 327.4 L946.5 328.2 L947.0 328.7 L947.4 326.7 L947.9 328.4 L948.4 329.2 L948.9 328.7 L949.4 328.4 L949.8 327.9 L950.3 327.7 L950.8 329.1 L951.3 328.7 L951.8 325.5 L952.2 328.3 L952.7 326.5 L953.2 328.7 L953.7 327.9 L954.1 329.1 L954.6 330.7 L955.1 328.9 L955.6 327.3 L956.1 326.9 L956.5 327.1 L957.0 329.0 L957.5 328.7 L958.0 329.5 L958.5 327.8 L958.9 327.0 L959.4 327.8 L959.9 328.9 L960.4 327.5 L960.8 327.6 L961.3 327.3 L961.8 328.1 L962.3 327.6 L962.8 328.7 L963.2 328.8 L963.7 330.9 L964.2 327.8 L964.7 328.0 L965.2 329.2 L965.6 326.3 L966.1 326.8 L966.6 326.0 L967.1 328.2 L967.6 328.5 L968.0 327.7 L968.5 327.1 L969.0 326.4 L969.5 329.5 L969.9 328.5 L970.4 330.6 L970.9 328.6 L971.4 327.3 L971.9 327.6 L972.3 325.7 L972.8 327.7 L973.3 329.2 L973.8 329.7 L974.3 328.5 L974.7 326.9 L975.2 330.4 L975.7 329.7 L976.2 328.4 L976.6 328.7 L977.1 327.1 L977.6 328.7 L978.1 328.0 L978.6 327.9 L979.0 327.5 L979.5 326.1 L980.0 329.1 L980.5 329.7 L981.0 329.6 L981.4 328.1 L981.9 327.4 L982.4 326.9 L982.9 327.3 L983.3 327.5 L983.8 329.7 L984.3 328.3 L984.8 326.9 L985.3 328.9 L985.7 327.9 L986.2 327.9 L986.7 326.8 L987.2 328.2 L987.7 329.2 L988.1 327.6 L988.6 327.4 L989.1 326.1 L989.6 327.9 L990.0 327.6 L990.5 328.1 L991.0 328.3 L991.5 325.2 L992.0 330.8 L992.4 327.1 L992.9 328.8 L993.4 327.8 L993.9 330.0 L994.4 327.9 L994.8 329.1 L995.3 327.3 L995.8 326.3 L996.3 329.6 L996.7 329.9 L997.2 326.5 L997.7 325.4 L998.2 327.8 L998.7 330.3 L999.1 329.9 L999.6 327.0 L1000.1 326.2 L1000.6 328.4 L1001.1 330.0 L1001.5 327.1 L1002.0 330.1 L1002.5 329.3 L1003.0 329.3 L1003.4 329.3 L1003.9 327.9 L1004.4 329.6 L1004.9 328.2 L1005.4 326.8 L1005.8 327.0 L1006.3 326.6 L1006.8 328.7 L1007.3 330.3 L1007.8 328.0 L1008.2 327.9 L1008.7 328.0 L1009.2 328.8 L1009.7 328.0 L1010.1 329.7 L1010.6 327.5 L1011.1 326.3 L1011.6 328.4 L1012.1 328.4 L1012.5 327.6 L1013.0 327.7 L1013.5 327.5 L1014.0 327.8 L1014.5 328.4 L1014.9 326.3 L1015.4 329.6 L1015.9 326.8 L1016.4 329.1 L1016.8 327.6 L1017.3 329.5 L1017.8 330.2 L1018.3 329.6 L1018.8 329.7 L1019.2 327.0 L1019.7 329.4 L1020.2 329.4 L1020.7 329.8 L1021.2 328.6 L1021.6 328.6 L1022.1 327.9 L1022.6 329.3 L1023.1 329.8 L1023.5 328.3 L1024.0 327.2 L1024.5 327.4 L1025.0 329.5 L1025.5 329.0 L1025.9 328.0 L1026.4 329.1 L1026.9 330.0 L1027.4 328.2 L1027.9 329.0 L1028.3 328.2 L1028.8 327.4 L1029.3 328.8 L1029.8 329.6 L1030.2 329.2 L1030.7 327.4 L1031.2 328.1 L1031.7 327.1 L1032.2 328.3 L1032.6 326.9 L1033.1 328.3 L1033.6 328.5 L1034.1 327.7 L1034.6 327.9 L1035.0 328.0 L1035.5 327.7 L1036.0 326.6 L1036.5 328.6 L1036.9 329.9 L1037.4 327.4 L1037.9 325.6 L1038.4 326.5 L1038.9 329.2 L1039.3 327.3 L1039.8 326.5 L1040.3 326.7 L1040.8 325.6 L1041.3 326.8 L1041.7 331.1 L1042.2 326.9 L1042.7 328.7 L1043.2 328.9 L1043.7 329.6 L1044.1 329.0 L1044.6 328.0 L1045.1 326.2 L1045.6 326.3 L1046.0 326.7 L1046.5 326.1 L1047.0 328.2 L1047.5 328.7 L1048.0 325.6 L1048.4 327.3 L1048.9 328.3 L1049.4 327.0 L1049.9 328.8 L1050.4 325.9 L1050.8 329.3 L1051.3 328.4 L1051.8 327.8 L1052.3 327.8 L1052.7 329.1 L1053.2 326.6 L1053.7 326.7 L1054.2 327.4 L1054.7 326.8 L1055.1 328.0 L1055.6 326.5 L1056.1 328.5 L1056.6 329.2 L1057.1 328.2 L1057.5 328.3 L1058.0 327.8 L1058.5 327.5 L1059.0 326.3 L1059.4 330.0 L1059.9 330.2 L1060.4 328.2 L1060.9 326.9 L1061.4 327.1 L1061.8 328.4 L1062.3 328.5 L1062.8 328.7 L1063.3 326.2 L1063.8 328.5 L1064.2 327.8 L1064.7 329.9 L1065.2 327.3 L1065.7 328.6 L1066.1 329.0 L1066.6 329.1 L1067.1 328.9 L1067.6 325.5 L1068.1 328.1 L1068.5 328.0 L1069.0 329.7 L1069.5 330.5 L1070.0 331.2 L1070.5 329.3 L1070.9 328.3 L1071.4 328.0 L1071.9 330.0 L1072.4 327.5 L1072.8 328.9 L1073.3 326.8 L1073.8 328.5 L1074.3 328.3 L1074.8 329.1 L1075.2 329.2 L1075.7 328.3 L1076.2 327.5 L1076.7 327.3 L1077.2 328.8 L1077.6 329.6 L1078.1 327.7 L1078.6 326.8 L1079.1 328.7 L1079.5 328.6 L1080.0 328.6 L1080.5 327.6 L1081.0 327.0 L1081.5 329.2 L1081.9 327.5 L1082.4 326.3 L1082.9 327.3 L1083.4 328.9 L1083.9 329.8 L1084.3 328.1 L1084.8 326.3 L1085.3 326.9 L1085.8 326.3 L1086.2 328.3 L1086.7 327.9 L1087.2 328.9 L1087.7 327.6 L1088.2 328.4 L1088.6 329.1 L1089.1 328.5 L1089.6 327.3 L1090.1 327.0 L1090.6 327.2 L1091.0 325.5 L1091.5 327.4 L1092.0 329.3 L1092.5 326.9 L1092.9 329.0 L1093.4 329.3 L1093.9 327.1 L1094.4 328.7 L1094.9 328.0 L1095.3 328.6 L1095.8 328.3 L1096.3 330.1 L1096.8 327.0 L1097.3 326.6 L1097.7 328.2 L1098.2 326.5 L1098.7 327.0 L1099.2 326.8 L1099.6 326.5 L1100.1 329.5 L1100.6 327.1 L1101.1 328.1 L1101.6 327.0 L1102.0 327.8 L1102.5 325.1 L1103.0 325.3 L1103.5 327.4 L1104.0 326.9 L1104.4 327.2 L1104.9 327.1 L1105.4 326.2 L1105.9 328.5 L1106.3 329.0 L1106.8 326.1 L1107.3 326.9 L1107.8 327.8 L1108.3 328.1 L1108.7 329.1 L1109.2 327.5 L1109.7 329.0 L1110.2 326.8 L1110.7 326.7 L1111.1 328.1 L1111.6 326.1 L1112.1 326.4 L1112.6 326.9 L1113.0 328.1 L1113.5 328.0 L1114.0 328.4 L1114.5 329.7 L1115.0 327.5 L1115.4 326.8 L1115.9 329.5 L1116.4 327.4 L1116.9 328.0 L1117.4 327.8 L1117.8 327.0 L1118.3 326.6 L1118.8 328.5 L1119.3 326.9 L1119.8 328.4 L1120.2 330.8 L1120.7 325.3 L1121.2 327.7 L1121.7 328.3 L1122.1 326.3 L1122.6 327.4 L1123.1 328.6 L1123.6 327.8 L1124.1 327.7 L1124.5 328.3 L1125.0 330.9 L1125.5 327.8 L1126.0 329.1 L1126.5 329.4 L1126.9 328.2 L1127.4 325.6 L1127.9 329.5 L1128.4 327.6 L1128.8 329.7 L1129.3 329.8 L1129.8 328.3 L1130.3 326.8 L1130.8 327.5 L1131.2 327.6 L1131.7 326.4 L1132.2 327.2 L1132.7 328.6 L1133.2 329.1 L1133.6 328.3 L1134.1 327.4 L1134.6 328.2 L1135.1 328.2 L1135.5 328.6 L1136.0 329.0 L1136.5 329.5 L1137.0 328.8 L1137.5 325.9 L1137.9 326.7 L1138.4 326.4 L1138.9 327.8 L1139.4 328.1 L1139.9 327.0 L1140.3 328.3 L1140.8 326.4 L1141.3 327.4 L1141.8 326.7 L1142.2 328.5 L1142.7 325.5 L1143.2 327.4 L1143.7 327.0 L1144.2 328.7 L1144.6 328.7 L1145.1 327.2 L1145.6 329.9 L1146.1 326.4 L1146.6 328.7 L1147.0 326.9 L1147.5 328.8 L1148.0 328.1 L1148.5 327.9 L1148.9 326.9 L1149.4 329.0 L1149.9 327.1 L1150.4 327.3 L1150.9 326.8 L1151.3 328.8 L1151.8 327.7 L1152.3 328.5 L1152.8 328.2 L1153.3 326.5 L1153.7 326.6 L1154.2 329.1 L1154.7 328.2 L1155.2 328.3 L1155.6 329.4 L1156.1 328.7 L1156.6 329.6 L1157.1 327.7 L1157.6 329.5 L1158.0 326.4 L1158.5 330.5 L1159.0 327.5 L1159.5 327.3 L1160.0 328.8 L1160.4 330.2 L1160.9 328.1 L1161.4 329.8 L1161.9 327.0 L1162.3 328.0 L1162.8 328.2 L1163.3 328.1 L1163.8 327.3 L1164.3 328.3 L1164.7 327.7 L1165.2 327.8 L1165.7 329.0 L1166.2 327.1 L1166.7 326.5 L1167.1 326.9 L1167.6 328.0 L1168.1 327.1 L1168.6 329.0 L1169.0 328.7 L1169.5 328.7 L1170.0 328.2 L1170.5 326.6 L1171.0 328.5 L1171.4 328.2 L1171.9 329.2 L1172.4 328.3 L1172.9 329.3 L1173.4 326.3 L1173.8 327.6 L1174.3 326.4 L1174.8 325.7 L1175.3 326.7 L1175.7 326.7 L1176.2 327.0 L1176.7 327.7 L1177.2 329.7 L1177.7 327.0 L1178.1 328.2 L1178.6 328.6 L1179.1 328.1 L1179.6 327.5 L1180.1 326.5 L1180.5 328.4 L1181.0 328.7 L1181.5 326.1 L1182.0 326.8 L1182.4 326.5 L1182.9 327.9 L1183.4 329.4 L1183.9 326.3 L1184.4 326.4 L1184.8 328.4 L1185.3 327.3 L1185.8 326.5 L1186.3 324.9 L1186.8 326.4 L1187.2 327.2 L1187.7 328.1 L1188.2 328.4 L1188.7 327.9 L1189.1 328.6 L1189.6 327.1 L1190.1 327.7 L1190.6 328.2 L1191.1 329.2 L1191.5 327.9 L1192.0 328.4 L1192.5 327.5" stroke="#7eb26d" stroke-width="1.5" fill="none"/><path d="M666.5 326.2 L667.0 323.3 L667.5 325.3 L667.9 324.8 L668.4 325.9 L668.9 324.6 L669.4 324.4 L669.9 327.0 L670.3 325.3 L670.8 325.9 L671.3 327.3 L671.8 324.8 L672.2 326.3 L672.7 322.8 L673.2 326.8 L673.7 325.0 L674.2 325.1 L674.6 326.8 L675.1 327.8 L675.6 327.2 L676.1 325.7 L676.6 326.5 L677.0 325.9 L677.5 328.1 L678.0 326.0 L678.5 323.5 L678.9 325.7 L679.4 324.9 L679.9 326.1 L680.4 326.7 L680.9 324.3 L681.3 326.2 L681.8 325.0 L682.3 327.6 L682.8 325.4 L683.3 326.1 L683.7 328.9 L684.2 326.3 L684.7 325.0 L685.2 324.5 L685.6 326.0 L686.1 323.6 L686.6 327.0 L687.1 327.8 L687.6 324.1 L688.0 323.0 L688.5 326.2 L689.0 324.0 L689.5 326.0 L690.0 328.4 L690.4 326.5 L690.9 326.9 L691.4 325.4 L691.9 325.5 L692.3 326.1 L692.8 325.0 L693.3 323.5 L693.8 326.0 L694.3 326.4 L694.7 325.4 L695.2 326.7 L695.7 324.3 L696.2 324.7 L696.7 326.7 L697.1 326.6 L697.6 326.4 L698.1 327.8 L698.6 323.3 L699.0 322.9 L699.5 326.2 L700.0 328.4 L700.5 326.3 L701.0 327.6 L701.4 327.4 L701.9 326.8 L702.4 326.3 L702.9 327.0 L703.4 325.2 L703.8 325.9 L704.3 326.9 L704.8 325.4 L705.3 328.8 L705.7 326.8 L706.2 327.1 L706.7 325.5 L707.2 326.6 L707.7 327.0 L708.1 326.3 L708.6 325.0 L709.1 326.0 L709.6 324.3 L710.1 327.5 L710.5 325.8 L711.0 324.7 L711.5 327.0 L712.0 328.9 L712.4 325.3 L712.9 325.8 L713.4 326.1 L713.9 326.5 L714.4 325.1 L714.8 325.2 L715.3 326.5 L715.8 326.1 L716.3 327.9 L716.8 326.7 L717.2 325.6 L717.7 325.0 L718.2 326.9 L718.7 326.9 L719.1 325.4 L719.6 326.2 L720.1 327.3 L720.6 328.0 L721.1 324.6 L721.5 326.8 L722.0 325.1 L722.5 324.7 L723.0 327.1 L723.5 325.6 L723.9 328.6 L724.4 325.9 L724.9 327.2 L725.4 325.3 L725.8 325.3 L726.3 324.7 L726.8 325.3 L727.3 325.8 L727.8 327.0 L728.2 326.0 L728.7 324.5 L729.2 326.4 L729.7 326.1 L730.2 325.1 L730.6 325.3 L731.1 325.9 L731.6 327.0 L732.1 324.1 L732.5 325.9 L733.0 327.0 L733.5 325.4 L734.0 324.9 L734.5 327.3 L734.9 324.7 L735.4 325.4 L735.9 324.7 L736.4 324.5 L736.9 326.4 L737.3 327.7 L737.8 325.7 L738.3 326.1 L738.8 323.3 L739.2 325.4 L739.7 325.5 L740.2 325.6 L740.7 327.5 L741.2 324.9 L741.6 326.8 L742.1 327.6 L742.6 324.3 L743.1 324.6 L743.6 325.1 L744.0 326.0 L744.5 326.4 L745.0 325.5 L745.5 323.7 L746.0 326.4 L746.4 325.2 L746.9 325.2 L747.4 330.0 L747.9 326.1 L748.3 325.8 L748.8 325.0 L749.3 326.6 L749.8 327.7 L750.3 325.7 L750.7 325.7 L751.2 325.9 L751.7 326.9 L752.2 325.8 L752.7 324.7 L753.1 327.1 L753.6 325.6 L754.1 325.6 L754.6 326.7 L755.0 327.1 L755.5 327.7 L756.0 327.1 L756.5 325.3 L757.0 325.1 L757.4 327.8 L757.9 328.3 L758.4 326.6 L758.9 325.3 L759.4 326.2 L759.8 325.6 L760.3 326.1 L760.8 325.1 L761.3 326.8 L761.7 326.2 L762.2 325.9 L762.7 326.9 L763.2 324.0 L763.7 327.4 L764.1 326.6 L764.6 327.4 L765.1 325.1 L765.6 325.9 L766.1 326.4 L766.5 326.2 L767.0 326.7 L767.5 327.6 L768.0 327.6 L768.4 326.0 L768.9 326.1 L769.4 327.3 L769.9 326.6 L770.4 326.3 L770.8 324.9 L771.3 326.6 L771.8 327.6 L772.3 327.4 L772.8 325.7 L773.2 327.4 L773.7 326.9 L774.2 326.8 L774.7 326.1 L775.1 325.2 L775.6 325.6 L776.1 327.6 L776.6 323.9 L777.1 324.3 L777.5 327.2 L778.0 325.6 L778.5 324.5 L779.0 326.4 L779.5 326.6 L779.9 326.8 L780.4 327.0 L780.9 325.5 L781.4 326.4 L781.8 325.9 L782.3 326.7 L782.8 326.0 L783.3 323.9 L783.8 326.0 L784.2 326.5 L784.7 328.1 L785.2 326.6 L785.7 325.7 L786.2 325.7 L786.6 326.0 L787.1 326.7 L787.6 325.5 L788.1 326.0 L788.5 327.6 L789.0 326.1 L789.5 325.4 L790.0 325.4 L790.5 324.7 L790.9 326.1 L791.4 327.6 L791.9 325.4 L792.4 324.0 L792.9 327.6 L793.3 326.4 L793.8 326.1 L794.3 325.9 L794.8 324.8 L795.2 325.1 L795.7 327.8 L796.2 325.3 L796.7 328.6 L797.2 326.5 L797.6 328.5 L798.1 325.7 L798.6 328.7 L799.1 326.1 L799.6 327.6 L800.0 323.2 L800.5 326.6 L801.0 326.2 L801.5 327.4 L801.9 327.4 L802.4 324.7 L802.9 325.5 L803.4 327.4 L803.9 326.5 L804.3 326.6 L804.8 323.8 L805.3 326.3 L805.8 326.0 L806.3 325.5 L806.7 324.3 L807.2 325.9 L807.7 327.8 L808.2 327.2 L808.6 324.6 L809.1 326.3 L809.6 328.2 L810.1 326.6 L810.6 326.5 L811.0 326.5 L811.5 325.8 L812.0 325.5 L812.5 324.8 L813.0 328.4 L813.4 326.6 L813.9 327.6 L814.4 327.8 L814.9 325.6 L815.3 328.7 L815.8 329.7 L816.3 325.5 L816.8 326.0 L817.3 326.4 L817.7 325.8 L818.2 327.9 L818.7 325.4 L819.2 326.8 L819.7 326.7 L820.1 326.0 L820.6 326.2 L821.1 327.1 L821.6 327.7 L822.1 326.0 L822.5 324.7 L823.0 329.3 L823.5 325.4 L824.0 327.4 L824.4 323.6 L824.9 326.4 L825.4 324.6 L825.9 326.8 L826.4 325.1 L826.8 326.3 L827.3 325.8 L827.8 325.1 L828.3 330.2 L828.8 327.8 L829.2 328.8 L829.7 326.4 L830.2 326.2 L830.7 325.5 L831.1 325.6 L831.6 324.9 L832.1 326.7 L832.6 326.3 L833.1 325.8 L833.5 328.0 L834.0 328.5 L834.5 326.9 L835.0 326.6 L835.5 326.6 L835.9 327.1 L836.4 326.6 L836.9 323.2 L837.4 326.2 L837.8 327.1 L838.3 326.3 L838.8 325.8 L839.3 327.6 L839.8 324.7 L840.2 326.9 L840.7 325.7 L841.2 325.8 L841.7 326.8 L842.2 322.4 L842.6 326.9 L843.1 327.7 L843.6 326.8 L844.1 327.3 L844.5 324.4 L845.0 326.0 L845.5 328.5 L846.0 324.1 L846.5 326.6 L846.9 327.9 L847.4 325.4 L847.9 326.5 L848.4 327.9 L848.9 327.8 L849.3 326.8 L849.8 326.6 L850.3 325.3 L850.8 327.3 L851.2 327.2 L851.7 328.4 L852.2 327.3 L852.7 324.0 L853.2 326.9 L853.6 325.8 L854.1 328.2 L854.6 326.3 L855.1 327.3 L855.6 326.8 L856.0 327.7 L856.5 328.3 L857.0 323.9 L857.5 325.8 L857.9 328.6 L858.4 324.7 L858.9 326.6 L859.4 324.4 L859.9 328.8 L860.3 327.0 L860.8 327.1 L861.3 328.1 L861.8 327.7 L862.3 323.9 L862.7 326.4 L863.2 326.8 L863.7 329.0 L864.2 324.8 L864.6 324.2 L865.1 327.0 L865.6 328.5 L866.1 325.8 L866.6 326.8 L867.0 328.3 L867.5 323.8 L868.0 325.8 L868.5 327.8 L869.0 326.5 L869.4 325.5 L869.9 324.2 L870.4 325.6 L870.9 325.0 L871.3 326.5 L871.8 324.0 L872.3 325.8 L872.8 325.3 L873.3 325.4 L873.7 325.0 L874.2 324.1 L874.7 324.5 L875.2 328.5 L875.7 326.2 L876.1 324.7 L876.6 324.0 L877.1 326.1 L877.6 324.4 L878.0 326.0 L878.5 325.4 L879.0 326.0 L879.5 325.6 L880.0 324.3 L880.4 324.1 L880.9 325.2 L881.4 326.3 L881.9 324.6 L882.4 322.1 L882.8 326.6 L883.3 326.0 L883.8 324.6 L884.3 328.0 L884.7 329.6 L885.2 324.6 L885.7 323.7 L886.2 324.4 L886.7 324.9 L887.1 325.4 L887.6 327.3 L888.1 324.4 L888.6 326.3 L889.1 327.8 L889.5 326.4 L890.0 327.4 L890.5 326.7 L891.0 325.8 L891.4 326.2 L891.9 325.9 L892.4 327.0 L892.9 326.7 L893.4 325.9 L893.8 324.9 L894.3 325.0 L894.8 325.5 L895.3 324.5 L895.8 323.8 L896.2 325.4 L896.7 325.7 L897.2 325.0 L897.7 326.1 L898.2 326.3 L898.6 323.6 L899.1 325.8 L899.6 323.7 L900.1 326.3 L900.5 325.3 L901.0 323.6 L901.5 325.8 L902.0 326.0 L902.5 325.6 L902.9 327.0 L903.4 326.3 L903.9 323.7 L904.4 329.1 L904.9 324.8 L905.3 327.4 L905.8 324.5 L906.3 326.8 L906.8 323.4 L907.2 326.6 L907.7 328.2 L908.2 323.3 L908.7 325.4 L909.2 325.6 L909.6 325.5 L910.1 325.9 L910.6 324.8 L911.1 326.2 L911.6 323.4 L912.0 326.3 L912.5 325.0 L913.0 324.3 L913.5 325.0 L913.9 325.1 L914.4 325.8 L914.9 326.2 L915.4 326.3 L915.9 323.9 L916.3 325.1 L916.8 327.1 L917.3 325.0 L917.8 326.2 L918.3 325.6 L918.7 325.6 L919.2 328.7 L919.7 325.0 L920.2 327.4 L920.6 328.0 L921.1 325.8 L921.6 326.5 L922.1 326.1 L922.6 327.2 L923.0 328.1 L923.5 329.1 L924.0 327.0 L924.5 328.9 L925.0 327.7 L925.4 326.7 L925.9 325.6 L926.4 327.8 L926.9 327.0 L927.3 327.4 L927.8 325.8 L928.3 325.6 L928.8 327.3 L929.3 327.6 L929.7 328.4 L930.2 327.2 L930.7 327.3 L931.2 324.5 L931.7 325.1 L932.1 328.0 L932.6 325.3 L933.1 327.5 L933.6 329.0 L934.0 325.4 L934.5 327.5 L935.0 327.0 L935.5 325.7 L936.0 327.0 L936.4 324.0 L936.9 326.1 L937.4 327.1 L937.9 328.4 L938.4 323.4 L938.8 328.1 L939.3 326.2 L939.8 325.7 L940.3 325.1 L940.7 327.2 L941.2 329.4 L941.7 325.4 L942.2 327.5 L942.7 326.9 L943.1 323.7 L943.6 326.8 L944.1 326.2 L944.6 327.4 L945.1 322.6 L945.5 326.5 L946.0 326.3 L946.5 326.1 L947.0 326.1 L947.4 324.1 L947.9 325.8 L948.4 327.0 L948.9 326.3 L949.4 327.1 L949.8 326.2 L950.3 325.8 L950.8 327.1 L951.3 326.9 L951.8 323.5 L952.2 325.9 L952.7 325.1 L953.2 326.4 L953.7 326.0 L954.1 326.9 L954.6 328.6 L955.1 326.8 L955.6 325.5 L956.1 324.4 L956.5 324.7 L957.0 326.8 L957.5 327.1 L958.0 327.7 L958.5 325.7 L958.9 324.1 L959.4 325.5 L959.9 326.7 L960.4 325.0 L960.8 326.2 L961.3 325.1 L961.8 327.4 L962.3 325.8 L962.8 326.6 L963.2 327.5 L963.7 330.0 L964.2 326.5 L964.7 325.9 L965.2 327.1 L965.6 324.2 L966.1 324.9 L966.6 323.5 L967.1 326.0 L967.6 326.8 L968.0 325.7 L968.5 324.2 L969.0 324.7 L969.5 328.1 L969.9 327.2 L970.4 329.6 L970.9 327.3 L971.4 324.8 L971.9 325.3 L972.3 323.5 L972.8 325.4 L973.3 327.5 L973.8 327.9 L974.3 326.5 L974.7 324.3 L975.2 328.6 L975.7 328.4 L976.2 326.8 L976.6 326.1 L977.1 325.2 L977.6 327.3 L978.1 325.9 L978.6 325.6 L979.0 325.9 L979.5 324.4 L980.0 327.6 L980.5 328.5 L981.0 327.9 L981.4 325.8 L981.9 325.1 L982.4 325.0 L982.9 326.0 L983.3 325.4 L983.8 327.3 L984.3 325.8 L984.8 325.2 L985.3 327.3 L985.7 325.5 L986.2 325.9 L986.7 324.1 L987.2 325.9 L987.7 326.8 L988.1 325.6 L988.6 326.0 L989.1 323.9 L989.6 326.1 L990.0 325.4 L990.5 326.2 L991.0 326.0 L991.5 323.5 L992.0 328.8 L992.4 324.7 L992.9 326.2 L993.4 326.4 L993.9 327.8 L994.4 325.8 L994.8 327.0 L995.3 325.3 L995.8 324.2 L996.3 327.8 L996.7 327.7 L997.2 323.8 L997.7 324.2 L998.2 325.2 L998.7 328.9 L999.1 328.1 L999.6 325.4 L1000.1 323.9 L1000.6 326.5 L1001.1 327.7 L1001.5 326.0 L1002.0 328.2 L1002.5 326.9 L1003.0 327.3 L1003.4 327.8 L1003.9 325.9 L1004.4 326.8 L1004.9 325.8 L1005.4 324.3 L1005.8 325.4 L1006.3 324.7 L1006.8 327.0 L1007.3 328.4 L1007.8 326.5 L1008.2 326.3 L1008.7 325.5 L1009.2 327.4 L1009.7 325.7 L1010.1 327.8 L1010.6 325.7 L1011.1 324.0 L1011.6 326.4 L1012.1 325.9 L1012.5 324.7 L1013.0 325.4 L1013.5 325.7 L1014.0 326.1 L1014.5 327.2 L1014.9 324.3 L1015.4 327.9 L1015.9 323.8 L1016.4 327.4 L1016.8 325.9 L1017.3 327.9 L1017.8 328.2 L1018.3 327.8 L1018.8 328.5 L1019.2 324.5 L1019.7 327.2 L1020.2 326.7 L1020.7 327.5 L1021.2 326.6 L1021.6 326.2 L1022.1 325.9 L1022.6 326.8 L1023.1 327.8 L1023.5 326.2 L1024.0 326.0 L1024.5 325.6 L1025.0 327.3 L1025.5 326.9 L1025.9 326.0 L1026.4 326.6 L1026.9 327.5 L1027.4 326.7 L1027.9 326.9 L1028.3 326.0 L1028.8 324.4 L1029.3 326.7 L1029.8 327.8 L1030.2 327.3 L1030.7 324.8 L1031.2 327.2 L1031.7 324.7 L1032.2 325.8 L1032.6 325.0 L1033.1 325.8 L1033.6 326.8 L1034.1 326.2 L1034.6 326.6 L1035.0 326.1 L1035.5 325.5 L1036.0 324.5 L1036.5 327.2 L1036.9 327.9 L1037.4 325.1 L1037.9 323.5 L1038.4 323.9 L1038.9 327.7 L1039.3 325.2 L1039.8 324.5 L1040.3 324.7 L1040.8 323.9 L1041.3 324.8 L1041.7 329.7 L1042.2 325.2 L1042.7 326.2 L1043.2 327.1 L1043.7 327.8 L1044.1 326.9 L1044.6 325.8 L1045.1 323.7 L1045.6 324.6 L1046.0 324.8 L1046.5 324.7 L1047.0 326.0 L1047.5 326.7 L1048.0 323.5 L1048.4 325.8 L1048.9 326.0 L1049.4 325.5 L1049.9 327.4 L1050.4 324.2 L1050.8 327.8 L1051.3 326.1 L1051.8 325.8 L1052.3 326.1 L1052.7 326.7 L1053.2 324.3 L1053.7 324.8 L1054.2 325.8 L1054.7 325.3 L1055.1 326.0 L1055.6 324.5 L1056.1 326.4 L1056.6 327.1 L1057.1 326.1 L1057.5 326.6 L1058.0 325.7 L1058.5 325.5 L1059.0 325.3 L1059.4 328.2 L1059.9 327.7 L1060.4 326.1 L1060.9 325.2 L1061.4 325.4 L1061.8 326.3 L1062.3 326.7 L1062.8 327.4 L1063.3 324.8 L1063.8 325.5 L1064.2 326.0 L1064.7 327.9 L1065.2 325.3 L1065.7 326.5 L1066.1 326.7 L1066.6 327.1 L1067.1 327.1 L1067.6 323.7 L1068.1 326.1 L1068.5 325.3 L1069.0 326.9 L1069.5 328.2 L1070.0 328.5 L1070.5 327.6 L1070.9 326.7 L1071.4 327.0 L1071.9 327.6 L1072.4 325.3 L1072.8 327.5 L1073.3 324.6 L1073.8 326.6 L1074.3 326.2 L1074.8 326.7 L1075.2 326.9 L1075.7 326.3 L1076.2 325.7 L1076.7 324.9 L1077.2 327.4 L1077.6 327.4 L1078.1 325.3 L1078.6 324.3 L1079.1 327.4 L1079.5 326.4 L1080.0 326.8 L1080.5 325.8 L1081.0 324.6 L1081.5 327.1 L1081.9 326.7 L1082.4 324.0 L1082.9 325.8 L1083.4 326.7 L1083.9 328.0 L1084.3 326.4 L1084.8 324.4 L1085.3 324.7 L1085.8 324.7 L1086.2 325.8 L1086.7 326.2 L1087.2 326.8 L1087.7 324.8 L1088.2 326.6 L1088.6 327.0 L1089.1 326.2 L1089.6 325.0 L1090.1 324.6 L1090.6 325.2 L1091.0 323.5 L1091.5 325.4 L1092.0 327.5 L1092.5 325.7 L1092.9 326.9 L1093.4 327.3 L1093.9 324.0 L1094.4 326.9 L1094.9 326.6 L1095.3 326.9 L1095.8 326.6 L1096.3 327.9 L1096.8 325.2 L1097.3 324.4 L1097.7 326.5 L1098.2 324.8 L1098.7 324.9 L1099.2 324.7 L1099.6 325.1 L1100.1 327.3 L1100.6 325.2 L1101.1 325.3 L1101.6 325.1 L1102.0 325.7 L1102.5 323.5 L1103.0 323.1 L1103.5 325.7 L1104.0 324.9 L1104.4 324.8 L1104.9 325.7 L1105.4 325.1 L1105.9 326.6 L1106.3 327.0 L1106.8 323.9 L1107.3 324.3 L1107.8 326.1 L1108.3 326.3 L1108.7 327.5 L1109.2 325.3 L1109.7 326.5 L1110.2 324.9 L1110.7 324.4 L1111.1 326.3 L1111.6 324.3 L1112.1 323.8 L1112.6 324.4 L1113.0 326.1 L1113.5 326.4 L1114.0 326.3 L1114.5 328.3 L1115.0 325.3 L1115.4 325.0 L1115.9 328.0 L1116.4 325.5 L1116.9 325.0 L1117.4 325.7 L1117.8 324.8 L1118.3 325.2 L1118.8 326.2 L1119.3 325.7 L1119.8 326.7 L1120.2 328.7 L1120.7 322.4 L1121.2 326.1 L1121.7 326.1 L1122.1 324.5 L1122.6 326.3 L1123.1 326.3 L1123.6 324.7 L1124.1 325.3 L1124.5 326.7 L1125.0 328.9 L1125.5 325.6 L1126.0 327.6 L1126.5 327.3 L1126.9 326.5 L1127.4 323.7 L1127.9 327.7 L1128.4 325.6 L1128.8 327.6 L1129.3 328.1 L1129.8 325.6 L1130.3 325.3 L1130.8 325.3 L1131.2 324.7 L1131.7 323.8 L1132.2 325.3 L1132.7 326.4 L1133.2 327.5 L1133.6 326.1 L1134.1 325.9 L1134.6 325.7 L1135.1 326.1 L1135.5 326.9 L1136.0 326.6 L1136.5 327.7 L1137.0 326.7 L1137.5 324.3 L1137.9 325.0 L1138.4 324.1 L1138.9 325.0 L1139.4 325.4 L1139.9 324.5 L1140.3 326.3 L1140.8 324.0 L1141.3 325.4 L1141.8 324.7 L1142.2 326.7 L1142.7 323.1 L1143.2 325.3 L1143.7 325.6 L1144.2 326.5 L1144.6 326.1 L1145.1 324.9 L1145.6 328.1 L1146.1 324.4 L1146.6 326.7 L1147.0 324.5 L1147.5 326.6 L1148.0 326.3 L1148.5 325.5 L1148.9 325.7 L1149.4 327.8 L1149.9 324.8 L1150.4 326.2 L1150.9 324.2 L1151.3 326.7 L1151.8 325.6 L1152.3 326.0 L1152.8 325.4 L1153.3 324.5 L1153.7 324.4 L1154.2 327.5 L1154.7 326.8 L1155.2 326.9 L1155.6 326.9 L1156.1 326.9 L1156.6 327.0 L1157.1 326.2 L1157.6 327.9 L1158.0 324.4 L1158.5 328.1 L1159.0 325.9 L1159.5 325.6 L1160.0 327.2 L1160.4 327.4 L1160.9 326.0 L1161.4 327.6 L1161.9 325.3 L1162.3 326.1 L1162.8 326.6 L1163.3 325.1 L1163.8 325.4 L1164.3 327.2 L1164.7 326.3 L1165.2 326.9 L1165.7 327.6 L1166.2 326.0 L1166.7 324.0 L1167.1 325.1 L1167.6 326.6 L1168.1 324.3 L1168.6 327.3 L1169.0 325.9 L1169.5 326.8 L1170.0 326.2 L1170.5 324.4 L1171.0 325.8 L1171.4 326.3 L1171.9 326.5 L1172.4 326.7 L1172.9 326.3 L1173.4 324.1 L1173.8 325.6 L1174.3 324.5 L1174.8 323.6 L1175.3 324.4 L1175.7 324.7 L1176.2 325.6 L1176.7 324.8 L1177.2 328.0 L1177.7 325.4 L1178.1 326.7 L1178.6 326.4 L1179.1 326.5 L1179.6 325.6 L1180.1 323.8 L1180.5 326.1 L1181.0 326.7 L1181.5 324.6 L1182.0 324.8 L1182.4 324.3 L1182.9 326.4 L1183.4 327.8 L1183.9 324.0 L1184.4 324.5 L1184.8 325.8 L1185.3 325.9 L1185.8 324.7 L1186.3 323.3 L1186.8 324.3 L1187.2 325.6 L1187.7 325.7 L1188.2 325.6 L1188.7 325.9 L1189.1 326.5 L1189.6 325.4 L1190.1 325.2 L1190.6 326.6 L1191.1 327.3 L1191.5 325.7 L1192.0 326.9 L1192.5 325.2" stroke="rgba(40,38,30,0.9)" stroke-width="1" fill="none"/><path d="M666.5 325.3 L667.0 320.3 L667.5 322.6 L667.9 320.8 L668.4 323.2 L668.9 321.0 L669.4 320.9 L669.9 324.5 L670.3 324.2 L670.8 324.8 L671.3 323.7 L671.8 323.5 L672.2 324.6 L672.7 317.5 L673.2 322.9 L673.7 322.2 L674.2 322.0 L674.6 323.8 L675.1 326.0 L675.6 324.4 L676.1 324.3 L676.6 325.4 L677.0 323.7 L677.5 326.7 L678.0 323.4 L678.5 322.0 L678.9 323.6 L679.4 323.5 L679.9 324.8 L680.4 324.8 L680.9 323.0 L681.3 323.3 L681.8 323.6 L682.3 324.2 L682.8 321.7 L683.3 324.0 L683.7 327.2 L684.2 324.8 L684.7 324.1 L685.2 323.0 L685.6 322.0 L686.1 322.5 L686.6 324.8 L687.1 325.0 L687.6 323.1 L688.0 320.8 L688.5 324.9 L689.0 323.2 L689.5 322.2 L690.0 326.6 L690.4 326.0 L690.9 323.4 L691.4 321.0 L691.9 323.5 L692.3 322.6 L692.8 322.4 L693.3 321.2 L693.8 324.0 L694.3 325.0 L694.7 323.7 L695.2 323.1 L695.7 322.6 L696.2 321.7 L696.7 322.7 L697.1 325.3 L697.6 323.3 L698.1 326.2 L698.6 321.0 L699.0 320.8 L699.5 324.2 L700.0 325.7 L700.5 323.3 L701.0 325.4 L701.4 324.9 L701.9 325.2 L702.4 324.0 L702.9 325.3 L703.4 323.9 L703.8 323.0 L704.3 325.4 L704.8 324.4 L705.3 326.4 L705.7 325.3 L706.2 324.3 L706.7 323.8 L707.2 325.6 L707.7 324.5 L708.1 324.4 L708.6 322.8 L709.1 323.7 L709.6 322.6 L710.1 324.6 L710.5 323.8 L711.0 322.3 L711.5 324.5 L712.0 325.9 L712.4 323.2 L712.9 323.4 L713.4 324.6 L713.9 324.8 L714.4 323.2 L714.8 319.9 L715.3 322.5 L715.8 323.0 L716.3 324.2 L716.8 322.6 L717.2 324.1 L717.7 321.0 L718.2 323.9 L718.7 324.4 L719.1 322.3 L719.6 324.6 L720.1 325.5 L720.6 326.8 L721.1 323.5 L721.5 326.1 L722.0 324.3 L722.5 320.0 L723.0 324.6 L723.5 324.2 L723.9 326.3 L724.4 324.1 L724.9 325.8 L725.4 323.6 L725.8 324.0 L726.3 321.1 L726.8 323.7 L727.3 325.0 L727.8 323.1 L728.2 324.6 L728.7 322.5 L729.2 323.7 L729.7 324.5 L730.2 324.2 L730.6 323.3 L731.1 322.9 L731.6 325.5 L732.1 321.6 L732.5 323.5 L733.0 325.5 L733.5 323.5 L734.0 322.6 L734.5 325.8 L734.9 322.3 L735.4 324.2 L735.9 322.3 L736.4 323.0 L736.9 325.2 L737.3 325.8 L737.8 324.2 L738.3 324.7 L738.8 322.0 L739.2 324.7 L739.7 323.0 L740.2 323.7 L740.7 326.1 L741.2 322.6 L741.6 323.9 L742.1 325.5 L742.6 323.2 L743.1 322.9 L743.6 323.3 L744.0 324.7 L744.5 324.7 L745.0 323.3 L745.5 322.7 L746.0 323.6 L746.4 323.3 L746.9 322.9 L747.4 327.0 L747.9 322.0 L748.3 322.0 L748.8 322.6 L749.3 325.8 L749.8 324.7 L750.3 323.1 L750.7 323.7 L751.2 323.3 L751.7 325.2 L752.2 324.6 L752.7 323.0 L753.1 324.9 L753.6 323.1 L754.1 323.3 L754.6 324.0 L755.0 326.3 L755.5 325.2 L756.0 325.2 L756.5 323.3 L757.0 324.3 L757.4 325.4 L757.9 326.7 L758.4 322.9 L758.9 323.4 L759.4 323.6 L759.8 323.3 L760.3 322.8 L760.8 324.2 L761.3 325.4 L761.7 324.5 L762.2 323.7 L762.7 325.8 L763.2 322.3 L763.7 326.8 L764.1 324.1 L764.6 324.7 L765.1 322.9 L765.6 323.3 L766.1 325.8 L766.5 325.3 L767.0 324.8 L767.5 326.0 L768.0 324.9 L768.4 325.0 L768.9 322.7 L769.4 325.6 L769.9 323.8 L770.4 324.2 L770.8 322.2 L771.3 324.9 L771.8 326.2 L772.3 326.9 L772.8 321.8 L773.2 325.5 L773.7 325.6 L774.2 325.2 L774.7 323.9 L775.1 322.6 L775.6 323.7 L776.1 325.1 L776.6 319.1 L777.1 321.3 L777.5 324.8 L778.0 323.7 L778.5 321.7 L779.0 325.8 L779.5 324.9 L779.9 323.6 L780.4 325.8 L780.9 323.2 L781.4 324.6 L781.8 323.4 L782.3 324.8 L782.8 324.6 L783.3 323.6 L783.8 324.0 L784.2 324.0 L784.7 326.5 L785.2 324.1 L785.7 324.3 L786.2 324.5 L786.6 323.5 L787.1 325.1 L787.6 323.9 L788.1 323.6 L788.5 326.3 L789.0 321.5 L789.5 322.2 L790.0 323.8 L790.5 321.0 L790.9 323.4 L791.4 322.1 L791.9 320.6 L792.4 321.0 L792.9 325.7 L793.3 325.1 L793.8 323.7 L794.3 324.1 L794.8 321.2 L795.2 323.5 L795.7 325.7 L796.2 323.4 L796.7 325.3 L797.2 325.0 L797.6 326.1 L798.1 323.7 L798.6 322.4 L799.1 323.4 L799.6 325.7 L800.0 322.5 L800.5 323.9 L801.0 324.3 L801.5 325.9 L801.9 321.9 L802.4 322.1 L802.9 321.9 L803.4 325.8 L803.9 322.1 L804.3 322.1 L804.8 322.6 L805.3 324.1 L805.8 322.5 L806.3 322.2 L806.7 322.1 L807.2 323.0 L807.7 326.5 L808.2 324.5 L808.6 322.5 L809.1 322.1 L809.6 326.7 L810.1 324.6 L810.6 325.2 L811.0 324.4 L811.5 323.5 L812.0 324.5 L812.5 324.1 L813.0 327.3 L813.4 324.9 L813.9 324.6 L814.4 326.5 L814.9 323.4 L815.3 327.1 L815.8 326.7 L816.3 323.6 L816.8 324.4 L817.3 323.0 L817.7 323.3 L818.2 325.5 L818.7 323.4 L819.2 325.0 L819.7 324.6 L820.1 324.8 L820.6 324.1 L821.1 324.2 L821.6 325.3 L822.1 322.7 L822.5 322.3 L823.0 327.5 L823.5 323.6 L824.0 327.0 L824.4 322.6 L824.9 323.2 L825.4 321.5 L825.9 326.0 L826.4 322.8 L826.8 324.5 L827.3 324.8 L827.8 325.0 L828.3 328.0 L828.8 324.9 L829.2 325.3 L829.7 323.4 L830.2 323.2 L830.7 322.2 L831.1 322.1 L831.6 323.7 L832.1 325.0 L832.6 324.1 L833.1 324.1 L833.5 326.5 L834.0 324.9 L834.5 323.4 L835.0 325.4 L835.5 323.2 L835.9 325.1 L836.4 325.2 L836.9 320.6 L837.4 324.9 L837.8 325.1 L838.3 321.5 L838.8 323.9 L839.3 325.9 L839.8 322.7 L840.2 324.9 L840.7 321.7 L841.2 324.4 L841.7 322.4 L842.2 320.7 L842.6 324.0 L843.1 324.4 L843.6 325.7 L844.1 326.1 L844.5 323.0 L845.0 324.7 L845.5 325.9 L846.0 321.5 L846.5 323.6 L846.9 326.1 L847.4 323.5 L847.9 324.0 L848.4 324.4 L848.9 324.3 L849.3 324.5 L849.8 326.3 L850.3 322.4 L850.8 322.4 L851.2 324.7 L851.7 325.0 L852.2 325.2 L852.7 322.9 L853.2 326.5 L853.6 325.1 L854.1 324.0 L854.6 324.3 L855.1 326.5 L855.6 322.5 L856.0 326.1 L856.5 326.1 L857.0 321.4 L857.5 323.5 L857.9 324.2 L858.4 323.1 L858.9 325.7 L859.4 320.6 L859.9 326.0 L860.3 324.9 L860.8 325.5 L861.3 324.6 L861.8 325.8 L862.3 320.7 L862.7 323.0 L863.2 323.9 L863.7 326.2 L864.2 323.1 L864.6 322.8 L865.1 325.4 L865.6 325.7 L866.1 324.1 L866.6 324.8 L867.0 324.8 L867.5 322.2 L868.0 322.0 L868.5 325.8 L869.0 324.9 L869.4 322.2 L869.9 322.5 L870.4 322.8 L870.9 323.7 L871.3 323.9 L871.8 321.5 L872.3 324.2 L872.8 323.6 L873.3 323.6 L873.7 321.9 L874.2 323.0 L874.7 322.3 L875.2 326.0 L875.7 323.5 L876.1 322.1 L876.6 322.9 L877.1 324.8 L877.6 322.3 L878.0 324.4 L878.5 323.0 L879.0 324.5 L879.5 321.3 L880.0 323.0 L880.4 321.4 L880.9 323.5 L881.4 324.0 L881.9 321.9 L882.4 320.0 L882.8 324.6 L883.3 323.0 L883.8 322.3 L884.3 326.6 L884.7 325.9 L885.2 322.3 L885.7 320.6 L886.2 321.0 L886.7 321.9 L887.1 323.1 L887.6 323.9 L888.1 322.9 L888.6 325.6 L889.1 325.8 L889.5 323.2 L890.0 324.4 L890.5 321.9 L891.0 325.2 L891.4 324.7 L891.9 324.6 L892.4 325.6 L892.9 324.6 L893.4 323.6 L893.8 319.9 L894.3 323.2 L894.8 322.5 L895.3 322.8 L895.8 324.0 L896.2 321.7 L896.7 323.8 L897.2 321.8 L897.7 323.6 L898.2 320.7 L898.6 322.6 L899.1 325.3 L899.6 322.1 L900.1 323.6 L900.5 322.6 L901.0 321.0 L901.5 324.2 L902.0 323.6 L902.5 323.0 L902.9 324.0 L903.4 325.5 L903.9 322.9 L904.4 325.4 L904.9 323.7 L905.3 325.8 L905.8 323.2 L906.3 325.2 L906.8 322.2 L907.2 325.1 L907.7 323.5 L908.2 321.0 L908.7 321.8 L909.2 324.4 L909.6 323.8 L910.1 323.9 L910.6 324.5 L911.1 324.0 L911.6 321.4 L912.0 323.9 L912.5 323.1 L913.0 322.2 L913.5 324.1 L913.9 322.5 L914.4 323.8 L914.9 325.0 L915.4 324.8 L915.9 323.1 L916.3 322.1 L916.8 324.7 L917.3 322.4 L917.8 325.1 L918.3 324.8 L918.7 323.4 L919.2 326.5 L919.7 324.0 L920.2 324.7 L920.6 324.7 L921.1 323.7 L921.6 324.8 L922.1 325.2 L922.6 325.0 L923.0 324.9 L923.5 326.6 L924.0 325.1 L924.5 325.0 L925.0 325.7 L925.4 324.9 L925.9 324.6 L926.4 324.3 L926.9 323.7 L927.3 325.9 L927.8 324.6 L928.3 324.1 L928.8 325.6 L929.3 324.3 L929.7 326.0 L930.2 325.2 L930.7 325.8 L931.2 321.8 L931.7 323.8 L932.1 325.8 L932.6 324.1 L933.1 324.9 L933.6 327.1 L934.0 324.1 L934.5 325.4 L935.0 323.9 L935.5 321.9 L936.0 326.0 L936.4 322.8 L936.9 324.3 L937.4 325.9 L937.9 327.5 L938.4 322.0 L938.8 325.9 L939.3 322.5 L939.8 323.9 L940.3 324.2 L940.7 325.7 L941.2 326.7 L941.7 322.6 L942.2 326.5 L942.7 325.0 L943.1 320.1 L943.6 324.8 L944.1 324.0 L944.6 324.1 L945.1 320.4 L945.5 324.5 L946.0 324.6 L946.5 323.5 L947.0 322.2 L947.4 322.3 L947.9 324.6 L948.4 324.8 L948.9 323.2 L949.4 324.9 L949.8 324.0 L950.3 324.2 L950.8 325.3 L951.3 324.1 L951.8 322.2 L952.2 322.6 L952.7 323.0 L953.2 324.3 L953.7 322.3 L954.1 325.8 L954.6 327.3 L955.1 325.5 L955.6 322.1 L956.1 322.1 L956.5 323.4 L957.0 324.8 L957.5 324.7 L958.0 326.5 L958.5 323.9 L958.9 321.7 L959.4 323.5 L959.9 324.3 L960.4 322.9 L960.8 324.6 L961.3 321.7 L961.8 323.8 L962.3 322.3 L962.8 324.1 L963.2 325.0 L963.7 327.4 L964.2 322.7 L964.7 324.9 L965.2 323.9 L965.6 323.3 L966.1 321.0 L966.6 322.5 L967.1 323.5 L967.6 322.6 L968.0 322.3 L968.5 321.6 L969.0 321.4 L969.5 324.1 L969.9 324.6 L970.4 326.9 L970.9 323.3 L971.4 323.8 L971.9 323.2 L972.3 322.4 L972.8 323.9 L973.3 325.7 L973.8 325.5 L974.3 324.1 L974.7 323.3 L975.2 325.8 L975.7 325.3 L976.2 323.3 L976.6 324.0 L977.1 323.0 L977.6 322.6 L978.1 323.6 L978.6 322.3 L979.0 324.1 L979.5 321.4 L980.0 325.7 L980.5 326.1 L981.0 326.8 L981.4 323.8 L981.9 322.9 L982.4 323.5 L982.9 324.2 L983.3 323.5 L983.8 325.1 L984.3 323.8 L984.8 324.0 L985.3 324.9 L985.7 324.5 L986.2 324.2 L986.7 321.9 L987.2 323.5 L987.7 323.6 L988.1 324.4 L988.6 323.7 L989.1 322.0 L989.6 323.6 L990.0 324.3 L990.5 324.8 L991.0 324.0 L991.5 321.7 L992.0 326.3 L992.4 323.0 L992.9 324.2 L993.4 324.0 L993.9 327.1 L994.4 323.6 L994.8 324.7 L995.3 322.6 L995.8 321.6 L996.3 325.1 L996.7 325.1 L997.2 322.0 L997.7 321.6 L998.2 322.6 L998.7 326.9 L999.1 325.8 L999.6 323.8 L1000.1 322.8 L1000.6 321.3 L1001.1 326.2 L1001.5 324.0 L1002.0 326.4 L1002.5 322.6 L1003.0 325.2 L1003.4 326.5 L1003.9 322.6 L1004.4 323.8 L1004.9 324.4 L1005.4 322.2 L1005.8 322.2 L1006.3 320.8 L1006.8 323.1 L1007.3 326.5 L1007.8 324.5 L1008.2 322.4 L1008.7 324.1 L1009.2 324.3 L1009.7 324.3 L1010.1 325.9 L1010.6 323.9 L1011.1 322.7 L1011.6 325.5 L1012.1 323.1 L1012.5 324.1 L1013.0 323.2 L1013.5 322.6 L1014.0 323.1 L1014.5 325.5 L1014.9 321.9 L1015.4 326.3 L1015.9 321.6 L1016.4 325.7 L1016.8 323.9 L1017.3 324.6 L1017.8 327.0 L1018.3 326.6 L1018.8 326.0 L1019.2 322.8 L1019.7 324.7 L1020.2 325.7 L1020.7 322.7 L1021.2 324.7 L1021.6 324.6 L1022.1 324.0 L1022.6 325.0 L1023.1 326.9 L1023.5 322.5 L1024.0 322.5 L1024.5 323.2 L1025.0 325.9 L1025.5 322.9 L1025.9 325.1 L1026.4 324.3 L1026.9 326.8 L1027.4 323.7 L1027.9 322.6 L1028.3 323.8 L1028.8 323.4 L1029.3 324.4 L1029.8 326.6 L1030.2 325.6 L1030.7 324.2 L1031.2 323.7 L1031.7 321.6 L1032.2 324.1 L1032.6 323.6 L1033.1 323.8 L1033.6 325.2 L1034.1 323.3 L1034.6 323.9 L1035.0 323.2 L1035.5 324.6 L1036.0 321.3 L1036.5 323.7 L1036.9 324.8 L1037.4 323.1 L1037.9 321.0 L1038.4 322.7 L1038.9 325.4 L1039.3 321.1 L1039.8 322.9 L1040.3 321.8 L1040.8 321.0 L1041.3 323.2 L1041.7 326.8 L1042.2 321.8 L1042.7 323.5 L1043.2 324.9 L1043.7 325.9 L1044.1 326.2 L1044.6 324.1 L1045.1 322.4 L1045.6 321.8 L1046.0 322.4 L1046.5 322.9 L1047.0 324.7 L1047.5 324.1 L1048.0 320.8 L1048.4 323.4 L1048.9 323.1 L1049.4 323.8 L1049.9 325.5 L1050.4 321.3 L1050.8 325.4 L1051.3 325.1 L1051.8 324.0 L1052.3 323.6 L1052.7 325.7 L1053.2 322.1 L1053.7 322.5 L1054.2 323.2 L1054.7 319.7 L1055.1 323.2 L1055.6 323.3 L1056.1 324.5 L1056.6 322.6 L1057.1 323.8 L1057.5 324.1 L1058.0 324.9 L1058.5 323.3 L1059.0 322.7 L1059.4 325.6 L1059.9 326.5 L1060.4 324.6 L1060.9 323.3 L1061.4 322.6 L1061.8 324.6 L1062.3 325.2 L1062.8 324.7 L1063.3 323.4 L1063.8 325.0 L1064.2 324.9 L1064.7 323.9 L1065.2 323.0 L1065.7 324.5 L1066.1 325.3 L1066.6 324.9 L1067.1 325.5 L1067.6 321.3 L1068.1 324.4 L1068.5 322.8 L1069.0 324.3 L1069.5 325.6 L1070.0 325.0 L1070.5 325.1 L1070.9 324.1 L1071.4 324.5 L1071.9 326.1 L1072.4 323.8 L1072.8 324.4 L1073.3 321.4 L1073.8 324.7 L1074.3 324.0 L1074.8 326.1 L1075.2 324.0 L1075.7 321.8 L1076.2 322.4 L1076.7 323.6 L1077.2 322.1 L1077.6 326.0 L1078.1 322.0 L1078.6 323.2 L1079.1 324.2 L1079.5 323.8 L1080.0 322.4 L1080.5 323.8 L1081.0 322.9 L1081.5 325.3 L1081.9 323.4 L1082.4 321.8 L1082.9 324.0 L1083.4 322.0 L1083.9 325.6 L1084.3 324.3 L1084.8 322.6 L1085.3 323.3 L1085.8 322.0 L1086.2 324.3 L1086.7 324.9 L1087.2 325.4 L1087.7 322.4 L1088.2 323.9 L1088.6 324.9 L1089.1 324.8 L1089.6 322.2 L1090.1 323.1 L1090.6 322.3 L1091.0 321.2 L1091.5 323.4 L1092.0 325.7 L1092.5 321.8 L1092.9 325.0 L1093.4 324.5 L1093.9 323.2 L1094.4 320.1 L1094.9 323.0 L1095.3 324.6 L1095.8 324.7 L1096.3 325.4 L1096.8 322.0 L1097.3 321.5 L1097.7 324.2 L1098.2 323.7 L1098.7 321.8 L1099.2 321.8 L1099.6 320.1 L1100.1 326.6 L1100.6 322.5 L1101.1 325.0 L1101.6 321.4 L1102.0 323.2 L1102.5 321.2 L1103.0 320.5 L1103.5 323.8 L1104.0 322.3 L1104.4 323.5 L1104.9 323.9 L1105.4 322.9 L1105.9 325.7 L1106.3 325.1 L1106.8 322.9 L1107.3 321.8 L1107.8 324.5 L1108.3 324.9 L1108.7 323.2 L1109.2 321.2 L1109.7 326.0 L1110.2 322.5 L1110.7 320.4 L1111.1 323.4 L1111.6 322.1 L1112.1 320.8 L1112.6 321.5 L1113.0 324.8 L1113.5 315.4 L1114.0 321.8 L1114.5 323.0 L1115.0 324.3 L1115.4 323.6 L1115.9 326.4 L1116.4 323.0 L1116.9 324.2 L1117.4 324.6 L1117.8 324.2 L1118.3 321.7 L1118.8 323.7 L1119.3 322.8 L1119.8 324.2 L1120.2 325.8 L1120.7 322.3 L1121.2 322.6 L1121.7 323.2 L1122.1 322.5 L1122.6 323.2 L1123.1 324.2 L1123.6 321.9 L1124.1 322.4 L1124.5 324.8 L1125.0 326.6 L1125.5 322.3 L1126.0 322.9 L1126.5 325.7 L1126.9 324.4 L1127.4 319.4 L1127.9 324.2 L1128.4 320.2 L1128.8 325.8 L1129.3 324.4 L1129.8 324.7 L1130.3 323.6 L1130.8 323.5 L1131.2 324.6 L1131.7 321.1 L1132.2 324.0 L1132.7 324.1 L1133.2 325.4 L1133.6 322.7 L1134.1 322.8 L1134.6 322.4 L1135.1 323.4 L1135.5 324.7 L1136.0 325.9 L1136.5 326.5 L1137.0 324.1 L1137.5 322.4 L1137.9 322.1 L1138.4 319.2 L1138.9 321.7 L1139.4 324.7 L1139.9 322.5 L1140.3 323.4 L1140.8 322.7 L1141.3 324.4 L1141.8 323.7 L1142.2 325.1 L1142.7 322.2 L1143.2 322.5 L1143.7 323.6 L1144.2 323.3 L1144.6 325.1 L1145.1 323.8 L1145.6 326.2 L1146.1 320.6 L1146.6 324.9 L1147.0 322.6 L1147.5 324.6 L1148.0 324.7 L1148.5 324.5 L1148.9 323.5 L1149.4 325.1 L1149.9 321.5 L1150.4 324.1 L1150.9 321.8 L1151.3 325.5 L1151.8 323.6 L1152.3 325.1 L1152.8 322.0 L1153.3 323.6 L1153.7 320.6 L1154.2 322.1 L1154.7 324.6 L1155.2 323.8 L1155.6 324.2 L1156.1 324.3 L1156.6 326.2 L1157.1 322.6 L1157.6 324.3 L1158.0 323.1 L1158.5 326.7 L1159.0 323.4 L1159.5 324.2 L1160.0 323.6 L1160.4 325.7 L1160.9 323.7 L1161.4 326.5 L1161.9 323.4 L1162.3 323.5 L1162.8 324.3 L1163.3 325.3 L1163.8 323.4 L1164.3 320.9 L1164.7 324.6 L1165.2 324.5 L1165.7 325.1 L1166.2 324.0 L1166.7 322.9 L1167.1 322.8 L1167.6 324.5 L1168.1 323.1 L1168.6 325.3 L1169.0 323.3 L1169.5 323.9 L1170.0 325.1 L1170.5 320.4 L1171.0 324.7 L1171.4 325.1 L1171.9 323.2 L1172.4 324.9 L1172.9 325.4 L1173.4 322.8 L1173.8 323.4 L1174.3 322.7 L1174.8 321.5 L1175.3 323.0 L1175.7 323.3 L1176.2 323.8 L1176.7 320.7 L1177.2 325.0 L1177.7 322.8 L1178.1 325.0 L1178.6 325.7 L1179.1 324.7 L1179.6 322.4 L1180.1 323.2 L1180.5 324.6 L1181.0 323.5 L1181.5 320.8 L1182.0 323.5 L1182.4 323.1 L1182.9 323.2 L1183.4 324.0 L1183.9 323.0 L1184.4 318.9 L1184.8 324.0 L1185.3 323.2 L1185.8 321.4 L1186.3 320.8 L1186.8 319.9 L1187.2 324.1 L1187.7 323.7 L1188.2 323.6 L1188.7 324.2 L1189.1 324.7 L1189.6 322.3 L1190.1 321.3 L1190.6 324.1 L1191.1 325.5 L1191.5 324.1 L1192.0 324.7 L1192.5 323.7" stroke="#6ed0e0" stroke-width="1.5" fill="none"/><line x1="666.5" y1="158.5" x2="1192.5" y2="158.5" stroke="#e47a3a" stroke-width="1.2"/><rect x="1293" y="179" width="508" height="110.60000000000002" fill="rgba(236,176,70,0.105)"/><rect x="1293" y="289.6" width="508" height="7.2999999999999545" fill="rgba(126,178,109,0.08)"/><g stroke="rgba(204,204,214,0.22)" stroke-width="1"><line x1="1293" y1="158.50" x2="1801" y2="158.50"/><line x1="1293" y1="204.63" x2="1801" y2="204.63"/><line x1="1293" y1="250.77" x2="1801" y2="250.77"/><line x1="1293" y1="296.90" x2="1801" y2="296.90"/><line x1="1357.50" y1="158.5" x2="1357.50" y2="296.9"/><line x1="1437.50" y1="158.5" x2="1437.50" y2="296.9"/><line x1="1518.00" y1="158.5" x2="1518.00" y2="296.9"/><line x1="1599.00" y1="158.5" x2="1599.00" y2="296.9"/><line x1="1679.50" y1="158.5" x2="1679.50" y2="296.9"/><line x1="1759.50" y1="158.5" x2="1759.50" y2="296.9"/></g><line x1="1293" y1="289.4" x2="1801" y2="289.4" stroke="#7eb26d" stroke-width="1.5"/><line x1="1293" y1="177.5" x2="1801" y2="177.5" stroke="#d8783a" stroke-width="1"/><line x1="1293" y1="178.5" x2="1801" y2="178.5" stroke="#c4a478" stroke-width="1"/><line x1="1293" y1="179.5" x2="1801" y2="179.5" stroke="#56624a" stroke-width="1"/><g stroke="rgba(204,204,214,0.22)" stroke-width="1"><line x1="55" y1="502.60" x2="581.5" y2="502.60"/><line x1="55" y1="553.05" x2="581.5" y2="553.05"/><line x1="55" y1="603.50" x2="581.5" y2="603.50"/><line x1="122.00" y1="492" x2="122.00" y2="603.5"/><line x1="205.50" y1="492" x2="205.50" y2="603.5"/><line x1="288.00" y1="492" x2="288.00" y2="603.5"/><line x1="371.50" y1="492" x2="371.50" y2="603.5"/><line x1="455.00" y1="492" x2="455.00" y2="603.5"/><line x1="539.00" y1="492" x2="539.00" y2="603.5"/></g><path d="M55.0 604.6 L55.0 597.9 L55.5 597.9 L56.0 597.8 L56.4 596.9 L56.9 597.5 L57.4 598.0 L57.9 598.1 L58.4 597.9 L58.8 597.7 L59.3 597.7 L59.8 598.2 L60.3 596.5 L60.7 597.9 L61.2 598.0 L61.7 597.9 L62.2 598.0 L62.7 598.1 L63.1 597.5 L63.6 597.6 L64.1 598.0 L64.6 596.4 L65.1 598.2 L65.5 596.5 L66.0 598.4 L66.5 597.3 L67.0 598.5 L67.5 598.2 L67.9 598.3 L68.4 596.9 L68.9 596.9 L69.4 596.7 L69.9 597.9 L70.3 598.2 L70.8 597.9 L71.3 598.0 L71.8 595.5 L72.2 597.1 L72.7 597.3 L73.2 598.3 L73.7 598.2 L74.2 597.6 L74.6 598.0 L75.1 597.9 L75.6 598.5 L76.1 597.2 L76.6 598.3 L77.0 597.5 L77.5 598.5 L78.0 598.5 L78.5 598.4 L79.0 598.0 L79.4 598.3 L79.9 598.0 L80.4 598.4 L80.9 595.6 L81.3 597.6 L81.8 598.5 L82.3 597.3 L82.8 597.7 L83.3 597.9 L83.7 598.2 L84.2 597.5 L84.7 597.9 L85.2 597.6 L85.7 598.2 L86.1 598.0 L86.6 597.9 L87.1 597.1 L87.6 598.0 L88.1 597.6 L88.5 598.8 L89.0 596.5 L89.5 597.5 L90.0 597.7 L90.5 597.4 L90.9 598.4 L91.4 597.0 L91.9 597.3 L92.4 597.5 L92.8 597.4 L93.3 597.7 L93.8 597.0 L94.3 596.7 L94.8 598.9 L95.2 598.3 L95.7 597.9 L96.2 597.9 L96.7 598.5 L97.2 598.1 L97.6 597.8 L98.1 597.0 L98.6 597.1 L99.1 598.7 L99.6 597.2 L100.0 598.5 L100.5 597.3 L101.0 597.7 L101.5 596.8 L101.9 598.2 L102.4 598.5 L102.9 598.5 L103.4 598.9 L103.9 598.7 L104.3 597.9 L104.8 598.1 L105.3 596.7 L105.8 598.4 L106.3 596.6 L106.7 597.6 L107.2 597.8 L107.7 597.7 L108.2 597.3 L108.7 597.3 L109.1 597.9 L109.6 597.7 L110.1 597.8 L110.6 598.3 L111.1 598.2 L111.5 597.4 L112.0 596.1 L112.5 596.9 L113.0 598.0 L113.4 597.8 L113.9 597.7 L114.4 596.5 L114.9 598.8 L115.4 598.4 L115.8 598.5 L116.3 597.9 L116.8 597.6 L117.3 598.3 L117.8 598.7 L118.2 598.9 L118.7 599.3 L119.2 599.2 L119.7 598.7 L120.2 598.6 L120.6 597.1 L121.1 598.4 L121.6 598.6 L122.1 598.9 L122.5 598.3 L123.0 598.3 L123.5 598.5 L124.0 597.2 L124.5 596.3 L124.9 597.9 L125.4 597.1 L125.9 598.2 L126.4 598.5 L126.9 598.3 L127.3 598.4 L127.8 596.9 L128.3 598.2 L128.8 596.2 L129.3 598.0 L129.7 598.4 L130.2 598.5 L130.7 598.2 L131.2 598.5 L131.7 597.2 L132.1 598.2 L132.6 598.0 L133.1 596.1 L133.6 596.6 L134.0 597.1 L134.5 598.5 L135.0 598.1 L135.5 598.1 L136.0 597.5 L136.4 595.5 L136.9 595.7 L137.4 597.8 L137.9 597.7 L138.4 597.4 L138.8 597.9 L139.3 597.6 L139.8 597.6 L140.3 596.9 L140.8 597.0 L141.2 597.6 L141.7 597.4 L142.2 597.5 L142.7 597.2 L143.1 596.9 L143.6 597.1 L144.1 597.2 L144.6 598.4 L145.1 598.4 L145.5 597.3 L146.0 598.2 L146.5 596.8 L147.0 598.2 L147.5 596.8 L147.9 598.2 L148.4 598.2 L148.9 597.1 L149.4 597.9 L149.9 596.3 L150.3 596.3 L150.8 595.4 L151.3 595.3 L151.8 596.0 L152.3 596.8 L152.7 596.7 L153.2 596.8 L153.7 595.0 L154.2 597.7 L154.6 597.7 L155.1 597.7 L155.6 596.6 L156.1 598.1 L156.6 597.7 L157.0 598.1 L157.5 597.4 L158.0 596.2 L158.5 597.7 L159.0 598.2 L159.4 598.4 L159.9 598.2 L160.4 598.0 L160.9 598.3 L161.4 598.8 L161.8 596.5 L162.3 598.9 L162.8 598.6 L163.3 597.8 L163.7 598.8 L164.2 598.4 L164.7 598.1 L165.2 598.4 L165.7 598.5 L166.1 598.1 L166.6 597.7 L167.1 597.8 L167.6 597.1 L168.1 598.2 L168.5 596.3 L169.0 598.1 L169.5 596.9 L170.0 596.5 L170.5 598.1 L170.9 597.9 L171.4 598.3 L171.9 597.5 L172.4 597.9 L172.9 598.4 L173.3 598.5 L173.8 597.1 L174.3 598.1 L174.8 598.4 L175.2 598.6 L175.7 598.0 L176.2 598.0 L176.7 597.8 L177.2 597.9 L177.6 597.7 L178.1 598.0 L178.6 598.1 L179.1 598.1 L179.6 598.6 L180.0 598.7 L180.5 597.3 L181.0 598.2 L181.5 598.3 L182.0 598.7 L182.4 598.2 L182.9 597.1 L183.4 598.6 L183.9 597.6 L184.3 596.8 L184.8 598.1 L185.3 598.7 L185.8 598.2 L186.3 598.7 L186.7 598.5 L187.2 596.6 L187.7 598.8 L188.2 598.6 L188.7 598.8 L189.1 599.0 L189.6 598.6 L190.1 599.3 L190.6 598.8 L191.1 597.9 L191.5 599.1 L192.0 599.4 L192.5 599.0 L193.0 598.4 L193.5 597.6 L193.9 599.0 L194.4 597.9 L194.9 599.1 L195.4 597.8 L195.8 596.5 L196.3 597.9 L196.8 597.6 L197.3 598.0 L197.8 598.5 L198.2 598.0 L198.7 598.9 L199.2 598.3 L199.7 596.5 L200.2 598.2 L200.6 597.6 L201.1 598.3 L201.6 597.8 L202.1 598.3 L202.6 597.4 L203.0 598.2 L203.5 596.7 L204.0 598.4 L204.5 597.9 L204.9 598.4 L205.4 598.5 L205.9 596.3 L206.4 599.0 L206.9 598.2 L207.3 599.0 L207.8 597.6 L208.3 598.5 L208.8 597.4 L209.3 599.0 L209.7 597.9 L210.2 598.9 L210.7 597.4 L211.2 597.6 L211.7 599.2 L212.1 598.8 L212.6 599.5 L213.1 598.7 L213.6 599.3 L214.1 599.0 L214.5 598.4 L215.0 598.6 L215.5 598.3 L216.0 598.2 L216.4 598.6 L216.9 597.5 L217.4 598.4 L217.9 598.1 L218.4 598.3 L218.8 598.6 L219.3 598.0 L219.8 598.6 L220.3 598.7 L220.8 597.3 L221.2 598.9 L221.7 597.7 L222.2 598.7 L222.7 597.8 L223.2 598.5 L223.6 598.3 L224.1 598.3 L224.6 598.2 L225.1 595.5 L225.5 597.9 L226.0 597.8 L226.5 597.8 L227.0 597.6 L227.5 597.6 L227.9 596.9 L228.4 596.9 L228.9 597.6 L229.4 595.8 L229.9 597.0 L230.3 597.6 L230.8 596.1 L231.3 594.9 L231.8 596.8 L232.3 595.4 L232.7 597.5 L233.2 597.3 L233.7 596.9 L234.2 595.6 L234.7 597.2 L235.1 596.2 L235.6 597.7 L236.1 597.4 L236.6 597.6 L237.0 597.7 L237.5 598.1 L238.0 597.5 L238.5 597.6 L239.0 597.1 L239.4 597.6 L239.9 597.3 L240.4 597.0 L240.9 597.6 L241.4 597.8 L241.8 596.5 L242.3 598.3 L242.8 597.2 L243.3 597.3 L243.8 597.2 L244.2 596.8 L244.7 596.7 L245.2 596.5 L245.7 597.3 L246.1 596.3 L246.6 597.4 L247.1 597.3 L247.6 598.2 L248.1 597.7 L248.5 598.0 L249.0 597.6 L249.5 598.1 L250.0 597.8 L250.5 597.8 L250.9 596.5 L251.4 598.5 L251.9 598.1 L252.4 597.3 L252.9 597.4 L253.3 598.7 L253.8 598.2 L254.3 597.4 L254.8 597.4 L255.3 596.9 L255.7 597.7 L256.2 598.4 L256.7 597.2 L257.2 598.1 L257.6 595.9 L258.1 595.6 L258.6 597.5 L259.1 597.7 L259.6 598.2 L260.0 598.0 L260.5 597.1 L261.0 596.2 L261.5 597.3 L262.0 598.1 L262.4 597.3 L262.9 597.6 L263.4 597.5 L263.9 596.6 L264.4 597.9 L264.8 598.2 L265.3 597.8 L265.8 597.2 L266.3 597.7 L266.7 597.9 L267.2 597.1 L267.7 596.5 L268.2 597.0 L268.7 597.7 L269.1 598.2 L269.6 598.1 L270.1 598.3 L270.6 596.5 L271.1 597.8 L271.5 598.0 L272.0 597.2 L272.5 597.9 L273.0 597.6 L273.5 596.9 L273.9 596.5 L274.4 596.2 L274.9 596.8 L275.4 596.4 L275.9 594.5 L276.3 596.1 L276.8 596.9 L277.3 594.7 L277.8 597.1 L278.2 596.9 L278.7 597.0 L279.2 595.5 L279.7 596.4 L280.2 595.1 L280.6 596.9 L281.1 596.2 L281.6 596.9 L282.1 596.2 L282.6 596.9 L283.0 597.4 L283.5 597.6 L284.0 597.2 L284.5 597.0 L285.0 596.3 L285.4 596.7 L285.9 597.2 L286.4 597.7 L286.9 598.2 L287.3 597.8 L287.8 597.8 L288.3 597.4 L288.8 598.8 L289.3 598.7 L289.7 597.7 L290.2 598.8 L290.7 597.7 L291.2 596.8 L291.7 598.0 L292.1 598.3 L292.6 598.4 L293.1 598.5 L293.6 598.1 L294.1 598.8 L294.5 598.2 L295.0 597.2 L295.5 597.2 L296.0 597.4 L296.5 598.1 L296.9 597.3 L297.4 597.1 L297.9 597.6 L298.4 598.1 L298.8 597.1 L299.3 597.0 L299.8 597.0 L300.3 597.2 L300.8 595.8 L301.2 596.9 L301.7 597.1 L302.2 598.4 L302.7 598.0 L303.2 598.2 L303.6 597.9 L304.1 597.5 L304.6 596.2 L305.1 598.2 L305.6 596.9 L306.0 598.1 L306.5 595.5 L307.0 597.7 L307.5 598.0 L307.9 597.9 L308.4 597.7 L308.9 598.2 L309.4 597.7 L309.9 597.8 L310.3 598.6 L310.8 598.4 L311.3 598.7 L311.8 597.5 L312.3 597.3 L312.7 596.4 L313.2 598.3 L313.7 597.2 L314.2 598.6 L314.7 598.2 L315.1 598.3 L315.6 598.3 L316.1 599.2 L316.6 597.7 L317.1 598.9 L317.5 598.3 L318.0 598.5 L318.5 598.5 L319.0 598.5 L319.4 598.5 L319.9 598.6 L320.4 598.5 L320.9 598.1 L321.4 599.2 L321.8 599.2 L322.3 598.1 L322.8 598.7 L323.3 598.2 L323.8 598.6 L324.2 598.7 L324.7 599.4 L325.2 598.7 L325.7 599.1 L326.2 598.1 L326.6 599.0 L327.1 598.3 L327.6 598.1 L328.1 599.1 L328.6 598.0 L329.0 598.0 L329.5 599.2 L330.0 598.5 L330.5 599.0 L330.9 597.9 L331.4 598.1 L331.9 598.4 L332.4 598.7 L332.9 598.3 L333.3 597.3 L333.8 598.3 L334.3 596.8 L334.8 597.8 L335.3 597.2 L335.7 597.1 L336.2 597.3 L336.7 597.6 L337.2 597.5 L337.7 598.0 L338.1 597.1 L338.6 597.6 L339.1 597.4 L339.6 598.0 L340.0 597.0 L340.5 598.2 L341.0 598.3 L341.5 596.7 L342.0 598.1 L342.4 595.6 L342.9 598.2 L343.4 597.5 L343.9 597.1 L344.4 597.8 L344.8 597.3 L345.3 598.5 L345.8 598.3 L346.3 598.8 L346.8 598.3 L347.2 598.4 L347.7 597.4 L348.2 598.7 L348.7 598.4 L349.2 598.1 L349.6 598.7 L350.1 597.3 L350.6 598.5 L351.1 596.8 L351.5 598.6 L352.0 598.9 L352.5 597.8 L353.0 599.0 L353.5 598.5 L353.9 598.4 L354.4 598.6 L354.9 598.6 L355.4 597.7 L355.9 598.2 L356.3 598.0 L356.8 597.7 L357.3 598.1 L357.8 597.8 L358.3 597.4 L358.7 597.4 L359.2 596.0 L359.7 597.5 L360.2 598.1 L360.6 597.7 L361.1 597.6 L361.6 595.6 L362.1 597.5 L362.6 597.7 L363.0 598.2 L363.5 597.4 L364.0 598.0 L364.5 598.2 L365.0 595.7 L365.4 598.3 L365.9 597.5 L366.4 597.9 L366.9 596.6 L367.4 598.3 L367.8 597.8 L368.3 598.9 L368.8 598.8 L369.3 598.7 L369.8 598.7 L370.2 598.8 L370.7 597.7 L371.2 598.8 L371.7 598.2 L372.1 597.4 L372.6 596.3 L373.1 597.1 L373.6 598.9 L374.1 597.5 L374.5 597.7 L375.0 598.9 L375.5 598.5 L376.0 598.6 L376.5 597.8 L376.9 598.7 L377.4 598.1 L377.9 596.7 L378.4 598.0 L378.9 598.6 L379.3 597.4 L379.8 597.4 L380.3 598.3 L380.8 597.2 L381.2 596.8 L381.7 597.2 L382.2 598.3 L382.7 597.0 L383.2 596.6 L383.6 598.3 L384.1 597.2 L384.6 598.2 L385.1 597.9 L385.6 598.3 L386.0 597.8 L386.5 598.6 L387.0 596.8 L387.5 597.3 L388.0 598.5 L388.4 598.5 L388.9 598.8 L389.4 598.0 L389.9 596.4 L390.4 598.5 L390.8 598.5 L391.3 599.0 L391.8 599.1 L392.3 598.9 L392.7 598.6 L393.2 597.7 L393.7 599.1 L394.2 599.2 L394.7 597.5 L395.1 598.2 L395.6 598.7 L396.1 597.4 L396.6 597.8 L397.1 597.7 L397.5 598.5 L398.0 598.7 L398.5 598.6 L399.0 598.6 L399.5 598.4 L399.9 598.0 L400.4 595.6 L400.9 597.9 L401.4 598.7 L401.8 598.7 L402.3 596.6 L402.8 598.5 L403.3 597.5 L403.8 599.1 L404.2 599.1 L404.7 598.3 L405.2 598.5 L405.7 598.4 L406.2 599.0 L406.6 598.4 L407.1 598.7 L407.6 598.3 L408.1 598.1 L408.6 598.5 L409.0 596.0 L409.5 598.7 L410.0 597.8 L410.5 597.9 L411.0 597.4 L411.4 598.2 L411.9 597.8 L412.4 598.0 L412.9 597.6 L413.3 597.2 L413.8 597.3 L414.3 598.0 L414.8 598.0 L415.3 598.2 L415.7 596.7 L416.2 596.3 L416.7 596.2 L417.2 596.6 L417.7 596.7 L418.1 597.3 L418.6 597.9 L419.1 596.9 L419.6 598.1 L420.1 597.3 L420.5 597.3 L421.0 596.8 L421.5 597.8 L422.0 597.8 L422.4 597.9 L422.9 596.3 L423.4 596.6 L423.9 597.9 L424.4 597.1 L424.8 597.2 L425.3 597.7 L425.8 597.0 L426.3 596.7 L426.8 597.6 L427.2 595.9 L427.7 597.8 L428.2 596.9 L428.7 597.1 L429.2 597.4 L429.6 598.1 L430.1 597.0 L430.6 597.9 L431.1 597.3 L431.6 598.0 L432.0 597.5 L432.5 598.0 L433.0 598.0 L433.5 597.0 L433.9 597.4 L434.4 597.5 L434.9 596.6 L435.4 595.5 L435.9 598.3 L436.3 597.8 L436.8 598.7 L437.3 598.7 L437.8 598.4 L438.3 596.9 L438.7 598.2 L439.2 597.9 L439.7 598.4 L440.2 598.2 L440.7 598.7 L441.1 598.1 L441.6 599.1 L442.1 598.1 L442.6 598.2 L443.0 596.9 L443.5 598.2 L444.0 598.2 L444.5 598.5 L445.0 598.3 L445.4 597.4 L445.9 596.9 L446.4 598.3 L446.9 597.1 L447.4 598.0 L447.8 596.3 L448.3 597.7 L448.8 597.7 L449.3 597.5 L449.8 598.2 L450.2 596.7 L450.7 598.3 L451.2 598.1 L451.7 597.8 L452.2 598.1 L452.6 597.0 L453.1 598.5 L453.6 596.9 L454.1 598.8 L454.5 598.3 L455.0 598.4 L455.5 597.9 L456.0 598.6 L456.5 599.0 L456.9 598.9 L457.4 597.7 L457.9 599.0 L458.4 598.8 L458.9 598.6 L459.3 598.5 L459.8 599.1 L460.3 597.0 L460.8 597.5 L461.3 598.5 L461.7 599.0 L462.2 598.7 L462.7 599.3 L463.2 598.7 L463.6 599.6 L464.1 599.5 L464.6 599.4 L465.1 599.3 L465.6 599.3 L466.0 598.0 L466.5 599.1 L467.0 597.7 L467.5 598.2 L468.0 598.7 L468.4 597.9 L468.9 598.0 L469.4 598.2 L469.9 598.9 L470.4 599.2 L470.8 598.6 L471.3 597.5 L471.8 598.2 L472.3 598.2 L472.8 597.7 L473.2 597.6 L473.7 597.9 L474.2 597.2 L474.7 598.2 L475.1 597.3 L475.6 597.9 L476.1 597.0 L476.6 598.2 L477.1 597.4 L477.5 597.3 L478.0 597.4 L478.5 597.2 L479.0 597.8 L479.5 596.8 L479.9 598.6 L480.4 598.3 L480.9 597.8 L481.4 598.3 L481.9 596.2 L482.3 598.2 L482.8 597.1 L483.3 597.3 L483.8 597.7 L484.2 596.0 L484.7 597.9 L485.2 596.7 L485.7 596.6 L486.2 597.9 L486.6 598.1 L487.1 597.9 L487.6 598.1 L488.1 597.9 L488.6 598.1 L489.0 596.7 L489.5 598.2 L490.0 598.3 L490.5 597.8 L491.0 597.5 L491.4 597.3 L491.9 598.4 L492.4 597.6 L492.9 598.1 L493.4 597.7 L493.8 598.2 L494.3 598.6 L494.8 598.9 L495.3 596.7 L495.7 598.9 L496.2 598.5 L496.7 598.5 L497.2 598.8 L497.7 597.4 L498.1 599.1 L498.6 596.8 L499.1 598.3 L499.6 597.1 L500.1 598.4 L500.5 597.6 L501.0 597.8 L501.5 597.9 L502.0 597.2 L502.5 597.3 L502.9 596.1 L503.4 597.7 L503.9 598.1 L504.4 597.0 L504.8 598.0 L505.3 597.9 L505.8 597.3 L506.3 597.0 L506.8 597.8 L507.2 597.2 L507.7 597.7 L508.2 596.5 L508.7 597.7 L509.2 596.2 L509.6 596.9 L510.1 597.8 L510.6 597.6 L511.1 595.1 L511.6 596.1 L512.0 597.8 L512.5 597.3 L513.0 597.5 L513.5 596.3 L514.0 598.2 L514.4 598.0 L514.9 596.4 L515.4 598.0 L515.9 597.7 L516.3 596.6 L516.8 597.2 L517.3 597.2 L517.8 598.6 L518.3 598.1 L518.7 598.1 L519.2 598.6 L519.7 598.0 L520.2 598.1 L520.7 598.6 L521.1 597.5 L521.6 599.0 L522.1 597.6 L522.6 597.7 L523.1 597.7 L523.5 598.3 L524.0 598.7 L524.5 598.1 L525.0 598.1 L525.4 598.0 L525.9 598.2 L526.4 598.4 L526.9 598.9 L527.4 598.5 L527.8 598.3 L528.3 596.1 L528.8 597.6 L529.3 598.2 L529.8 597.3 L530.2 597.8 L530.7 597.6 L531.2 597.9 L531.7 597.7 L532.2 598.0 L532.6 597.0 L533.1 598.0 L533.6 597.6 L534.1 598.4 L534.6 598.3 L535.0 598.1 L535.5 598.2 L536.0 597.1 L536.5 598.2 L536.9 597.5 L537.4 597.1 L537.9 598.1 L538.4 598.2 L538.9 597.6 L539.3 598.4 L539.8 598.3 L540.3 598.6 L540.8 598.1 L541.3 597.9 L541.7 597.8 L542.2 598.1 L542.7 596.7 L543.2 598.9 L543.7 597.4 L544.1 597.9 L544.6 597.6 L545.1 599.0 L545.6 597.3 L546.0 599.0 L546.5 597.8 L547.0 598.9 L547.5 597.8 L548.0 599.1 L548.4 598.0 L548.9 598.9 L549.4 598.2 L549.9 598.4 L550.4 598.6 L550.8 597.3 L551.3 598.2 L551.8 598.9 L552.3 598.2 L552.8 597.9 L553.2 598.1 L553.7 598.0 L554.2 597.9 L554.7 597.4 L555.2 598.2 L555.6 598.2 L556.1 597.9 L556.6 594.6 L557.1 598.3 L557.5 598.3 L558.0 597.9 L558.5 598.4 L559.0 597.4 L559.5 597.2 L559.9 598.0 L560.4 597.7 L560.9 598.2 L561.4 598.4 L561.9 598.4 L562.3 597.0 L562.8 598.8 L563.3 598.5 L563.8 597.5 L564.3 596.9 L564.7 598.3 L565.2 598.6 L565.7 597.6 L566.2 598.3 L566.6 596.9 L567.1 597.8 L567.6 597.5 L568.1 596.7 L568.6 597.3 L569.0 597.6 L569.5 596.2 L570.0 597.1 L570.5 597.3 L571.0 596.9 L571.4 596.8 L571.9 596.1 L572.4 597.9 L572.9 598.1 L573.4 597.1 L573.8 598.0 L574.3 598.3 L574.8 598.2 L575.3 597.5 L575.8 598.1 L576.2 597.2 L576.7 596.6 L577.2 597.6 L577.7 597.5 L578.1 596.7 L578.6 596.3 L579.1 596.4 L579.6 598.6 L580.1 596.8 L580.5 598.2 L581.0 597.9 L581.5 598.1 L581.5 604.6 Z" fill="#75206a"/><line x1="55" y1="604.3" x2="581.5" y2="604.3" stroke="#6a4a80" stroke-width="1"/><g stroke="rgba(204,204,214,0.22)" stroke-width="1"><line x1="696" y1="492.60" x2="1192.5" y2="492.60"/><line x1="696" y1="520.33" x2="1192.5" y2="520.33"/><line x1="696" y1="548.05" x2="1192.5" y2="548.05"/><line x1="696" y1="575.77" x2="1192.5" y2="575.77"/><line x1="696" y1="603.50" x2="1192.5" y2="603.50"/><line x1="758.50" y1="492.6" x2="758.50" y2="603.5"/><line x1="837.50" y1="492.6" x2="837.50" y2="603.5"/><line x1="915.50" y1="492.6" x2="915.50" y2="603.5"/><line x1="995.00" y1="492.6" x2="995.00" y2="603.5"/><line x1="1073.00" y1="492.6" x2="1073.00" y2="603.5"/><line x1="1152.00" y1="492.6" x2="1152.00" y2="603.5"/></g><path d="M696.0 603.0 L696.0 542.0 L696.7 550.9 L697.4 541.9 L698.1 522.2 L698.8 542.1 L699.6 544.1 L700.3 532.3 L701.0 542.0 L701.7 533.6 L702.4 551.4 L703.1 535.7 L703.8 549.0 L704.5 531.8 L705.2 534.2 L705.9 533.5 L706.7 545.5 L707.4 535.8 L708.1 542.0 L708.8 540.9 L709.5 551.3 L710.2 545.4 L710.9 544.7 L711.6 541.9 L712.3 540.8 L713.0 530.4 L713.8 536.6 L714.5 551.6 L715.2 517.3 L715.9 525.7 L716.6 545.7 L717.3 550.2 L718.0 547.0 L718.7 542.1 L719.4 546.6 L720.2 547.6 L720.9 548.5 L721.6 554.0 L722.3 557.4 L723.0 544.3 L723.7 545.5 L724.4 544.1 L725.1 551.5 L725.8 557.8 L726.5 550.7 L727.3 547.1 L728.0 547.9 L728.7 553.7 L729.4 528.0 L730.1 556.0 L730.8 515.5 L731.5 553.0 L732.2 554.1 L732.9 541.0 L733.6 554.8 L734.4 556.8 L735.1 557.0 L735.8 551.2 L736.5 543.4 L737.2 542.8 L737.9 550.7 L738.6 539.3 L739.3 549.6 L740.0 548.2 L740.7 538.5 L741.5 552.5 L742.2 542.1 L742.9 538.4 L743.6 539.2 L744.3 551.2 L745.0 550.3 L745.7 553.5 L746.4 545.1 L747.1 543.6 L747.9 556.0 L748.6 539.9 L749.3 559.4 L750.0 556.4 L750.7 551.0 L751.4 560.0 L752.1 547.8 L752.8 526.4 L753.5 528.9 L754.2 520.2 L755.0 541.2 L755.7 552.2 L756.4 543.0 L757.1 553.4 L757.8 553.9 L758.5 532.0 L759.2 543.8 L759.9 527.2 L760.6 555.1 L761.3 515.6 L762.1 551.6 L762.8 547.3 L763.5 543.2 L764.2 535.1 L764.9 549.9 L765.6 546.4 L766.3 542.7 L767.0 546.8 L767.7 538.2 L768.5 553.2 L769.2 545.4 L769.9 546.5 L770.6 523.7 L771.3 538.4 L772.0 542.7 L772.7 538.3 L773.4 531.1 L774.1 521.5 L774.8 548.0 L775.6 533.6 L776.3 545.7 L777.0 537.3 L777.7 546.1 L778.4 542.9 L779.1 535.5 L779.8 553.9 L780.5 552.3 L781.2 545.9 L781.9 553.9 L782.7 540.6 L783.4 550.3 L784.1 551.6 L784.8 540.8 L785.5 542.5 L786.2 549.5 L786.9 555.6 L787.6 542.6 L788.3 539.4 L789.0 539.4 L789.8 536.0 L790.5 555.0 L791.2 552.0 L791.9 530.7 L792.6 538.3 L793.3 551.4 L794.0 544.2 L794.7 552.1 L795.4 556.0 L796.2 525.3 L796.9 544.4 L797.6 539.6 L798.3 553.8 L799.0 536.6 L799.7 548.3 L800.4 545.0 L801.1 541.3 L801.8 539.8 L802.5 542.1 L803.3 550.6 L804.0 539.2 L804.7 549.0 L805.4 536.8 L806.1 540.8 L806.8 539.4 L807.5 541.2 L808.2 546.7 L808.9 546.8 L809.6 557.4 L810.4 547.2 L811.1 543.8 L811.8 548.0 L812.5 552.0 L813.2 551.5 L813.9 521.1 L814.6 551.9 L815.3 546.3 L816.0 540.0 L816.8 528.2 L817.5 546.0 L818.2 541.9 L818.9 554.5 L819.6 539.4 L820.3 518.7 L821.0 534.7 L821.7 540.1 L822.4 545.2 L823.1 545.1 L823.9 528.4 L824.6 543.4 L825.3 542.0 L826.0 543.6 L826.7 552.2 L827.4 534.6 L828.1 530.5 L828.8 550.8 L829.5 549.2 L830.2 544.9 L831.0 544.0 L831.7 539.3 L832.4 529.9 L833.1 548.6 L833.8 541.2 L834.5 536.8 L835.2 542.5 L835.9 543.9 L836.6 546.0 L837.3 518.4 L838.1 553.1 L838.8 553.2 L839.5 527.3 L840.2 541.6 L840.9 522.4 L841.6 538.3 L842.3 540.5 L843.0 528.6 L843.7 539.0 L844.5 551.0 L845.2 547.2 L845.9 540.3 L846.6 519.7 L847.3 552.4 L848.0 543.7 L848.7 527.2 L849.4 542.0 L850.1 559.6 L850.8 551.3 L851.6 536.6 L852.3 553.7 L853.0 551.0 L853.7 540.8 L854.4 543.8 L855.1 546.9 L855.8 558.5 L856.5 546.3 L857.2 542.9 L857.9 534.9 L858.7 556.8 L859.4 545.5 L860.1 551.5 L860.8 558.5 L861.5 548.9 L862.2 526.8 L862.9 548.8 L863.6 537.1 L864.3 524.2 L865.1 546.2 L865.8 534.1 L866.5 542.2 L867.2 546.0 L867.9 550.1 L868.6 542.3 L869.3 544.3 L870.0 538.2 L870.7 545.2 L871.4 556.3 L872.2 512.1 L872.9 550.9 L873.6 548.1 L874.3 527.1 L875.0 547.8 L875.7 542.4 L876.4 528.5 L877.1 542.7 L877.8 533.4 L878.5 547.0 L879.3 533.1 L880.0 537.5 L880.7 548.5 L881.4 525.1 L882.1 532.8 L882.8 545.1 L883.5 540.2 L884.2 537.0 L884.9 548.2 L885.7 532.6 L886.4 550.9 L887.1 543.4 L887.8 539.7 L888.5 545.5 L889.2 545.5 L889.9 537.8 L890.6 546.5 L891.3 532.3 L892.0 550.3 L892.8 552.6 L893.5 543.3 L894.2 530.1 L894.9 532.8 L895.6 548.3 L896.3 551.5 L897.0 544.6 L897.7 546.0 L898.4 553.2 L899.1 552.6 L899.9 556.7 L900.6 554.4 L901.3 534.0 L902.0 540.7 L902.7 552.8 L903.4 552.7 L904.1 543.5 L904.8 546.9 L905.5 546.6 L906.2 540.5 L907.0 536.6 L907.7 517.8 L908.4 540.7 L909.1 531.9 L909.8 541.3 L910.5 532.7 L911.2 541.4 L911.9 538.9 L912.6 525.7 L913.4 549.5 L914.1 540.4 L914.8 553.1 L915.5 533.4 L916.2 529.5 L916.9 543.3 L917.6 536.8 L918.3 544.6 L919.0 540.2 L919.7 549.6 L920.5 533.0 L921.2 546.1 L921.9 529.5 L922.6 552.4 L923.3 553.2 L924.0 553.0 L924.7 527.8 L925.4 547.7 L926.1 546.0 L926.8 537.0 L927.6 534.0 L928.3 541.8 L929.0 539.5 L929.7 552.5 L930.4 547.8 L931.1 546.8 L931.8 533.2 L932.5 535.0 L933.2 526.6 L934.0 523.6 L934.7 532.7 L935.4 530.5 L936.1 534.5 L936.8 523.9 L937.5 549.4 L938.2 546.8 L938.9 524.6 L939.6 543.2 L940.3 545.5 L941.1 527.1 L941.8 539.2 L942.5 542.5 L943.2 532.2 L943.9 535.8 L944.6 527.5 L945.3 535.7 L946.0 532.7 L946.7 515.8 L947.4 535.9 L948.2 549.8 L948.9 554.7 L949.6 552.5 L950.3 550.3 L951.0 545.7 L951.7 550.2 L952.4 522.5 L953.1 517.8 L953.8 541.8 L954.5 524.1 L955.3 539.9 L956.0 549.1 L956.7 546.5 L957.4 539.8 L958.1 549.2 L958.8 526.1 L959.5 540.7 L960.2 529.6 L960.9 539.5 L961.7 513.3 L962.4 541.7 L963.1 545.1 L963.8 529.4 L964.5 529.6 L965.2 535.3 L965.9 521.7 L966.6 540.2 L967.3 544.3 L968.0 542.6 L968.8 532.4 L969.5 553.3 L970.2 527.9 L970.9 540.3 L971.6 533.2 L972.3 551.7 L973.0 547.4 L973.7 543.8 L974.4 541.8 L975.1 524.8 L975.9 531.0 L976.6 529.7 L977.3 550.4 L978.0 552.1 L978.7 529.2 L979.4 551.2 L980.1 549.7 L980.8 519.9 L981.5 549.2 L982.3 528.7 L983.0 548.6 L983.7 536.8 L984.4 545.0 L985.1 545.0 L985.8 540.6 L986.5 550.0 L987.2 534.6 L987.9 539.1 L988.6 537.1 L989.4 550.9 L990.1 529.9 L990.8 552.9 L991.5 538.2 L992.2 527.9 L992.9 524.7 L993.6 542.0 L994.3 549.7 L995.0 516.6 L995.7 549.2 L996.5 541.3 L997.2 529.3 L997.9 552.6 L998.6 534.4 L999.3 542.5 L1000.0 539.0 L1000.7 532.8 L1001.4 552.0 L1002.1 529.6 L1002.8 546.1 L1003.6 557.7 L1004.3 546.7 L1005.0 546.5 L1005.7 521.3 L1006.4 559.0 L1007.1 545.0 L1007.8 543.6 L1008.5 546.3 L1009.2 553.2 L1010.0 548.5 L1010.7 527.6 L1011.4 536.5 L1012.1 553.7 L1012.8 534.4 L1013.5 515.2 L1014.2 545.5 L1014.9 533.2 L1015.6 535.8 L1016.3 545.7 L1017.1 543.4 L1017.8 532.4 L1018.5 533.2 L1019.2 520.6 L1019.9 536.5 L1020.6 549.6 L1021.3 539.1 L1022.0 539.8 L1022.7 540.3 L1023.4 539.0 L1024.2 548.5 L1024.9 529.2 L1025.6 525.7 L1026.3 524.7 L1027.0 547.8 L1027.7 535.7 L1028.4 546.7 L1029.1 536.7 L1029.8 526.6 L1030.6 542.1 L1031.3 541.8 L1032.0 545.1 L1032.7 526.6 L1033.4 548.4 L1034.1 549.8 L1034.8 536.5 L1035.5 541.8 L1036.2 549.6 L1036.9 547.3 L1037.7 548.0 L1038.4 541.5 L1039.1 550.3 L1039.8 533.9 L1040.5 549.4 L1041.2 531.4 L1041.9 547.2 L1042.6 530.4 L1043.3 529.7 L1044.0 545.1 L1044.8 532.9 L1045.5 537.8 L1046.2 546.4 L1046.9 540.1 L1047.6 536.2 L1048.3 549.4 L1049.0 537.2 L1049.7 544.7 L1050.4 541.2 L1051.2 547.1 L1051.9 551.5 L1052.6 542.8 L1053.3 554.1 L1054.0 554.5 L1054.7 540.7 L1055.4 549.1 L1056.1 541.0 L1056.8 536.6 L1057.5 535.0 L1058.3 539.1 L1059.0 528.2 L1059.7 548.1 L1060.4 533.6 L1061.1 531.0 L1061.8 550.0 L1062.5 548.8 L1063.2 542.5 L1063.9 553.2 L1064.6 545.4 L1065.4 541.6 L1066.1 555.1 L1066.8 549.0 L1067.5 531.6 L1068.2 550.0 L1068.9 548.2 L1069.6 553.8 L1070.3 537.9 L1071.0 549.2 L1071.7 541.1 L1072.5 531.0 L1073.2 546.8 L1073.9 545.7 L1074.6 556.0 L1075.3 526.8 L1076.0 545.5 L1076.7 560.6 L1077.4 542.7 L1078.1 554.4 L1078.9 546.0 L1079.6 557.1 L1080.3 529.7 L1081.0 536.5 L1081.7 541.9 L1082.4 549.2 L1083.1 535.9 L1083.8 549.8 L1084.5 551.3 L1085.2 539.0 L1086.0 538.7 L1086.7 539.6 L1087.4 529.0 L1088.1 553.3 L1088.8 547.0 L1089.5 530.8 L1090.2 549.3 L1090.9 541.0 L1091.6 553.2 L1092.3 525.8 L1093.1 542.1 L1093.8 527.4 L1094.5 548.3 L1095.2 511.0 L1095.9 546.4 L1096.6 536.0 L1097.3 541.8 L1098.0 534.7 L1098.7 527.3 L1099.5 526.9 L1100.2 548.2 L1100.9 546.5 L1101.6 532.2 L1102.3 544.2 L1103.0 535.4 L1103.7 546.5 L1104.4 511.8 L1105.1 514.1 L1105.8 538.6 L1106.6 543.5 L1107.3 541.1 L1108.0 525.5 L1108.7 551.0 L1109.4 542.1 L1110.1 551.6 L1110.8 533.6 L1111.5 545.2 L1112.2 543.5 L1112.9 542.0 L1113.7 553.6 L1114.4 546.7 L1115.1 547.9 L1115.8 537.6 L1116.5 552.1 L1117.2 549.6 L1117.9 548.7 L1118.6 545.4 L1119.3 551.2 L1120.0 554.4 L1120.8 533.4 L1121.5 547.1 L1122.2 556.4 L1122.9 552.9 L1123.6 547.7 L1124.3 559.3 L1125.0 531.3 L1125.7 556.3 L1126.4 550.6 L1127.2 552.5 L1127.9 549.5 L1128.6 554.4 L1129.3 539.9 L1130.0 538.0 L1130.7 552.5 L1131.4 534.4 L1132.1 552.0 L1132.8 554.2 L1133.5 545.9 L1134.3 547.6 L1135.0 547.7 L1135.7 551.5 L1136.4 553.4 L1137.1 527.6 L1137.8 553.2 L1138.5 548.1 L1139.2 550.9 L1139.9 548.9 L1140.6 549.0 L1141.4 533.5 L1142.1 550.4 L1142.8 541.9 L1143.5 538.4 L1144.2 541.0 L1144.9 556.2 L1145.6 545.0 L1146.3 537.9 L1147.0 552.6 L1147.8 549.4 L1148.5 530.5 L1149.2 550.3 L1149.9 527.2 L1150.6 542.9 L1151.3 547.6 L1152.0 528.9 L1152.7 550.8 L1153.4 525.8 L1154.1 554.0 L1154.9 545.6 L1155.6 545.5 L1156.3 547.3 L1157.0 554.7 L1157.7 532.3 L1158.4 530.6 L1159.1 546.9 L1159.8 518.4 L1160.5 523.2 L1161.2 542.7 L1162.0 549.1 L1162.7 530.8 L1163.4 511.0 L1164.1 542.9 L1164.8 545.7 L1165.5 542.6 L1166.2 528.0 L1166.9 529.1 L1167.6 551.0 L1168.3 556.0 L1169.1 554.6 L1169.8 533.1 L1170.5 555.6 L1171.2 544.7 L1171.9 531.4 L1172.6 553.8 L1173.3 549.0 L1174.0 531.4 L1174.7 544.9 L1175.5 545.4 L1176.2 554.0 L1176.9 540.9 L1177.6 543.9 L1178.3 551.8 L1179.0 554.1 L1179.7 538.4 L1180.4 535.4 L1181.1 547.4 L1181.8 548.7 L1182.6 556.5 L1183.3 540.0 L1184.0 547.4 L1184.7 540.2 L1185.4 532.3 L1186.1 537.1 L1186.8 528.4 L1187.5 545.1 L1188.2 542.4 L1188.9 535.2 L1189.7 536.9 L1190.4 544.1 L1191.1 536.7 L1191.8 548.0 L1192.5 541.6 L1192.5 603.0 Z" fill="#66b0c8"/><path d="M696.0 542.0 L696.7 550.9 L697.4 541.9 L698.1 522.2 L698.8 542.1 L699.6 544.1 L700.3 532.3 L701.0 542.0 L701.7 533.6 L702.4 551.4 L703.1 535.7 L703.8 549.0 L704.5 531.8 L705.2 534.2 L705.9 533.5 L706.7 545.5 L707.4 535.8 L708.1 542.0 L708.8 540.9 L709.5 551.3 L710.2 545.4 L710.9 544.7 L711.6 541.9 L712.3 540.8 L713.0 530.4 L713.8 536.6 L714.5 551.6 L715.2 517.3 L715.9 525.7 L716.6 545.7 L717.3 550.2 L718.0 547.0 L718.7 542.1 L719.4 546.6 L720.2 547.6 L720.9 548.5 L721.6 554.0 L722.3 557.4 L723.0 544.3 L723.7 545.5 L724.4 544.1 L725.1 551.5 L725.8 557.8 L726.5 550.7 L727.3 547.1 L728.0 547.9 L728.7 553.7 L729.4 528.0 L730.1 556.0 L730.8 515.5 L731.5 553.0 L732.2 554.1 L732.9 541.0 L733.6 554.8 L734.4 556.8 L735.1 557.0 L735.8 551.2 L736.5 543.4 L737.2 542.8 L737.9 550.7 L738.6 539.3 L739.3 549.6 L740.0 548.2 L740.7 538.5 L741.5 552.5 L742.2 542.1 L742.9 538.4 L743.6 539.2 L744.3 551.2 L745.0 550.3 L745.7 553.5 L746.4 545.1 L747.1 543.6 L747.9 556.0 L748.6 539.9 L749.3 559.4 L750.0 556.4 L750.7 551.0 L751.4 560.0 L752.1 547.8 L752.8 526.4 L753.5 528.9 L754.2 520.2 L755.0 541.2 L755.7 552.2 L756.4 543.0 L757.1 553.4 L757.8 553.9 L758.5 532.0 L759.2 543.8 L759.9 527.2 L760.6 555.1 L761.3 515.6 L762.1 551.6 L762.8 547.3 L763.5 543.2 L764.2 535.1 L764.9 549.9 L765.6 546.4 L766.3 542.7 L767.0 546.8 L767.7 538.2 L768.5 553.2 L769.2 545.4 L769.9 546.5 L770.6 523.7 L771.3 538.4 L772.0 542.7 L772.7 538.3 L773.4 531.1 L774.1 521.5 L774.8 548.0 L775.6 533.6 L776.3 545.7 L777.0 537.3 L777.7 546.1 L778.4 542.9 L779.1 535.5 L779.8 553.9 L780.5 552.3 L781.2 545.9 L781.9 553.9 L782.7 540.6 L783.4 550.3 L784.1 551.6 L784.8 540.8 L785.5 542.5 L786.2 549.5 L786.9 555.6 L787.6 542.6 L788.3 539.4 L789.0 539.4 L789.8 536.0 L790.5 555.0 L791.2 552.0 L791.9 530.7 L792.6 538.3 L793.3 551.4 L794.0 544.2 L794.7 552.1 L795.4 556.0 L796.2 525.3 L796.9 544.4 L797.6 539.6 L798.3 553.8 L799.0 536.6 L799.7 548.3 L800.4 545.0 L801.1 541.3 L801.8 539.8 L802.5 542.1 L803.3 550.6 L804.0 539.2 L804.7 549.0 L805.4 536.8 L806.1 540.8 L806.8 539.4 L807.5 541.2 L808.2 546.7 L808.9 546.8 L809.6 557.4 L810.4 547.2 L811.1 543.8 L811.8 548.0 L812.5 552.0 L813.2 551.5 L813.9 521.1 L814.6 551.9 L815.3 546.3 L816.0 540.0 L816.8 528.2 L817.5 546.0 L818.2 541.9 L818.9 554.5 L819.6 539.4 L820.3 518.7 L821.0 534.7 L821.7 540.1 L822.4 545.2 L823.1 545.1 L823.9 528.4 L824.6 543.4 L825.3 542.0 L826.0 543.6 L826.7 552.2 L827.4 534.6 L828.1 530.5 L828.8 550.8 L829.5 549.2 L830.2 544.9 L831.0 544.0 L831.7 539.3 L832.4 529.9 L833.1 548.6 L833.8 541.2 L834.5 536.8 L835.2 542.5 L835.9 543.9 L836.6 546.0 L837.3 518.4 L838.1 553.1 L838.8 553.2 L839.5 527.3 L840.2 541.6 L840.9 522.4 L841.6 538.3 L842.3 540.5 L843.0 528.6 L843.7 539.0 L844.5 551.0 L845.2 547.2 L845.9 540.3 L846.6 519.7 L847.3 552.4 L848.0 543.7 L848.7 527.2 L849.4 542.0 L850.1 559.6 L850.8 551.3 L851.6 536.6 L852.3 553.7 L853.0 551.0 L853.7 540.8 L854.4 543.8 L855.1 546.9 L855.8 558.5 L856.5 546.3 L857.2 542.9 L857.9 534.9 L858.7 556.8 L859.4 545.5 L860.1 551.5 L860.8 558.5 L861.5 548.9 L862.2 526.8 L862.9 548.8 L863.6 537.1 L864.3 524.2 L865.1 546.2 L865.8 534.1 L866.5 542.2 L867.2 546.0 L867.9 550.1 L868.6 542.3 L869.3 544.3 L870.0 538.2 L870.7 545.2 L871.4 556.3 L872.2 512.1 L872.9 550.9 L873.6 548.1 L874.3 527.1 L875.0 547.8 L875.7 542.4 L876.4 528.5 L877.1 542.7 L877.8 533.4 L878.5 547.0 L879.3 533.1 L880.0 537.5 L880.7 548.5 L881.4 525.1 L882.1 532.8 L882.8 545.1 L883.5 540.2 L884.2 537.0 L884.9 548.2 L885.7 532.6 L886.4 550.9 L887.1 543.4 L887.8 539.7 L888.5 545.5 L889.2 545.5 L889.9 537.8 L890.6 546.5 L891.3 532.3 L892.0 550.3 L892.8 552.6 L893.5 543.3 L894.2 530.1 L894.9 532.8 L895.6 548.3 L896.3 551.5 L897.0 544.6 L897.7 546.0 L898.4 553.2 L899.1 552.6 L899.9 556.7 L900.6 554.4 L901.3 534.0 L902.0 540.7 L902.7 552.8 L903.4 552.7 L904.1 543.5 L904.8 546.9 L905.5 546.6 L906.2 540.5 L907.0 536.6 L907.7 517.8 L908.4 540.7 L909.1 531.9 L909.8 541.3 L910.5 532.7 L911.2 541.4 L911.9 538.9 L912.6 525.7 L913.4 549.5 L914.1 540.4 L914.8 553.1 L915.5 533.4 L916.2 529.5 L916.9 543.3 L917.6 536.8 L918.3 544.6 L919.0 540.2 L919.7 549.6 L920.5 533.0 L921.2 546.1 L921.9 529.5 L922.6 552.4 L923.3 553.2 L924.0 553.0 L924.7 527.8 L925.4 547.7 L926.1 546.0 L926.8 537.0 L927.6 534.0 L928.3 541.8 L929.0 539.5 L929.7 552.5 L930.4 547.8 L931.1 546.8 L931.8 533.2 L932.5 535.0 L933.2 526.6 L934.0 523.6 L934.7 532.7 L935.4 530.5 L936.1 534.5 L936.8 523.9 L937.5 549.4 L938.2 546.8 L938.9 524.6 L939.6 543.2 L940.3 545.5 L941.1 527.1 L941.8 539.2 L942.5 542.5 L943.2 532.2 L943.9 535.8 L944.6 527.5 L945.3 535.7 L946.0 532.7 L946.7 515.8 L947.4 535.9 L948.2 549.8 L948.9 554.7 L949.6 552.5 L950.3 550.3 L951.0 545.7 L951.7 550.2 L952.4 522.5 L953.1 517.8 L953.8 541.8 L954.5 524.1 L955.3 539.9 L956.0 549.1 L956.7 546.5 L957.4 539.8 L958.1 549.2 L958.8 526.1 L959.5 540.7 L960.2 529.6 L960.9 539.5 L961.7 513.3 L962.4 541.7 L963.1 545.1 L963.8 529.4 L964.5 529.6 L965.2 535.3 L965.9 521.7 L966.6 540.2 L967.3 544.3 L968.0 542.6 L968.8 532.4 L969.5 553.3 L970.2 527.9 L970.9 540.3 L971.6 533.2 L972.3 551.7 L973.0 547.4 L973.7 543.8 L974.4 541.8 L975.1 524.8 L975.9 531.0 L976.6 529.7 L977.3 550.4 L978.0 552.1 L978.7 529.2 L979.4 551.2 L980.1 549.7 L980.8 519.9 L981.5 549.2 L982.3 528.7 L983.0 548.6 L983.7 536.8 L984.4 545.0 L985.1 545.0 L985.8 540.6 L986.5 550.0 L987.2 534.6 L987.9 539.1 L988.6 537.1 L989.4 550.9 L990.1 529.9 L990.8 552.9 L991.5 538.2 L992.2 527.9 L992.9 524.7 L993.6 542.0 L994.3 549.7 L995.0 516.6 L995.7 549.2 L996.5 541.3 L997.2 529.3 L997.9 552.6 L998.6 534.4 L999.3 542.5 L1000.0 539.0 L1000.7 532.8 L1001.4 552.0 L1002.1 529.6 L1002.8 546.1 L1003.6 557.7 L1004.3 546.7 L1005.0 546.5 L1005.7 521.3 L1006.4 559.0 L1007.1 545.0 L1007.8 543.6 L1008.5 546.3 L1009.2 553.2 L1010.0 548.5 L1010.7 527.6 L1011.4 536.5 L1012.1 553.7 L1012.8 534.4 L1013.5 515.2 L1014.2 545.5 L1014.9 533.2 L1015.6 535.8 L1016.3 545.7 L1017.1 543.4 L1017.8 532.4 L1018.5 533.2 L1019.2 520.6 L1019.9 536.5 L1020.6 549.6 L1021.3 539.1 L1022.0 539.8 L1022.7 540.3 L1023.4 539.0 L1024.2 548.5 L1024.9 529.2 L1025.6 525.7 L1026.3 524.7 L1027.0 547.8 L1027.7 535.7 L1028.4 546.7 L1029.1 536.7 L1029.8 526.6 L1030.6 542.1 L1031.3 541.8 L1032.0 545.1 L1032.7 526.6 L1033.4 548.4 L1034.1 549.8 L1034.8 536.5 L1035.5 541.8 L1036.2 549.6 L1036.9 547.3 L1037.7 548.0 L1038.4 541.5 L1039.1 550.3 L1039.8 533.9 L1040.5 549.4 L1041.2 531.4 L1041.9 547.2 L1042.6 530.4 L1043.3 529.7 L1044.0 545.1 L1044.8 532.9 L1045.5 537.8 L1046.2 546.4 L1046.9 540.1 L1047.6 536.2 L1048.3 549.4 L1049.0 537.2 L1049.7 544.7 L1050.4 541.2 L1051.2 547.1 L1051.9 551.5 L1052.6 542.8 L1053.3 554.1 L1054.0 554.5 L1054.7 540.7 L1055.4 549.1 L1056.1 541.0 L1056.8 536.6 L1057.5 535.0 L1058.3 539.1 L1059.0 528.2 L1059.7 548.1 L1060.4 533.6 L1061.1 531.0 L1061.8 550.0 L1062.5 548.8 L1063.2 542.5 L1063.9 553.2 L1064.6 545.4 L1065.4 541.6 L1066.1 555.1 L1066.8 549.0 L1067.5 531.6 L1068.2 550.0 L1068.9 548.2 L1069.6 553.8 L1070.3 537.9 L1071.0 549.2 L1071.7 541.1 L1072.5 531.0 L1073.2 546.8 L1073.9 545.7 L1074.6 556.0 L1075.3 526.8 L1076.0 545.5 L1076.7 560.6 L1077.4 542.7 L1078.1 554.4 L1078.9 546.0 L1079.6 557.1 L1080.3 529.7 L1081.0 536.5 L1081.7 541.9 L1082.4 549.2 L1083.1 535.9 L1083.8 549.8 L1084.5 551.3 L1085.2 539.0 L1086.0 538.7 L1086.7 539.6 L1087.4 529.0 L1088.1 553.3 L1088.8 547.0 L1089.5 530.8 L1090.2 549.3 L1090.9 541.0 L1091.6 553.2 L1092.3 525.8 L1093.1 542.1 L1093.8 527.4 L1094.5 548.3 L1095.2 511.0 L1095.9 546.4 L1096.6 536.0 L1097.3 541.8 L1098.0 534.7 L1098.7 527.3 L1099.5 526.9 L1100.2 548.2 L1100.9 546.5 L1101.6 532.2 L1102.3 544.2 L1103.0 535.4 L1103.7 546.5 L1104.4 511.8 L1105.1 514.1 L1105.8 538.6 L1106.6 543.5 L1107.3 541.1 L1108.0 525.5 L1108.7 551.0 L1109.4 542.1 L1110.1 551.6 L1110.8 533.6 L1111.5 545.2 L1112.2 543.5 L1112.9 542.0 L1113.7 553.6 L1114.4 546.7 L1115.1 547.9 L1115.8 537.6 L1116.5 552.1 L1117.2 549.6 L1117.9 548.7 L1118.6 545.4 L1119.3 551.2 L1120.0 554.4 L1120.8 533.4 L1121.5 547.1 L1122.2 556.4 L1122.9 552.9 L1123.6 547.7 L1124.3 559.3 L1125.0 531.3 L1125.7 556.3 L1126.4 550.6 L1127.2 552.5 L1127.9 549.5 L1128.6 554.4 L1129.3 539.9 L1130.0 538.0 L1130.7 552.5 L1131.4 534.4 L1132.1 552.0 L1132.8 554.2 L1133.5 545.9 L1134.3 547.6 L1135.0 547.7 L1135.7 551.5 L1136.4 553.4 L1137.1 527.6 L1137.8 553.2 L1138.5 548.1 L1139.2 550.9 L1139.9 548.9 L1140.6 549.0 L1141.4 533.5 L1142.1 550.4 L1142.8 541.9 L1143.5 538.4 L1144.2 541.0 L1144.9 556.2 L1145.6 545.0 L1146.3 537.9 L1147.0 552.6 L1147.8 549.4 L1148.5 530.5 L1149.2 550.3 L1149.9 527.2 L1150.6 542.9 L1151.3 547.6 L1152.0 528.9 L1152.7 550.8 L1153.4 525.8 L1154.1 554.0 L1154.9 545.6 L1155.6 545.5 L1156.3 547.3 L1157.0 554.7 L1157.7 532.3 L1158.4 530.6 L1159.1 546.9 L1159.8 518.4 L1160.5 523.2 L1161.2 542.7 L1162.0 549.1 L1162.7 530.8 L1163.4 511.0 L1164.1 542.9 L1164.8 545.7 L1165.5 542.6 L1166.2 528.0 L1166.9 529.1 L1167.6 551.0 L1168.3 556.0 L1169.1 554.6 L1169.8 533.1 L1170.5 555.6 L1171.2 544.7 L1171.9 531.4 L1172.6 553.8 L1173.3 549.0 L1174.0 531.4 L1174.7 544.9 L1175.5 545.4 L1176.2 554.0 L1176.9 540.9 L1177.6 543.9 L1178.3 551.8 L1179.0 554.1 L1179.7 538.4 L1180.4 535.4 L1181.1 547.4 L1181.8 548.7 L1182.6 556.5 L1183.3 540.0 L1184.0 547.4 L1184.7 540.2 L1185.4 532.3 L1186.1 537.1 L1186.8 528.4 L1187.5 545.1 L1188.2 542.4 L1188.9 535.2 L1189.7 536.9 L1190.4 544.1 L1191.1 536.7 L1191.8 548.0 L1192.5 541.6" stroke="#6cb4c8" stroke-width="0.8" fill="none"/><path d="M701.0 540.0 L701.0 551.6 M716.6 543.7 L716.6 557.1 M750.7 549.0 L750.7 565.9 M751.4 558.0 L751.4 560.3 M762.1 549.6 L762.1 551.9 M763.5 541.2 L763.5 552.7 M766.3 540.7 L766.3 554.9 M767.0 544.8 L767.0 561.4 M769.9 544.5 L769.9 564.3 M777.7 544.1 L777.7 566.1 M783.4 548.3 L783.4 568.2 M793.3 549.4 L793.3 569.0 M797.6 537.6 L797.6 565.7 M808.2 544.7 L808.2 557.5 M815.3 544.3 L815.3 569.4 M828.1 528.5 L828.1 567.3 M847.3 550.4 L847.3 552.5 M848.0 541.7 L848.0 567.1 M859.4 543.5 L859.4 561.9 M866.5 540.2 L866.5 557.9 M871.4 554.3 L871.4 565.8 M878.5 545.0 L878.5 560.6 M881.4 523.1 L881.4 550.9 M887.1 541.4 L887.1 550.6 M919.0 538.2 L919.0 565.1 M921.9 527.5 L921.9 563.1 M922.6 550.4 L922.6 555.9 M952.4 520.5 L952.4 557.8 M959.5 538.7 L959.5 560.7 M963.8 527.4 L963.8 569.2 M964.5 527.6 L964.5 559.5 M971.6 531.2 L971.6 558.4 M976.6 527.7 L976.6 566.5 M977.3 548.4 L977.3 554.9 M980.8 517.9 L980.8 556.5 M996.5 539.3 L996.5 568.5 M1011.4 534.5 L1011.4 550.4 M1017.1 541.4 L1017.1 551.6 M1019.2 518.6 L1019.2 555.4 M1035.5 539.8 L1035.5 559.8 M1036.9 545.3 L1036.9 565.0 M1055.4 547.1 L1055.4 560.8 M1070.3 535.9 L1070.3 559.1 M1077.4 540.7 L1077.4 567.4 M1080.3 527.7 L1080.3 565.3 M1082.4 547.2 L1082.4 559.1 M1088.1 551.3 L1088.1 560.1 M1090.9 539.0 L1090.9 550.9 M1098.0 532.7 L1098.0 551.7 M1100.9 544.5 L1100.9 566.6 M1105.8 536.6 L1105.8 556.1 M1109.4 540.1 L1109.4 559.7 M1114.4 544.7 L1114.4 567.2 M1115.1 545.9 L1115.1 567.1 M1115.8 535.6 L1115.8 550.3 M1118.6 543.4 L1118.6 563.0 M1124.3 557.3 L1124.3 560.5 M1127.9 547.5 L1127.9 555.3 M1130.7 550.5 L1130.7 564.3 M1132.8 552.2 L1132.8 564.9 M1143.5 536.4 L1143.5 568.4 M1145.6 543.0 L1145.6 552.9 M1151.3 545.6 L1151.3 564.4 M1177.6 541.9 L1177.6 559.9 M1178.3 549.8 L1178.3 560.5 M1180.4 533.4 L1180.4 554.7" stroke="#141518" stroke-width="1" fill="none"/><path d="M696.0 603.5 L696.0 600.7 L696.5 600.6 L697.0 601.4 L697.5 601.0 L698.0 601.3 L698.5 600.7 L699.0 600.4 L699.5 601.0 L700.0 601.0 L700.5 600.2 L701.0 599.4 L701.5 600.1 L702.0 600.7 L702.5 600.3 L703.0 600.8 L703.5 600.3 L704.0 600.7 L704.4 600.3 L704.9 601.2 L705.4 601.1 L705.9 601.5 L706.4 601.3 L706.9 601.1 L707.4 600.8 L707.9 600.4 L708.4 599.1 L708.9 601.0 L709.4 601.5 L709.9 600.8 L710.4 601.1 L710.9 600.9 L711.4 600.5 L711.9 601.0 L712.4 599.9 L712.9 599.4 L713.4 600.7 L713.9 598.8 L714.4 599.5 L714.9 601.1 L715.4 601.1 L715.9 601.5 L716.4 601.3 L716.9 601.0 L717.4 601.3 L717.9 601.2 L718.4 600.7 L718.9 600.2 L719.4 600.7 L719.9 600.6 L720.4 595.9 L720.8 600.0 L721.3 598.7 L721.8 600.9 L722.3 601.0 L722.8 600.8 L723.3 600.9 L723.8 600.0 L724.3 601.2 L724.8 601.1 L725.3 600.1 L725.8 600.9 L726.3 600.8 L726.8 599.1 L727.3 601.3 L727.8 600.7 L728.3 600.8 L728.8 600.8 L729.3 600.3 L729.8 601.0 L730.3 601.2 L730.8 601.3 L731.3 601.5 L731.8 601.5 L732.3 599.4 L732.8 600.8 L733.3 601.3 L733.8 600.3 L734.3 599.3 L734.8 600.9 L735.3 600.7 L735.8 600.2 L736.3 596.6 L736.8 600.4 L737.3 598.4 L737.7 598.7 L738.2 599.9 L738.7 600.4 L739.2 601.4 L739.7 601.4 L740.2 599.5 L740.7 599.1 L741.2 597.7 L741.7 600.6 L742.2 599.2 L742.7 601.2 L743.2 601.4 L743.7 600.7 L744.2 600.0 L744.7 600.3 L745.2 600.8 L745.7 601.2 L746.2 601.2 L746.7 600.3 L747.2 600.6 L747.7 600.6 L748.2 601.2 L748.7 601.3 L749.2 601.0 L749.7 600.9 L750.2 594.1 L750.7 601.3 L751.2 601.2 L751.7 600.7 L752.2 600.5 L752.7 601.4 L753.2 600.2 L753.7 601.4 L754.1 601.2 L754.6 598.6 L755.1 600.4 L755.6 601.3 L756.1 601.3 L756.6 601.4 L757.1 601.4 L757.6 601.4 L758.1 601.1 L758.6 601.4 L759.1 600.6 L759.6 601.5 L760.1 601.2 L760.6 601.5 L761.1 601.4 L761.6 600.3 L762.1 601.1 L762.6 600.1 L763.1 601.3 L763.6 599.3 L764.1 601.4 L764.6 601.2 L765.1 600.3 L765.6 601.3 L766.1 600.1 L766.6 601.1 L767.1 601.0 L767.6 600.9 L768.1 601.4 L768.6 600.4 L769.1 600.3 L769.6 598.9 L770.1 600.6 L770.5 600.2 L771.0 600.5 L771.5 600.8 L772.0 596.8 L772.5 600.0 L773.0 598.7 L773.5 600.4 L774.0 600.2 L774.5 599.6 L775.0 598.7 L775.5 600.3 L776.0 600.4 L776.5 600.5 L777.0 599.0 L777.5 598.7 L778.0 600.1 L778.5 599.4 L779.0 599.7 L779.5 598.7 L780.0 600.5 L780.5 599.6 L781.0 600.8 L781.5 599.4 L782.0 600.6 L782.5 600.0 L783.0 600.1 L783.5 599.7 L784.0 600.3 L784.5 598.0 L785.0 599.9 L785.5 600.3 L786.0 600.2 L786.5 600.2 L787.0 599.5 L787.4 597.1 L787.9 599.7 L788.4 595.9 L788.9 599.6 L789.4 597.2 L789.9 599.1 L790.4 598.6 L790.9 597.8 L791.4 597.4 L791.9 599.6 L792.4 600.0 L792.9 597.7 L793.4 599.0 L793.9 600.2 L794.4 599.8 L794.9 599.3 L795.4 599.9 L795.9 600.2 L796.4 600.0 L796.9 599.8 L797.4 599.9 L797.9 600.2 L798.4 599.1 L798.9 597.8 L799.4 599.4 L799.9 599.3 L800.4 599.4 L800.9 599.8 L801.4 599.3 L801.9 598.1 L802.4 599.4 L802.9 598.4 L803.4 598.5 L803.8 599.5 L804.3 599.8 L804.8 598.9 L805.3 599.8 L805.8 599.2 L806.3 599.3 L806.8 599.9 L807.3 599.1 L807.8 599.7 L808.3 600.0 L808.8 599.2 L809.3 599.9 L809.8 600.1 L810.3 599.8 L810.8 600.0 L811.3 599.2 L811.8 597.5 L812.3 599.8 L812.8 599.7 L813.3 598.6 L813.8 600.3 L814.3 600.7 L814.8 599.9 L815.3 600.5 L815.8 600.9 L816.3 600.3 L816.8 599.0 L817.3 600.9 L817.8 601.0 L818.3 601.2 L818.8 600.8 L819.3 600.5 L819.8 600.9 L820.2 600.7 L820.7 600.6 L821.2 599.4 L821.7 601.0 L822.2 601.5 L822.7 601.1 L823.2 600.9 L823.7 601.4 L824.2 598.3 L824.7 601.1 L825.2 601.0 L825.7 600.8 L826.2 598.1 L826.7 601.0 L827.2 600.5 L827.7 600.3 L828.2 599.6 L828.7 600.4 L829.2 599.1 L829.7 599.8 L830.2 600.1 L830.7 600.3 L831.2 599.9 L831.7 600.5 L832.2 600.4 L832.7 600.8 L833.2 599.9 L833.7 598.9 L834.2 600.6 L834.7 600.8 L835.2 599.6 L835.7 600.9 L836.2 600.6 L836.7 600.2 L837.1 598.7 L837.6 600.9 L838.1 601.0 L838.6 600.2 L839.1 599.2 L839.6 596.4 L840.1 600.0 L840.6 599.4 L841.1 599.8 L841.6 600.9 L842.1 598.4 L842.6 600.5 L843.1 600.3 L843.6 600.4 L844.1 599.8 L844.6 600.7 L845.1 600.5 L845.6 600.4 L846.1 600.0 L846.6 600.4 L847.1 600.7 L847.6 600.4 L848.1 600.2 L848.6 600.7 L849.1 600.3 L849.6 600.2 L850.1 599.6 L850.6 600.5 L851.1 600.0 L851.6 599.8 L852.1 599.7 L852.6 600.7 L853.1 600.7 L853.5 600.3 L854.0 600.5 L854.5 600.7 L855.0 600.4 L855.5 601.3 L856.0 600.9 L856.5 600.9 L857.0 601.1 L857.5 601.3 L858.0 600.1 L858.5 601.2 L859.0 600.6 L859.5 601.0 L860.0 597.4 L860.5 599.3 L861.0 600.6 L861.5 601.1 L862.0 600.2 L862.5 600.6 L863.0 600.0 L863.5 601.2 L864.0 600.2 L864.5 600.3 L865.0 600.8 L865.5 600.3 L866.0 600.3 L866.5 600.7 L867.0 600.2 L867.5 599.9 L868.0 599.5 L868.5 598.0 L869.0 600.0 L869.5 600.1 L869.9 599.7 L870.4 600.3 L870.9 599.2 L871.4 599.6 L871.9 599.9 L872.4 599.8 L872.9 599.0 L873.4 599.8 L873.9 599.4 L874.4 599.8 L874.9 599.5 L875.4 598.0 L875.9 599.7 L876.4 599.9 L876.9 599.5 L877.4 597.7 L877.9 598.6 L878.4 598.2 L878.9 599.7 L879.4 598.0 L879.9 600.2 L880.4 598.2 L880.9 599.6 L881.4 599.3 L881.9 599.2 L882.4 600.1 L882.9 600.0 L883.4 600.0 L883.9 600.1 L884.4 600.5 L884.9 599.1 L885.4 600.2 L885.9 600.3 L886.3 600.4 L886.8 600.6 L887.3 600.4 L887.8 600.6 L888.3 600.5 L888.8 600.7 L889.3 600.8 L889.8 594.1 L890.3 600.2 L890.8 600.6 L891.3 598.6 L891.8 599.6 L892.3 598.7 L892.8 600.5 L893.3 599.9 L893.8 600.9 L894.3 601.2 L894.8 599.4 L895.3 598.6 L895.8 600.9 L896.3 600.1 L896.8 600.7 L897.3 601.0 L897.8 601.4 L898.3 600.5 L898.8 601.5 L899.3 601.5 L899.8 601.0 L900.3 600.3 L900.8 598.9 L901.3 600.7 L901.8 599.9 L902.3 600.3 L902.8 600.5 L903.2 599.1 L903.7 600.5 L904.2 601.1 L904.7 600.9 L905.2 601.0 L905.7 601.3 L906.2 601.4 L906.7 600.2 L907.2 601.1 L907.7 601.1 L908.2 600.4 L908.7 598.7 L909.2 601.0 L909.7 601.1 L910.2 601.1 L910.7 601.0 L911.2 600.4 L911.7 600.3 L912.2 600.5 L912.7 600.5 L913.2 599.4 L913.7 599.6 L914.2 600.5 L914.7 601.2 L915.2 600.9 L915.7 599.5 L916.2 599.9 L916.7 600.7 L917.2 599.3 L917.7 600.3 L918.2 599.7 L918.7 600.7 L919.2 600.7 L919.6 600.9 L920.1 601.3 L920.6 600.6 L921.1 600.5 L921.6 598.5 L922.1 597.5 L922.6 600.7 L923.1 600.7 L923.6 600.9 L924.1 600.6 L924.6 597.6 L925.1 598.7 L925.6 601.2 L926.1 600.5 L926.6 601.2 L927.1 600.1 L927.6 600.7 L928.1 600.9 L928.6 600.3 L929.1 600.5 L929.6 601.0 L930.1 600.1 L930.6 600.9 L931.1 601.1 L931.6 600.3 L932.1 601.3 L932.6 601.1 L933.1 600.9 L933.6 600.7 L934.1 600.2 L934.6 600.4 L935.1 601.3 L935.6 600.4 L936.0 599.6 L936.5 599.7 L937.0 600.3 L937.5 600.2 L938.0 600.7 L938.5 600.8 L939.0 599.9 L939.5 599.1 L940.0 599.5 L940.5 600.4 L941.0 600.4 L941.5 600.3 L942.0 600.5 L942.5 600.1 L943.0 600.1 L943.5 599.2 L944.0 600.2 L944.5 600.3 L945.0 599.6 L945.5 600.3 L946.0 599.9 L946.5 600.3 L947.0 600.2 L947.5 599.6 L948.0 600.8 L948.5 599.8 L949.0 599.9 L949.5 600.3 L950.0 600.8 L950.5 600.3 L951.0 600.9 L951.5 599.7 L952.0 600.8 L952.5 599.9 L952.9 600.8 L953.4 598.5 L953.9 600.9 L954.4 600.6 L954.9 600.6 L955.4 599.9 L955.9 600.3 L956.4 600.6 L956.9 599.9 L957.4 595.8 L957.9 600.0 L958.4 599.6 L958.9 601.1 L959.4 599.8 L959.9 600.4 L960.4 601.1 L960.9 600.4 L961.4 601.0 L961.9 601.0 L962.4 599.6 L962.9 599.4 L963.4 601.1 L963.9 600.9 L964.4 600.8 L964.9 600.2 L965.4 601.0 L965.9 601.0 L966.4 600.7 L966.9 601.2 L967.4 601.1 L967.9 600.8 L968.4 601.1 L968.9 600.5 L969.3 599.4 L969.8 600.4 L970.3 600.8 L970.8 600.5 L971.3 601.2 L971.8 600.9 L972.3 600.1 L972.8 601.3 L973.3 601.5 L973.8 601.3 L974.3 601.4 L974.8 601.3 L975.3 600.6 L975.8 601.2 L976.3 600.7 L976.8 601.4 L977.3 598.1 L977.8 600.9 L978.3 600.6 L978.8 600.9 L979.3 600.0 L979.8 599.5 L980.3 601.0 L980.8 600.9 L981.3 600.8 L981.8 600.1 L982.3 600.3 L982.8 601.3 L983.3 601.3 L983.8 600.5 L984.3 600.5 L984.8 601.0 L985.3 598.9 L985.7 599.0 L986.2 600.6 L986.7 600.8 L987.2 599.4 L987.7 600.5 L988.2 599.6 L988.7 601.1 L989.2 600.2 L989.7 600.0 L990.2 600.2 L990.7 600.6 L991.2 600.2 L991.7 600.8 L992.2 597.9 L992.7 599.0 L993.2 596.9 L993.7 599.7 L994.2 600.6 L994.7 597.8 L995.2 600.6 L995.7 601.1 L996.2 598.9 L996.7 599.7 L997.2 600.7 L997.7 600.3 L998.2 601.0 L998.7 601.1 L999.2 598.5 L999.7 596.1 L1000.2 600.9 L1000.7 599.4 L1001.2 598.8 L1001.7 600.7 L1002.2 600.5 L1002.6 600.4 L1003.1 600.5 L1003.6 600.9 L1004.1 598.9 L1004.6 600.2 L1005.1 599.9 L1005.6 599.8 L1006.1 600.3 L1006.6 599.7 L1007.1 599.4 L1007.6 600.5 L1008.1 600.3 L1008.6 598.8 L1009.1 599.8 L1009.6 600.1 L1010.1 599.7 L1010.6 600.7 L1011.1 599.9 L1011.6 600.5 L1012.1 600.8 L1012.6 600.7 L1013.1 600.4 L1013.6 600.4 L1014.1 600.4 L1014.6 599.4 L1015.1 600.5 L1015.6 600.8 L1016.1 600.2 L1016.6 600.3 L1017.1 600.6 L1017.6 600.3 L1018.1 601.0 L1018.6 600.6 L1019.0 599.6 L1019.5 600.1 L1020.0 600.2 L1020.5 599.6 L1021.0 599.7 L1021.5 599.5 L1022.0 599.5 L1022.5 599.8 L1023.0 599.8 L1023.5 599.0 L1024.0 599.0 L1024.5 598.7 L1025.0 599.8 L1025.5 599.7 L1026.0 599.1 L1026.5 600.0 L1027.0 599.2 L1027.5 599.9 L1028.0 599.9 L1028.5 599.3 L1029.0 597.4 L1029.5 600.1 L1030.0 599.4 L1030.5 599.4 L1031.0 600.5 L1031.5 599.6 L1032.0 599.8 L1032.5 600.2 L1033.0 599.0 L1033.5 600.2 L1034.0 600.4 L1034.5 600.1 L1035.0 600.1 L1035.4 598.7 L1035.9 600.0 L1036.4 599.4 L1036.9 599.3 L1037.4 599.5 L1037.9 598.9 L1038.4 600.4 L1038.9 597.5 L1039.4 600.3 L1039.9 600.2 L1040.4 600.3 L1040.9 600.3 L1041.4 599.7 L1041.9 600.5 L1042.4 599.3 L1042.9 600.0 L1043.4 599.6 L1043.9 596.7 L1044.4 597.2 L1044.9 600.6 L1045.4 601.0 L1045.9 601.3 L1046.4 600.7 L1046.9 600.4 L1047.4 599.3 L1047.9 601.3 L1048.4 601.1 L1048.9 600.6 L1049.4 600.1 L1049.9 601.1 L1050.4 600.1 L1050.9 601.4 L1051.4 601.0 L1051.8 599.1 L1052.3 601.1 L1052.8 596.0 L1053.3 597.9 L1053.8 600.8 L1054.3 600.1 L1054.8 598.4 L1055.3 598.5 L1055.8 601.0 L1056.3 599.3 L1056.8 601.1 L1057.3 600.8 L1057.8 599.6 L1058.3 601.5 L1058.8 600.8 L1059.3 598.4 L1059.8 600.2 L1060.3 599.9 L1060.8 600.8 L1061.3 600.8 L1061.8 600.1 L1062.3 600.0 L1062.8 596.9 L1063.3 600.0 L1063.8 599.9 L1064.3 599.1 L1064.8 600.5 L1065.3 600.8 L1065.8 600.5 L1066.3 599.8 L1066.8 600.7 L1067.3 599.6 L1067.8 599.1 L1068.3 600.4 L1068.7 600.7 L1069.2 599.3 L1069.7 599.5 L1070.2 596.1 L1070.7 600.6 L1071.2 600.4 L1071.7 600.3 L1072.2 600.1 L1072.7 598.4 L1073.2 598.1 L1073.7 599.9 L1074.2 600.1 L1074.7 598.2 L1075.2 599.4 L1075.7 599.3 L1076.2 599.1 L1076.7 599.4 L1077.2 599.2 L1077.7 599.0 L1078.2 595.7 L1078.7 598.9 L1079.2 598.5 L1079.7 599.0 L1080.2 598.9 L1080.7 598.4 L1081.2 597.8 L1081.7 599.2 L1082.2 598.8 L1082.7 597.6 L1083.2 599.1 L1083.7 599.2 L1084.2 598.7 L1084.7 598.6 L1085.1 599.3 L1085.6 597.6 L1086.1 599.4 L1086.6 598.1 L1087.1 598.0 L1087.6 599.2 L1088.1 598.2 L1088.6 597.8 L1089.1 594.1 L1089.6 599.7 L1090.1 599.4 L1090.6 599.5 L1091.1 599.1 L1091.6 599.0 L1092.1 599.4 L1092.6 599.6 L1093.1 597.4 L1093.6 599.4 L1094.1 599.7 L1094.6 597.9 L1095.1 598.4 L1095.6 598.9 L1096.1 599.2 L1096.6 598.3 L1097.1 599.8 L1097.6 599.7 L1098.1 599.8 L1098.6 599.7 L1099.1 600.1 L1099.6 599.4 L1100.1 598.6 L1100.6 598.1 L1101.1 599.1 L1101.5 599.8 L1102.0 599.6 L1102.5 599.7 L1103.0 600.0 L1103.5 597.1 L1104.0 598.1 L1104.5 597.5 L1105.0 599.7 L1105.5 599.1 L1106.0 599.5 L1106.5 599.9 L1107.0 599.7 L1107.5 599.8 L1108.0 595.8 L1108.5 598.6 L1109.0 598.8 L1109.5 598.9 L1110.0 599.4 L1110.5 599.5 L1111.0 599.9 L1111.5 600.0 L1112.0 599.7 L1112.5 600.6 L1113.0 601.0 L1113.5 599.1 L1114.0 601.1 L1114.5 601.4 L1115.0 601.2 L1115.5 601.2 L1116.0 600.4 L1116.5 600.7 L1117.0 601.3 L1117.5 600.3 L1118.0 599.3 L1118.4 600.2 L1118.9 600.9 L1119.4 600.1 L1119.9 600.7 L1120.4 599.0 L1120.9 599.7 L1121.4 600.3 L1121.9 600.2 L1122.4 599.3 L1122.9 595.9 L1123.4 598.9 L1123.9 599.4 L1124.4 599.7 L1124.9 599.3 L1125.4 599.4 L1125.9 599.9 L1126.4 600.4 L1126.9 598.9 L1127.4 599.8 L1127.9 600.2 L1128.4 599.2 L1128.9 600.3 L1129.4 599.3 L1129.9 598.0 L1130.4 600.1 L1130.9 600.2 L1131.4 599.9 L1131.9 599.6 L1132.4 598.0 L1132.9 598.9 L1133.4 596.5 L1133.9 599.3 L1134.4 600.3 L1134.8 599.6 L1135.3 599.9 L1135.8 599.2 L1136.3 600.3 L1136.8 600.6 L1137.3 599.0 L1137.8 599.7 L1138.3 599.1 L1138.8 600.6 L1139.3 599.3 L1139.8 600.0 L1140.3 598.5 L1140.8 599.6 L1141.3 600.5 L1141.8 600.7 L1142.3 598.6 L1142.8 599.9 L1143.3 600.1 L1143.8 598.9 L1144.3 599.6 L1144.8 600.2 L1145.3 600.2 L1145.8 600.4 L1146.3 600.4 L1146.8 599.4 L1147.3 600.3 L1147.8 600.5 L1148.3 600.0 L1148.8 600.2 L1149.3 600.0 L1149.8 600.6 L1150.3 600.2 L1150.8 600.3 L1151.2 599.5 L1151.7 600.3 L1152.2 600.0 L1152.7 599.8 L1153.2 600.4 L1153.7 600.0 L1154.2 599.8 L1154.7 601.2 L1155.2 600.4 L1155.7 601.4 L1156.2 601.2 L1156.7 600.8 L1157.2 600.7 L1157.7 600.3 L1158.2 601.3 L1158.7 595.9 L1159.2 598.3 L1159.7 596.5 L1160.2 601.0 L1160.7 600.8 L1161.2 600.1 L1161.7 601.4 L1162.2 601.3 L1162.7 601.3 L1163.2 601.4 L1163.7 601.4 L1164.2 600.8 L1164.7 600.8 L1165.2 601.2 L1165.7 600.6 L1166.2 598.3 L1166.7 601.4 L1167.2 601.2 L1167.7 600.3 L1168.1 598.6 L1168.6 600.3 L1169.1 600.9 L1169.6 601.3 L1170.1 600.3 L1170.6 600.4 L1171.1 601.1 L1171.6 599.1 L1172.1 595.0 L1172.6 598.2 L1173.1 601.0 L1173.6 601.0 L1174.1 601.3 L1174.6 601.0 L1175.1 601.1 L1175.6 598.7 L1176.1 600.6 L1176.6 600.1 L1177.1 601.1 L1177.6 600.0 L1178.1 601.1 L1178.6 600.6 L1179.1 600.7 L1179.6 598.2 L1180.1 600.8 L1180.6 600.1 L1181.1 600.4 L1181.6 600.7 L1182.1 599.1 L1182.6 599.6 L1183.1 599.6 L1183.6 599.9 L1184.1 599.0 L1184.5 599.9 L1185.0 600.9 L1185.5 599.7 L1186.0 601.0 L1186.5 599.9 L1187.0 597.4 L1187.5 600.7 L1188.0 600.5 L1188.5 600.3 L1189.0 600.9 L1189.5 600.9 L1190.0 599.5 L1190.5 601.0 L1191.0 599.6 L1191.5 600.9 L1192.0 600.1 L1192.5 601.1 L1192.5 603.5 Z" fill="#17181a"/><line x1="696" y1="603.6" x2="1192.5" y2="603.6" stroke="#a07aa0" stroke-width="1"/><line x1="696" y1="604.6" x2="1192.5" y2="604.6" stroke="#6c4c90" stroke-width="1"/><line x1="696" y1="605.5" x2="1192.5" y2="605.5" stroke="#4a3e3c" stroke-width="1"/><g stroke="rgba(204,204,214,0.22)" stroke-width="1"><line x1="1296.5" y1="492.50" x2="1801.5" y2="492.50"/><line x1="1296.5" y1="538.40" x2="1801.5" y2="538.40"/><line x1="1296.5" y1="584.30" x2="1801.5" y2="584.30"/><line x1="1296.5" y1="630.20" x2="1801.5" y2="630.20"/><line x1="1296.5" y1="676.10" x2="1801.5" y2="676.10"/><line x1="1359.50" y1="492.5" x2="1359.50" y2="676.1"/><line x1="1440.00" y1="492.5" x2="1440.00" y2="676.1"/><line x1="1520.00" y1="492.5" x2="1520.00" y2="676.1"/><line x1="1600.00" y1="492.5" x2="1600.00" y2="676.1"/><line x1="1680.50" y1="492.5" x2="1680.50" y2="676.1"/><line x1="1759.50" y1="492.5" x2="1759.50" y2="676.1"/></g><g stroke="rgba(204,204,214,0.22)" stroke-width="1"><line x1="64" y1="785.50" x2="581.5" y2="785.50"/><line x1="64" y1="839.17" x2="581.5" y2="839.17"/><line x1="64" y1="892.83" x2="581.5" y2="892.83"/><line x1="64" y1="946.50" x2="581.5" y2="946.50"/><line x1="129.50" y1="785.5" x2="129.50" y2="946.5"/><line x1="211.00" y1="785.5" x2="211.00" y2="946.5"/><line x1="293.50" y1="785.5" x2="293.50" y2="946.5"/><line x1="375.00" y1="785.5" x2="375.00" y2="946.5"/><line x1="457.50" y1="785.5" x2="457.50" y2="946.5"/><line x1="539.00" y1="785.5" x2="539.00" y2="946.5"/></g><path d="M64 946.3 L64.5 946.3 L65.0 839.3 L65.4 839.3 L65.9 946.3 L93.0 946.3 L93.5 839.3 L93.9 839.3 L94.4 946.3 L98.7 946.3 L99.2 839.3 L99.6 839.3 L100.1 946.3 L150.7 946.3 L151.2 839.3 L151.6 839.3 L152.1 946.3 L167.5 946.3 L168.0 839.3 L168.4 839.3 L168.9 946.3 L202.1 946.3 L202.6 839.3 L203.0 839.3 L203.5 946.3 L328.3 946.3 L328.8 839.3 L329.2 839.3 L329.7 946.3 L362.8 946.3 L363.3 839.3 L363.7 839.3 L364.2 946.3 L373.9 946.3 L374.4 839.3 L374.8 839.3 L375.3 946.3 L380.3 946.3 L380.8 839.3 L381.2 839.3 L381.7 946.3 L557.9 946.3 L558.4 839.3 L558.8 839.3 L559.3 946.3 L581.5 946.3" stroke="#eab839" stroke-width="1.7" fill="none" stroke-linejoin="miter"/><g stroke="rgba(204,204,214,0.22)" stroke-width="1"><line x1="679.5" y1="785.50" x2="1192.5" y2="785.50"/><line x1="679.5" y1="813.12" x2="1192.5" y2="813.12"/><line x1="679.5" y1="840.75" x2="1192.5" y2="840.75"/><line x1="679.5" y1="868.38" x2="1192.5" y2="868.38"/><line x1="679.5" y1="896.00" x2="1192.5" y2="896.00"/><line x1="744.50" y1="785.5" x2="744.50" y2="896"/><line x1="825.50" y1="785.5" x2="825.50" y2="896"/><line x1="907.00" y1="785.5" x2="907.00" y2="896"/><line x1="988.50" y1="785.5" x2="988.50" y2="896"/><line x1="1069.50" y1="785.5" x2="1069.50" y2="896"/><line x1="1151.00" y1="785.5" x2="1151.00" y2="896"/></g><path d="M679.5 895.5 L679.5 827.6 L680.2 843.3 L681.0 830.1 L681.7 828.3 L682.4 827.0 L683.2 793.0 L683.9 818.0 L684.6 835.0 L685.4 805.8 L686.1 820.6 L686.8 833.5 L687.6 821.0 L688.3 834.8 L689.0 828.1 L689.8 834.7 L690.5 837.7 L691.2 816.4 L692.0 842.8 L692.7 830.5 L693.4 818.3 L694.2 825.4 L694.9 823.4 L695.6 824.9 L696.4 813.3 L697.1 825.9 L697.8 835.0 L698.6 820.4 L699.3 833.7 L700.0 841.1 L700.8 835.9 L701.5 830.6 L702.3 824.9 L703.0 832.5 L703.7 837.9 L704.5 843.6 L705.2 824.2 L705.9 844.5 L706.7 838.0 L707.4 850.2 L708.1 843.5 L708.9 838.9 L709.6 818.1 L710.3 845.3 L711.1 846.3 L711.8 847.3 L712.5 832.6 L713.3 830.9 L714.0 836.6 L714.7 850.2 L715.5 835.7 L716.2 828.4 L716.9 837.4 L717.7 842.3 L718.4 837.0 L719.1 816.2 L719.9 844.9 L720.6 832.1 L721.3 834.6 L722.1 826.6 L722.8 838.1 L723.5 810.1 L724.3 822.5 L725.0 849.0 L725.7 848.3 L726.5 827.3 L727.2 830.5 L727.9 842.3 L728.7 828.7 L729.4 840.3 L730.1 823.9 L730.9 849.0 L731.6 828.3 L732.3 832.7 L733.1 839.8 L733.8 794.0 L734.5 846.2 L735.3 840.7 L736.0 834.8 L736.7 812.9 L737.5 846.8 L738.2 839.1 L738.9 821.5 L739.7 847.9 L740.4 840.0 L741.1 840.0 L741.9 840.4 L742.6 820.3 L743.3 834.1 L744.1 819.4 L744.8 824.2 L745.6 846.4 L746.3 820.0 L747.0 843.6 L747.8 837.3 L748.5 845.2 L749.2 826.3 L750.0 835.0 L750.7 824.7 L751.4 840.3 L752.2 849.7 L752.9 832.8 L753.6 829.9 L754.4 839.6 L755.1 846.8 L755.8 837.0 L756.6 837.2 L757.3 826.2 L758.0 818.4 L758.8 841.4 L759.5 829.7 L760.2 839.3 L761.0 824.8 L761.7 840.2 L762.4 828.8 L763.2 829.5 L763.9 814.2 L764.6 792.7 L765.4 845.0 L766.1 832.4 L766.8 836.1 L767.6 837.2 L768.3 848.7 L769.0 830.1 L769.8 836.5 L770.5 838.6 L771.2 849.4 L772.0 844.9 L772.7 824.9 L773.4 838.4 L774.2 828.4 L774.9 815.2 L775.6 841.2 L776.4 807.7 L777.1 830.0 L777.8 792.7 L778.6 800.1 L779.3 819.4 L780.0 833.4 L780.8 817.4 L781.5 827.7 L782.2 840.3 L783.0 832.7 L783.7 842.0 L784.4 839.0 L785.2 826.7 L785.9 829.3 L786.7 833.7 L787.4 792.7 L788.1 833.7 L788.9 835.9 L789.6 846.7 L790.3 819.0 L791.1 843.5 L791.8 820.4 L792.5 837.6 L793.3 815.4 L794.0 838.7 L794.7 844.5 L795.5 834.6 L796.2 829.2 L796.9 841.8 L797.7 848.3 L798.4 850.2 L799.1 847.5 L799.9 831.0 L800.6 846.6 L801.3 826.9 L802.1 829.0 L802.8 824.5 L803.5 826.8 L804.3 844.7 L805.0 837.9 L805.7 828.9 L806.5 840.1 L807.2 835.0 L807.9 837.1 L808.7 851.6 L809.4 836.9 L810.1 831.7 L810.9 847.6 L811.6 833.1 L812.3 848.2 L813.1 828.6 L813.8 833.3 L814.5 834.9 L815.3 809.4 L816.0 851.6 L816.7 845.8 L817.5 842.9 L818.2 843.0 L818.9 848.9 L819.7 845.7 L820.4 833.2 L821.1 833.3 L821.9 800.6 L822.6 822.3 L823.3 848.1 L824.1 810.9 L824.8 847.4 L825.5 826.4 L826.3 839.6 L827.0 836.7 L827.7 827.7 L828.5 836.6 L829.2 822.8 L830.0 831.2 L830.7 832.0 L831.4 836.5 L832.2 842.7 L832.9 831.9 L833.6 831.8 L834.4 834.2 L835.1 813.7 L835.8 842.8 L836.6 843.4 L837.3 819.8 L838.0 831.4 L838.8 841.9 L839.5 841.1 L840.2 834.7 L841.0 830.3 L841.7 844.6 L842.4 830.0 L843.2 835.3 L843.9 820.7 L844.6 839.3 L845.4 809.8 L846.1 847.8 L846.8 846.9 L847.6 830.9 L848.3 848.3 L849.0 830.1 L849.8 821.0 L850.5 839.4 L851.2 846.3 L852.0 840.4 L852.7 808.7 L853.4 838.1 L854.2 842.5 L854.9 819.4 L855.6 842.6 L856.4 829.0 L857.1 835.7 L857.8 805.1 L858.6 823.1 L859.3 833.6 L860.0 840.2 L860.8 834.1 L861.5 840.3 L862.2 827.5 L863.0 842.1 L863.7 823.3 L864.4 844.1 L865.2 844.8 L865.9 845.8 L866.6 836.4 L867.4 825.2 L868.1 826.8 L868.8 831.2 L869.6 833.6 L870.3 843.2 L871.0 825.5 L871.8 837.5 L872.5 848.3 L873.3 822.5 L874.0 833.1 L874.7 836.8 L875.5 834.8 L876.2 830.5 L876.9 828.3 L877.7 835.8 L878.4 829.3 L879.1 828.0 L879.9 845.4 L880.6 830.1 L881.3 835.1 L882.1 840.4 L882.8 847.7 L883.5 844.0 L884.3 811.3 L885.0 818.1 L885.7 834.5 L886.5 817.6 L887.2 835.4 L887.9 814.2 L888.7 824.4 L889.4 846.4 L890.1 824.4 L890.9 832.3 L891.6 829.1 L892.3 846.9 L893.1 806.0 L893.8 828.5 L894.5 845.5 L895.3 836.4 L896.0 834.9 L896.7 831.8 L897.5 820.0 L898.2 834.6 L898.9 837.0 L899.7 830.3 L900.4 795.8 L901.1 826.1 L901.9 843.2 L902.6 840.3 L903.3 839.6 L904.1 828.3 L904.8 835.9 L905.5 814.7 L906.3 843.1 L907.0 803.2 L907.7 821.0 L908.5 843.4 L909.2 844.0 L909.9 829.2 L910.7 815.6 L911.4 829.5 L912.1 838.1 L912.9 799.8 L913.6 839.0 L914.3 828.1 L915.1 843.3 L915.8 823.6 L916.6 824.8 L917.3 821.5 L918.0 807.3 L918.8 830.0 L919.5 837.3 L920.2 805.4 L921.0 832.5 L921.7 842.2 L922.4 826.3 L923.2 848.1 L923.9 848.7 L924.6 832.9 L925.4 818.4 L926.1 842.7 L926.8 844.3 L927.6 840.6 L928.3 830.4 L929.0 818.7 L929.8 836.3 L930.5 842.3 L931.2 839.2 L932.0 824.1 L932.7 827.6 L933.4 835.7 L934.2 833.9 L934.9 841.2 L935.6 832.2 L936.4 833.3 L937.1 821.7 L937.8 834.7 L938.6 833.4 L939.3 836.7 L940.0 835.5 L940.8 841.8 L941.5 811.8 L942.2 831.8 L943.0 821.2 L943.7 823.7 L944.4 830.9 L945.2 839.8 L945.9 829.7 L946.6 830.9 L947.4 826.5 L948.1 835.7 L948.8 837.8 L949.6 844.8 L950.3 837.1 L951.0 833.4 L951.8 835.4 L952.5 834.3 L953.2 845.4 L954.0 820.1 L954.7 820.2 L955.4 829.8 L956.2 831.0 L956.9 846.4 L957.7 846.8 L958.4 842.0 L959.1 827.2 L959.9 836.2 L960.6 818.7 L961.3 841.7 L962.1 824.4 L962.8 830.9 L963.5 848.7 L964.3 830.7 L965.0 848.5 L965.7 853.7 L966.5 837.3 L967.2 840.8 L967.9 829.2 L968.7 819.1 L969.4 830.6 L970.1 846.1 L970.9 842.6 L971.6 844.9 L972.3 837.3 L973.1 843.7 L973.8 818.5 L974.5 831.3 L975.3 849.4 L976.0 848.1 L976.7 827.6 L977.5 833.8 L978.2 841.3 L978.9 839.8 L979.7 843.6 L980.4 834.1 L981.1 839.4 L981.9 846.8 L982.6 844.5 L983.3 847.6 L984.1 835.4 L984.8 816.1 L985.5 847.5 L986.3 810.7 L987.0 835.2 L987.7 827.3 L988.5 845.6 L989.2 820.4 L989.9 844.3 L990.7 826.2 L991.4 832.7 L992.1 837.8 L992.9 844.0 L993.6 843.1 L994.3 846.9 L995.1 807.3 L995.8 841.1 L996.5 834.0 L997.3 834.6 L998.0 830.9 L998.7 830.0 L999.5 838.1 L1000.2 838.4 L1001.0 847.6 L1001.7 848.7 L1002.4 823.5 L1003.2 843.9 L1003.9 834.7 L1004.6 843.5 L1005.4 842.4 L1006.1 836.8 L1006.8 826.8 L1007.6 851.8 L1008.3 828.9 L1009.0 848.5 L1009.8 848.9 L1010.5 831.9 L1011.2 825.2 L1012.0 843.3 L1012.7 826.8 L1013.4 843.4 L1014.2 838.6 L1014.9 827.6 L1015.6 842.8 L1016.4 825.9 L1017.1 840.3 L1017.8 842.5 L1018.6 847.5 L1019.3 833.0 L1020.0 830.6 L1020.8 849.2 L1021.5 813.8 L1022.2 829.6 L1023.0 836.8 L1023.7 828.6 L1024.4 839.9 L1025.2 841.7 L1025.9 849.6 L1026.6 838.2 L1027.4 840.8 L1028.1 828.0 L1028.8 843.4 L1029.6 810.8 L1030.3 813.8 L1031.0 840.3 L1031.8 837.3 L1032.5 848.8 L1033.2 813.7 L1034.0 845.6 L1034.7 831.9 L1035.4 838.0 L1036.2 846.8 L1036.9 831.9 L1037.6 840.5 L1038.4 814.7 L1039.1 836.7 L1039.8 841.0 L1040.6 827.3 L1041.3 843.5 L1042.0 837.1 L1042.8 794.1 L1043.5 846.0 L1044.3 826.8 L1045.0 827.8 L1045.7 832.4 L1046.5 847.2 L1047.2 837.6 L1047.9 835.3 L1048.7 826.3 L1049.4 819.2 L1050.1 843.4 L1050.9 837.5 L1051.6 849.9 L1052.3 848.4 L1053.1 833.2 L1053.8 813.4 L1054.5 838.7 L1055.3 826.7 L1056.0 838.3 L1056.7 845.1 L1057.5 840.7 L1058.2 843.5 L1058.9 836.1 L1059.7 844.3 L1060.4 846.3 L1061.1 840.8 L1061.9 844.7 L1062.6 833.9 L1063.3 816.8 L1064.1 827.4 L1064.8 844.0 L1065.5 826.8 L1066.3 847.4 L1067.0 844.0 L1067.7 827.2 L1068.5 840.7 L1069.2 829.0 L1069.9 834.0 L1070.7 835.2 L1071.4 842.5 L1072.1 833.0 L1072.9 841.5 L1073.6 835.1 L1074.3 830.9 L1075.1 829.3 L1075.8 842.1 L1076.5 846.6 L1077.3 843.2 L1078.0 833.9 L1078.7 854.3 L1079.5 836.5 L1080.2 833.5 L1080.9 838.4 L1081.7 851.7 L1082.4 832.1 L1083.1 792.7 L1083.9 825.9 L1084.6 833.8 L1085.3 833.6 L1086.1 826.9 L1086.8 845.7 L1087.6 839.9 L1088.3 836.9 L1089.0 846.1 L1089.8 845.6 L1090.5 817.5 L1091.2 844.3 L1092.0 839.1 L1092.7 842.8 L1093.4 824.6 L1094.2 841.4 L1094.9 840.5 L1095.6 813.0 L1096.4 843.8 L1097.1 846.0 L1097.8 834.8 L1098.6 841.6 L1099.3 837.8 L1100.0 823.2 L1100.8 835.6 L1101.5 825.2 L1102.2 843.1 L1103.0 836.9 L1103.7 798.1 L1104.4 807.2 L1105.2 818.0 L1105.9 844.9 L1106.6 849.8 L1107.4 845.6 L1108.1 848.1 L1108.8 837.0 L1109.6 807.1 L1110.3 845.7 L1111.0 834.1 L1111.8 835.9 L1112.5 852.4 L1113.2 844.8 L1114.0 843.3 L1114.7 852.1 L1115.4 847.0 L1116.2 831.7 L1116.9 838.8 L1117.6 822.7 L1118.4 851.2 L1119.1 826.8 L1119.8 826.9 L1120.6 839.2 L1121.3 815.7 L1122.0 814.0 L1122.8 820.9 L1123.5 842.0 L1124.2 804.9 L1125.0 805.1 L1125.7 844.9 L1126.4 809.2 L1127.2 839.9 L1127.9 824.7 L1128.7 841.5 L1129.4 837.8 L1130.1 827.9 L1130.9 832.0 L1131.6 832.2 L1132.3 819.9 L1133.1 824.2 L1133.8 838.9 L1134.5 822.9 L1135.3 828.7 L1136.0 823.5 L1136.7 828.9 L1137.5 807.3 L1138.2 836.2 L1138.9 840.2 L1139.7 835.0 L1140.4 832.4 L1141.1 827.6 L1141.9 837.0 L1142.6 818.0 L1143.3 828.6 L1144.1 822.6 L1144.8 794.5 L1145.5 828.9 L1146.3 823.2 L1147.0 824.6 L1147.7 823.5 L1148.5 846.2 L1149.2 831.1 L1149.9 846.1 L1150.7 822.6 L1151.4 832.2 L1152.1 830.2 L1152.9 844.2 L1153.6 821.2 L1154.3 820.7 L1155.1 842.5 L1155.8 842.1 L1156.5 819.2 L1157.3 827.1 L1158.0 831.3 L1158.7 826.5 L1159.5 838.9 L1160.2 830.2 L1160.9 829.4 L1161.7 845.8 L1162.4 837.7 L1163.1 840.0 L1163.9 832.1 L1164.6 825.7 L1165.3 828.7 L1166.1 823.1 L1166.8 841.7 L1167.5 819.0 L1168.3 842.7 L1169.0 837.4 L1169.7 839.6 L1170.5 841.2 L1171.2 838.3 L1172.0 844.0 L1172.7 828.0 L1173.4 829.0 L1174.2 846.3 L1174.9 834.2 L1175.6 844.9 L1176.4 829.9 L1177.1 839.3 L1177.8 850.0 L1178.6 846.6 L1179.3 843.0 L1180.0 810.4 L1180.8 813.3 L1181.5 835.9 L1182.2 835.2 L1183.0 838.4 L1183.7 849.7 L1184.4 836.8 L1185.2 841.2 L1185.9 845.2 L1186.6 792.7 L1187.4 807.0 L1188.1 831.6 L1188.8 840.5 L1189.6 834.6 L1190.3 838.4 L1191.0 825.9 L1191.8 830.5 L1192.5 826.1 L1192.5 895.5 Z" fill="#c4200a"/><path d="M679.5 827.6 L680.2 843.3 L681.0 830.1 L681.7 828.3 L682.4 827.0 L683.2 793.0 L683.9 818.0 L684.6 835.0 L685.4 805.8 L686.1 820.6 L686.8 833.5 L687.6 821.0 L688.3 834.8 L689.0 828.1 L689.8 834.7 L690.5 837.7 L691.2 816.4 L692.0 842.8 L692.7 830.5 L693.4 818.3 L694.2 825.4 L694.9 823.4 L695.6 824.9 L696.4 813.3 L697.1 825.9 L697.8 835.0 L698.6 820.4 L699.3 833.7 L700.0 841.1 L700.8 835.9 L701.5 830.6 L702.3 824.9 L703.0 832.5 L703.7 837.9 L704.5 843.6 L705.2 824.2 L705.9 844.5 L706.7 838.0 L707.4 850.2 L708.1 843.5 L708.9 838.9 L709.6 818.1 L710.3 845.3 L711.1 846.3 L711.8 847.3 L712.5 832.6 L713.3 830.9 L714.0 836.6 L714.7 850.2 L715.5 835.7 L716.2 828.4 L716.9 837.4 L717.7 842.3 L718.4 837.0 L719.1 816.2 L719.9 844.9 L720.6 832.1 L721.3 834.6 L722.1 826.6 L722.8 838.1 L723.5 810.1 L724.3 822.5 L725.0 849.0 L725.7 848.3 L726.5 827.3 L727.2 830.5 L727.9 842.3 L728.7 828.7 L729.4 840.3 L730.1 823.9 L730.9 849.0 L731.6 828.3 L732.3 832.7 L733.1 839.8 L733.8 794.0 L734.5 846.2 L735.3 840.7 L736.0 834.8 L736.7 812.9 L737.5 846.8 L738.2 839.1 L738.9 821.5 L739.7 847.9 L740.4 840.0 L741.1 840.0 L741.9 840.4 L742.6 820.3 L743.3 834.1 L744.1 819.4 L744.8 824.2 L745.6 846.4 L746.3 820.0 L747.0 843.6 L747.8 837.3 L748.5 845.2 L749.2 826.3 L750.0 835.0 L750.7 824.7 L751.4 840.3 L752.2 849.7 L752.9 832.8 L753.6 829.9 L754.4 839.6 L755.1 846.8 L755.8 837.0 L756.6 837.2 L757.3 826.2 L758.0 818.4 L758.8 841.4 L759.5 829.7 L760.2 839.3 L761.0 824.8 L761.7 840.2 L762.4 828.8 L763.2 829.5 L763.9 814.2 L764.6 792.7 L765.4 845.0 L766.1 832.4 L766.8 836.1 L767.6 837.2 L768.3 848.7 L769.0 830.1 L769.8 836.5 L770.5 838.6 L771.2 849.4 L772.0 844.9 L772.7 824.9 L773.4 838.4 L774.2 828.4 L774.9 815.2 L775.6 841.2 L776.4 807.7 L777.1 830.0 L777.8 792.7 L778.6 800.1 L779.3 819.4 L780.0 833.4 L780.8 817.4 L781.5 827.7 L782.2 840.3 L783.0 832.7 L783.7 842.0 L784.4 839.0 L785.2 826.7 L785.9 829.3 L786.7 833.7 L787.4 792.7 L788.1 833.7 L788.9 835.9 L789.6 846.7 L790.3 819.0 L791.1 843.5 L791.8 820.4 L792.5 837.6 L793.3 815.4 L794.0 838.7 L794.7 844.5 L795.5 834.6 L796.2 829.2 L796.9 841.8 L797.7 848.3 L798.4 850.2 L799.1 847.5 L799.9 831.0 L800.6 846.6 L801.3 826.9 L802.1 829.0 L802.8 824.5 L803.5 826.8 L804.3 844.7 L805.0 837.9 L805.7 828.9 L806.5 840.1 L807.2 835.0 L807.9 837.1 L808.7 851.6 L809.4 836.9 L810.1 831.7 L810.9 847.6 L811.6 833.1 L812.3 848.2 L813.1 828.6 L813.8 833.3 L814.5 834.9 L815.3 809.4 L816.0 851.6 L816.7 845.8 L817.5 842.9 L818.2 843.0 L818.9 848.9 L819.7 845.7 L820.4 833.2 L821.1 833.3 L821.9 800.6 L822.6 822.3 L823.3 848.1 L824.1 810.9 L824.8 847.4 L825.5 826.4 L826.3 839.6 L827.0 836.7 L827.7 827.7 L828.5 836.6 L829.2 822.8 L830.0 831.2 L830.7 832.0 L831.4 836.5 L832.2 842.7 L832.9 831.9 L833.6 831.8 L834.4 834.2 L835.1 813.7 L835.8 842.8 L836.6 843.4 L837.3 819.8 L838.0 831.4 L838.8 841.9 L839.5 841.1 L840.2 834.7 L841.0 830.3 L841.7 844.6 L842.4 830.0 L843.2 835.3 L843.9 820.7 L844.6 839.3 L845.4 809.8 L846.1 847.8 L846.8 846.9 L847.6 830.9 L848.3 848.3 L849.0 830.1 L849.8 821.0 L850.5 839.4 L851.2 846.3 L852.0 840.4 L852.7 808.7 L853.4 838.1 L854.2 842.5 L854.9 819.4 L855.6 842.6 L856.4 829.0 L857.1 835.7 L857.8 805.1 L858.6 823.1 L859.3 833.6 L860.0 840.2 L860.8 834.1 L861.5 840.3 L862.2 827.5 L863.0 842.1 L863.7 823.3 L864.4 844.1 L865.2 844.8 L865.9 845.8 L866.6 836.4 L867.4 825.2 L868.1 826.8 L868.8 831.2 L869.6 833.6 L870.3 843.2 L871.0 825.5 L871.8 837.5 L872.5 848.3 L873.3 822.5 L874.0 833.1 L874.7 836.8 L875.5 834.8 L876.2 830.5 L876.9 828.3 L877.7 835.8 L878.4 829.3 L879.1 828.0 L879.9 845.4 L880.6 830.1 L881.3 835.1 L882.1 840.4 L882.8 847.7 L883.5 844.0 L884.3 811.3 L885.0 818.1 L885.7 834.5 L886.5 817.6 L887.2 835.4 L887.9 814.2 L888.7 824.4 L889.4 846.4 L890.1 824.4 L890.9 832.3 L891.6 829.1 L892.3 846.9 L893.1 806.0 L893.8 828.5 L894.5 845.5 L895.3 836.4 L896.0 834.9 L896.7 831.8 L897.5 820.0 L898.2 834.6 L898.9 837.0 L899.7 830.3 L900.4 795.8 L901.1 826.1 L901.9 843.2 L902.6 840.3 L903.3 839.6 L904.1 828.3 L904.8 835.9 L905.5 814.7 L906.3 843.1 L907.0 803.2 L907.7 821.0 L908.5 843.4 L909.2 844.0 L909.9 829.2 L910.7 815.6 L911.4 829.5 L912.1 838.1 L912.9 799.8 L913.6 839.0 L914.3 828.1 L915.1 843.3 L915.8 823.6 L916.6 824.8 L917.3 821.5 L918.0 807.3 L918.8 830.0 L919.5 837.3 L920.2 805.4 L921.0 832.5 L921.7 842.2 L922.4 826.3 L923.2 848.1 L923.9 848.7 L924.6 832.9 L925.4 818.4 L926.1 842.7 L926.8 844.3 L927.6 840.6 L928.3 830.4 L929.0 818.7 L929.8 836.3 L930.5 842.3 L931.2 839.2 L932.0 824.1 L932.7 827.6 L933.4 835.7 L934.2 833.9 L934.9 841.2 L935.6 832.2 L936.4 833.3 L937.1 821.7 L937.8 834.7 L938.6 833.4 L939.3 836.7 L940.0 835.5 L940.8 841.8 L941.5 811.8 L942.2 831.8 L943.0 821.2 L943.7 823.7 L944.4 830.9 L945.2 839.8 L945.9 829.7 L946.6 830.9 L947.4 826.5 L948.1 835.7 L948.8 837.8 L949.6 844.8 L950.3 837.1 L951.0 833.4 L951.8 835.4 L952.5 834.3 L953.2 845.4 L954.0 820.1 L954.7 820.2 L955.4 829.8 L956.2 831.0 L956.9 846.4 L957.7 846.8 L958.4 842.0 L959.1 827.2 L959.9 836.2 L960.6 818.7 L961.3 841.7 L962.1 824.4 L962.8 830.9 L963.5 848.7 L964.3 830.7 L965.0 848.5 L965.7 853.7 L966.5 837.3 L967.2 840.8 L967.9 829.2 L968.7 819.1 L969.4 830.6 L970.1 846.1 L970.9 842.6 L971.6 844.9 L972.3 837.3 L973.1 843.7 L973.8 818.5 L974.5 831.3 L975.3 849.4 L976.0 848.1 L976.7 827.6 L977.5 833.8 L978.2 841.3 L978.9 839.8 L979.7 843.6 L980.4 834.1 L981.1 839.4 L981.9 846.8 L982.6 844.5 L983.3 847.6 L984.1 835.4 L984.8 816.1 L985.5 847.5 L986.3 810.7 L987.0 835.2 L987.7 827.3 L988.5 845.6 L989.2 820.4 L989.9 844.3 L990.7 826.2 L991.4 832.7 L992.1 837.8 L992.9 844.0 L993.6 843.1 L994.3 846.9 L995.1 807.3 L995.8 841.1 L996.5 834.0 L997.3 834.6 L998.0 830.9 L998.7 830.0 L999.5 838.1 L1000.2 838.4 L1001.0 847.6 L1001.7 848.7 L1002.4 823.5 L1003.2 843.9 L1003.9 834.7 L1004.6 843.5 L1005.4 842.4 L1006.1 836.8 L1006.8 826.8 L1007.6 851.8 L1008.3 828.9 L1009.0 848.5 L1009.8 848.9 L1010.5 831.9 L1011.2 825.2 L1012.0 843.3 L1012.7 826.8 L1013.4 843.4 L1014.2 838.6 L1014.9 827.6 L1015.6 842.8 L1016.4 825.9 L1017.1 840.3 L1017.8 842.5 L1018.6 847.5 L1019.3 833.0 L1020.0 830.6 L1020.8 849.2 L1021.5 813.8 L1022.2 829.6 L1023.0 836.8 L1023.7 828.6 L1024.4 839.9 L1025.2 841.7 L1025.9 849.6 L1026.6 838.2 L1027.4 840.8 L1028.1 828.0 L1028.8 843.4 L1029.6 810.8 L1030.3 813.8 L1031.0 840.3 L1031.8 837.3 L1032.5 848.8 L1033.2 813.7 L1034.0 845.6 L1034.7 831.9 L1035.4 838.0 L1036.2 846.8 L1036.9 831.9 L1037.6 840.5 L1038.4 814.7 L1039.1 836.7 L1039.8 841.0 L1040.6 827.3 L1041.3 843.5 L1042.0 837.1 L1042.8 794.1 L1043.5 846.0 L1044.3 826.8 L1045.0 827.8 L1045.7 832.4 L1046.5 847.2 L1047.2 837.6 L1047.9 835.3 L1048.7 826.3 L1049.4 819.2 L1050.1 843.4 L1050.9 837.5 L1051.6 849.9 L1052.3 848.4 L1053.1 833.2 L1053.8 813.4 L1054.5 838.7 L1055.3 826.7 L1056.0 838.3 L1056.7 845.1 L1057.5 840.7 L1058.2 843.5 L1058.9 836.1 L1059.7 844.3 L1060.4 846.3 L1061.1 840.8 L1061.9 844.7 L1062.6 833.9 L1063.3 816.8 L1064.1 827.4 L1064.8 844.0 L1065.5 826.8 L1066.3 847.4 L1067.0 844.0 L1067.7 827.2 L1068.5 840.7 L1069.2 829.0 L1069.9 834.0 L1070.7 835.2 L1071.4 842.5 L1072.1 833.0 L1072.9 841.5 L1073.6 835.1 L1074.3 830.9 L1075.1 829.3 L1075.8 842.1 L1076.5 846.6 L1077.3 843.2 L1078.0 833.9 L1078.7 854.3 L1079.5 836.5 L1080.2 833.5 L1080.9 838.4 L1081.7 851.7 L1082.4 832.1 L1083.1 792.7 L1083.9 825.9 L1084.6 833.8 L1085.3 833.6 L1086.1 826.9 L1086.8 845.7 L1087.6 839.9 L1088.3 836.9 L1089.0 846.1 L1089.8 845.6 L1090.5 817.5 L1091.2 844.3 L1092.0 839.1 L1092.7 842.8 L1093.4 824.6 L1094.2 841.4 L1094.9 840.5 L1095.6 813.0 L1096.4 843.8 L1097.1 846.0 L1097.8 834.8 L1098.6 841.6 L1099.3 837.8 L1100.0 823.2 L1100.8 835.6 L1101.5 825.2 L1102.2 843.1 L1103.0 836.9 L1103.7 798.1 L1104.4 807.2 L1105.2 818.0 L1105.9 844.9 L1106.6 849.8 L1107.4 845.6 L1108.1 848.1 L1108.8 837.0 L1109.6 807.1 L1110.3 845.7 L1111.0 834.1 L1111.8 835.9 L1112.5 852.4 L1113.2 844.8 L1114.0 843.3 L1114.7 852.1 L1115.4 847.0 L1116.2 831.7 L1116.9 838.8 L1117.6 822.7 L1118.4 851.2 L1119.1 826.8 L1119.8 826.9 L1120.6 839.2 L1121.3 815.7 L1122.0 814.0 L1122.8 820.9 L1123.5 842.0 L1124.2 804.9 L1125.0 805.1 L1125.7 844.9 L1126.4 809.2 L1127.2 839.9 L1127.9 824.7 L1128.7 841.5 L1129.4 837.8 L1130.1 827.9 L1130.9 832.0 L1131.6 832.2 L1132.3 819.9 L1133.1 824.2 L1133.8 838.9 L1134.5 822.9 L1135.3 828.7 L1136.0 823.5 L1136.7 828.9 L1137.5 807.3 L1138.2 836.2 L1138.9 840.2 L1139.7 835.0 L1140.4 832.4 L1141.1 827.6 L1141.9 837.0 L1142.6 818.0 L1143.3 828.6 L1144.1 822.6 L1144.8 794.5 L1145.5 828.9 L1146.3 823.2 L1147.0 824.6 L1147.7 823.5 L1148.5 846.2 L1149.2 831.1 L1149.9 846.1 L1150.7 822.6 L1151.4 832.2 L1152.1 830.2 L1152.9 844.2 L1153.6 821.2 L1154.3 820.7 L1155.1 842.5 L1155.8 842.1 L1156.5 819.2 L1157.3 827.1 L1158.0 831.3 L1158.7 826.5 L1159.5 838.9 L1160.2 830.2 L1160.9 829.4 L1161.7 845.8 L1162.4 837.7 L1163.1 840.0 L1163.9 832.1 L1164.6 825.7 L1165.3 828.7 L1166.1 823.1 L1166.8 841.7 L1167.5 819.0 L1168.3 842.7 L1169.0 837.4 L1169.7 839.6 L1170.5 841.2 L1171.2 838.3 L1172.0 844.0 L1172.7 828.0 L1173.4 829.0 L1174.2 846.3 L1174.9 834.2 L1175.6 844.9 L1176.4 829.9 L1177.1 839.3 L1177.8 850.0 L1178.6 846.6 L1179.3 843.0 L1180.0 810.4 L1180.8 813.3 L1181.5 835.9 L1182.2 835.2 L1183.0 838.4 L1183.7 849.7 L1184.4 836.8 L1185.2 841.2 L1185.9 845.2 L1186.6 792.7 L1187.4 807.0 L1188.1 831.6 L1188.8 840.5 L1189.6 834.6 L1190.3 838.4 L1191.0 825.9 L1191.8 830.5 L1192.5 826.1" stroke="#c42a10" stroke-width="0.8" fill="none"/><path d="M681.7 826.3 L681.7 852.4 M686.8 831.5 L686.8 855.3 M700.0 839.1 L700.0 853.7 M703.0 830.5 L703.0 855.8 M737.5 844.8 L737.5 850.4 M748.5 843.2 L748.5 853.7 M769.8 834.5 L769.8 859.5 M799.9 829.0 L799.9 847.8 M801.3 824.9 L801.3 860.4 M812.3 846.2 L812.3 849.8 M814.5 832.9 L814.5 846.8 M821.1 831.3 L821.1 850.2 M834.4 832.2 L834.4 845.6 M857.1 833.7 L857.1 854.7 M888.7 822.4 L888.7 853.3 M899.7 828.3 L899.7 843.7 M909.2 842.0 L909.2 860.4 M918.8 828.0 L918.8 854.9 M954.7 818.2 L954.7 847.4 M962.1 822.4 L962.1 847.6 M965.0 846.5 L965.0 847.3 M965.7 851.7 L965.7 858.4 M1023.0 834.8 L1023.0 843.7 M1030.3 811.8 L1030.3 862.2 M1058.2 841.5 L1058.2 858.4 M1059.7 842.3 L1059.7 851.8 M1083.9 823.9 L1083.9 849.1 M1116.2 829.7 L1116.2 848.0 M1130.9 830.0 L1130.9 862.3 M1131.6 830.2 L1131.6 858.3 M1136.7 826.9 L1136.7 861.6 M1146.3 821.2 L1146.3 859.3 M1164.6 823.7 L1164.6 859.9 M1179.3 841.0 L1179.3 843.6 M1189.6 832.6 L1189.6 850.5" stroke="#1a1c20" stroke-width="1" fill="none"/><path d="M679.5 896.0 L679.5 893.3 L680.0 893.8 L680.5 894.3 L681.0 893.2 L681.6 894.1 L682.1 894.5 L682.6 894.2 L683.1 893.8 L683.6 893.6 L684.1 891.5 L684.6 894.6 L685.1 892.7 L685.7 894.3 L686.2 893.0 L686.7 894.2 L687.2 891.8 L687.7 894.2 L688.2 894.1 L688.7 893.9 L689.3 892.5 L689.8 894.3 L690.3 894.1 L690.8 894.0 L691.3 893.6 L691.8 894.2 L692.3 894.1 L692.9 893.9 L693.4 894.3 L693.9 893.8 L694.4 893.7 L694.9 894.0 L695.4 893.9 L695.9 894.0 L696.4 892.8 L697.0 894.0 L697.5 894.0 L698.0 894.0 L698.5 892.3 L699.0 894.3 L699.5 894.2 L700.0 893.8 L700.6 893.7 L701.1 893.5 L701.6 893.8 L702.1 893.8 L702.6 893.6 L703.1 893.4 L703.6 893.9 L704.1 894.0 L704.7 892.3 L705.2 893.8 L705.7 893.5 L706.2 894.0 L706.7 892.6 L707.2 893.3 L707.7 894.1 L708.3 893.5 L708.8 892.5 L709.3 893.6 L709.8 893.3 L710.3 893.2 L710.8 893.4 L711.3 893.4 L711.9 893.3 L712.4 893.1 L712.9 890.8 L713.4 893.4 L713.9 893.7 L714.4 892.9 L714.9 893.4 L715.4 893.2 L716.0 893.6 L716.5 893.2 L717.0 892.9 L717.5 893.9 L718.0 894.0 L718.5 892.8 L719.0 891.6 L719.6 893.0 L720.1 893.8 L720.6 891.2 L721.1 893.3 L721.6 893.2 L722.1 891.9 L722.6 893.1 L723.1 893.1 L723.7 892.8 L724.2 893.2 L724.7 893.1 L725.2 893.3 L725.7 893.1 L726.2 892.9 L726.7 893.1 L727.3 893.2 L727.8 892.1 L728.3 891.3 L728.8 893.5 L729.3 892.4 L729.8 893.1 L730.3 893.5 L730.9 892.6 L731.4 892.5 L731.9 892.5 L732.4 892.5 L732.9 893.2 L733.4 893.1 L733.9 892.1 L734.4 892.9 L735.0 892.2 L735.5 891.7 L736.0 892.4 L736.5 892.3 L737.0 892.7 L737.5 893.1 L738.0 893.1 L738.6 890.8 L739.1 893.0 L739.6 893.0 L740.1 893.5 L740.6 893.8 L741.1 888.9 L741.6 893.8 L742.1 893.2 L742.7 893.6 L743.2 893.3 L743.7 893.9 L744.2 893.5 L744.7 892.8 L745.2 894.0 L745.7 893.4 L746.3 893.5 L746.8 893.6 L747.3 893.8 L747.8 893.7 L748.3 893.5 L748.8 893.0 L749.3 892.7 L749.9 893.3 L750.4 893.0 L750.9 892.5 L751.4 893.0 L751.9 893.5 L752.4 893.5 L752.9 892.9 L753.4 893.2 L754.0 893.0 L754.5 893.4 L755.0 893.7 L755.5 891.0 L756.0 892.4 L756.5 892.0 L757.0 893.3 L757.6 893.1 L758.1 893.2 L758.6 893.4 L759.1 892.1 L759.6 893.5 L760.1 892.4 L760.6 893.9 L761.1 893.0 L761.7 892.0 L762.2 893.6 L762.7 893.6 L763.2 893.0 L763.7 893.2 L764.2 893.6 L764.7 893.3 L765.3 893.0 L765.8 893.3 L766.3 892.5 L766.8 893.7 L767.3 893.6 L767.8 893.3 L768.3 893.2 L768.9 893.2 L769.4 893.3 L769.9 893.7 L770.4 893.1 L770.9 893.6 L771.4 893.5 L771.9 892.1 L772.4 893.8 L773.0 893.9 L773.5 893.8 L774.0 892.7 L774.5 893.6 L775.0 893.5 L775.5 893.2 L776.0 893.4 L776.6 893.6 L777.1 891.7 L777.6 893.2 L778.1 892.7 L778.6 890.9 L779.1 891.9 L779.6 891.4 L780.1 892.2 L780.7 892.4 L781.2 892.2 L781.7 892.8 L782.2 891.5 L782.7 892.4 L783.2 890.9 L783.7 892.6 L784.3 892.7 L784.8 892.9 L785.3 891.8 L785.8 892.5 L786.3 890.1 L786.8 891.9 L787.3 892.5 L787.9 892.8 L788.4 892.8 L788.9 892.7 L789.4 892.6 L789.9 892.7 L790.4 892.9 L790.9 892.8 L791.4 893.2 L792.0 893.1 L792.5 893.0 L793.0 893.3 L793.5 893.4 L794.0 892.5 L794.5 892.9 L795.0 893.0 L795.6 892.5 L796.1 892.6 L796.6 892.8 L797.1 893.3 L797.6 893.3 L798.1 893.3 L798.6 893.6 L799.1 893.6 L799.7 893.4 L800.2 893.1 L800.7 893.5 L801.2 893.3 L801.7 892.8 L802.2 890.8 L802.7 893.6 L803.3 893.9 L803.8 894.0 L804.3 892.6 L804.8 893.4 L805.3 893.7 L805.8 893.8 L806.3 893.9 L806.9 891.0 L807.4 893.8 L807.9 893.6 L808.4 892.3 L808.9 893.7 L809.4 893.0 L809.9 893.5 L810.4 894.2 L811.0 894.2 L811.5 894.2 L812.0 893.6 L812.5 893.6 L813.0 894.1 L813.5 893.9 L814.0 892.4 L814.6 891.7 L815.1 894.2 L815.6 893.8 L816.1 893.7 L816.6 893.5 L817.1 894.4 L817.6 893.8 L818.1 894.6 L818.7 894.3 L819.2 893.0 L819.7 893.3 L820.2 893.0 L820.7 891.9 L821.2 893.6 L821.7 893.5 L822.3 889.1 L822.8 893.3 L823.3 892.4 L823.8 892.5 L824.3 892.6 L824.8 893.1 L825.3 892.6 L825.9 890.2 L826.4 892.6 L826.9 893.1 L827.4 893.0 L827.9 893.1 L828.4 892.5 L828.9 892.5 L829.4 892.0 L830.0 892.1 L830.5 892.9 L831.0 892.9 L831.5 893.0 L832.0 892.7 L832.5 893.1 L833.0 890.8 L833.6 892.3 L834.1 890.8 L834.6 892.6 L835.1 892.8 L835.6 893.0 L836.1 893.2 L836.6 892.2 L837.1 892.8 L837.7 892.7 L838.2 892.4 L838.7 892.9 L839.2 892.8 L839.7 892.0 L840.2 891.9 L840.7 892.4 L841.3 892.8 L841.8 893.3 L842.3 893.2 L842.8 893.4 L843.3 893.7 L843.8 892.5 L844.3 893.6 L844.9 893.7 L845.4 893.6 L845.9 893.7 L846.4 893.5 L846.9 892.6 L847.4 892.3 L847.9 891.8 L848.4 893.2 L849.0 893.4 L849.5 893.2 L850.0 893.5 L850.5 893.4 L851.0 892.4 L851.5 893.5 L852.0 893.6 L852.6 892.8 L853.1 892.7 L853.6 893.3 L854.1 892.8 L854.6 893.1 L855.1 893.1 L855.6 893.2 L856.1 893.4 L856.7 893.3 L857.2 893.4 L857.7 891.9 L858.2 892.8 L858.7 892.0 L859.2 893.2 L859.7 893.0 L860.3 893.5 L860.8 893.5 L861.3 892.9 L861.8 893.2 L862.3 893.7 L862.8 893.8 L863.3 893.6 L863.9 894.2 L864.4 892.7 L864.9 893.8 L865.4 892.8 L865.9 891.2 L866.4 893.1 L866.9 892.7 L867.4 894.1 L868.0 894.0 L868.5 893.1 L869.0 894.1 L869.5 894.3 L870.0 894.2 L870.5 894.2 L871.0 894.3 L871.6 893.7 L872.1 893.7 L872.6 893.8 L873.1 893.4 L873.6 894.2 L874.1 894.1 L874.6 893.7 L875.1 893.7 L875.7 894.2 L876.2 893.7 L876.7 893.9 L877.2 893.1 L877.7 893.6 L878.2 894.0 L878.7 893.1 L879.3 893.6 L879.8 894.3 L880.3 894.0 L880.8 894.3 L881.3 893.2 L881.8 894.2 L882.3 894.3 L882.9 894.3 L883.4 893.1 L883.9 894.1 L884.4 894.3 L884.9 894.1 L885.4 893.9 L885.9 893.9 L886.4 893.6 L887.0 892.2 L887.5 894.1 L888.0 894.2 L888.5 893.8 L889.0 892.9 L889.5 894.1 L890.0 894.2 L890.6 894.2 L891.1 892.7 L891.6 894.3 L892.1 893.8 L892.6 893.1 L893.1 893.9 L893.6 894.3 L894.1 894.3 L894.7 892.9 L895.2 894.0 L895.7 894.3 L896.2 894.3 L896.7 894.2 L897.2 893.9 L897.7 894.0 L898.3 894.3 L898.8 894.0 L899.3 894.1 L899.8 892.9 L900.3 893.8 L900.8 891.4 L901.3 893.9 L901.9 893.1 L902.4 893.5 L902.9 893.7 L903.4 894.3 L903.9 893.3 L904.4 891.7 L904.9 893.8 L905.4 893.1 L906.0 893.0 L906.5 893.6 L907.0 892.8 L907.5 893.5 L908.0 894.3 L908.5 893.3 L909.0 894.2 L909.6 893.7 L910.1 893.7 L910.6 892.9 L911.1 893.0 L911.6 894.1 L912.1 893.9 L912.6 893.7 L913.1 894.0 L913.7 893.8 L914.2 893.8 L914.7 893.9 L915.2 894.0 L915.7 893.4 L916.2 894.2 L916.7 893.5 L917.3 893.7 L917.8 894.1 L918.3 894.1 L918.8 894.0 L919.3 893.0 L919.8 894.0 L920.3 894.1 L920.9 894.1 L921.4 893.8 L921.9 894.1 L922.4 893.9 L922.9 893.5 L923.4 893.6 L923.9 893.7 L924.4 893.9 L925.0 893.7 L925.5 893.9 L926.0 893.2 L926.5 893.0 L927.0 894.1 L927.5 893.6 L928.0 893.9 L928.6 893.8 L929.1 893.0 L929.6 892.1 L930.1 894.0 L930.6 893.1 L931.1 893.5 L931.6 893.3 L932.1 893.5 L932.7 891.8 L933.2 891.7 L933.7 893.3 L934.2 893.4 L934.7 893.2 L935.2 893.6 L935.7 893.4 L936.3 893.9 L936.8 891.4 L937.3 893.8 L937.8 892.9 L938.3 893.9 L938.8 893.1 L939.3 893.9 L939.9 893.5 L940.4 893.3 L940.9 893.5 L941.4 894.2 L941.9 893.8 L942.4 892.9 L942.9 892.8 L943.4 893.7 L944.0 893.6 L944.5 893.8 L945.0 893.2 L945.5 888.9 L946.0 892.2 L946.5 892.6 L947.0 893.7 L947.6 893.7 L948.1 893.5 L948.6 892.7 L949.1 893.7 L949.6 892.9 L950.1 893.8 L950.6 892.0 L951.1 891.0 L951.7 889.6 L952.2 893.6 L952.7 893.1 L953.2 893.5 L953.7 893.1 L954.2 893.2 L954.7 892.8 L955.3 892.4 L955.8 893.4 L956.3 892.5 L956.8 893.5 L957.3 893.2 L957.8 892.9 L958.3 893.0 L958.9 891.9 L959.4 892.9 L959.9 892.3 L960.4 893.2 L960.9 889.3 L961.4 892.8 L961.9 893.3 L962.4 892.2 L963.0 893.4 L963.5 893.5 L964.0 892.1 L964.5 892.6 L965.0 893.8 L965.5 893.2 L966.0 893.6 L966.6 891.4 L967.1 893.6 L967.6 892.6 L968.1 893.7 L968.6 893.0 L969.1 892.7 L969.6 893.6 L970.1 894.0 L970.7 893.9 L971.2 892.6 L971.7 893.8 L972.2 893.9 L972.7 894.3 L973.2 893.7 L973.7 894.2 L974.3 893.7 L974.8 893.5 L975.3 893.8 L975.8 893.5 L976.3 894.3 L976.8 894.3 L977.3 893.9 L977.9 893.7 L978.4 893.7 L978.9 894.0 L979.4 893.7 L979.9 893.4 L980.4 892.8 L980.9 893.3 L981.4 893.3 L982.0 893.8 L982.5 893.4 L983.0 893.2 L983.5 894.0 L984.0 894.0 L984.5 893.4 L985.0 893.7 L985.6 893.4 L986.1 893.7 L986.6 893.4 L987.1 893.6 L987.6 888.9 L988.1 893.8 L988.6 894.1 L989.1 893.8 L989.7 894.2 L990.2 894.1 L990.7 893.8 L991.2 893.3 L991.7 893.2 L992.2 893.9 L992.7 892.8 L993.3 893.0 L993.8 893.4 L994.3 894.3 L994.8 893.9 L995.3 894.0 L995.8 893.7 L996.3 892.7 L996.9 893.9 L997.4 893.7 L997.9 894.2 L998.4 893.9 L998.9 893.1 L999.4 893.3 L999.9 891.7 L1000.4 893.4 L1001.0 892.1 L1001.5 894.0 L1002.0 893.7 L1002.5 893.8 L1003.0 894.0 L1003.5 894.3 L1004.0 894.1 L1004.6 893.9 L1005.1 894.3 L1005.6 893.6 L1006.1 893.5 L1006.6 893.1 L1007.1 893.9 L1007.6 893.7 L1008.1 892.4 L1008.7 892.2 L1009.2 894.1 L1009.7 891.9 L1010.2 893.6 L1010.7 892.6 L1011.2 892.9 L1011.7 892.2 L1012.3 889.9 L1012.8 893.6 L1013.3 892.6 L1013.8 893.6 L1014.3 893.2 L1014.8 892.9 L1015.3 892.7 L1015.9 893.3 L1016.4 893.6 L1016.9 892.2 L1017.4 892.7 L1017.9 893.4 L1018.4 893.3 L1018.9 892.8 L1019.4 892.4 L1020.0 893.5 L1020.5 892.8 L1021.0 893.1 L1021.5 893.0 L1022.0 893.4 L1022.5 893.3 L1023.0 893.2 L1023.6 893.0 L1024.1 892.7 L1024.6 892.9 L1025.1 892.3 L1025.6 891.7 L1026.1 892.0 L1026.6 893.4 L1027.1 893.1 L1027.7 893.3 L1028.2 888.9 L1028.7 890.3 L1029.2 892.2 L1029.7 892.3 L1030.2 892.2 L1030.7 891.5 L1031.3 893.4 L1031.8 892.7 L1032.3 890.4 L1032.8 893.1 L1033.3 892.8 L1033.8 893.2 L1034.3 892.9 L1034.9 893.3 L1035.4 893.2 L1035.9 893.0 L1036.4 892.9 L1036.9 893.5 L1037.4 893.2 L1037.9 892.8 L1038.4 893.5 L1039.0 893.2 L1039.5 892.0 L1040.0 893.4 L1040.5 893.3 L1041.0 893.4 L1041.5 893.3 L1042.0 893.8 L1042.6 893.2 L1043.1 893.9 L1043.6 892.5 L1044.1 893.3 L1044.6 893.2 L1045.1 893.5 L1045.6 893.2 L1046.1 892.3 L1046.7 893.1 L1047.2 892.5 L1047.7 893.6 L1048.2 893.6 L1048.7 892.3 L1049.2 893.3 L1049.7 893.2 L1050.3 892.8 L1050.8 893.3 L1051.3 891.7 L1051.8 893.5 L1052.3 893.7 L1052.8 893.3 L1053.3 893.4 L1053.9 893.0 L1054.4 893.9 L1054.9 892.6 L1055.4 893.3 L1055.9 889.9 L1056.4 894.0 L1056.9 893.7 L1057.4 893.4 L1058.0 894.0 L1058.5 894.2 L1059.0 894.1 L1059.5 894.2 L1060.0 894.2 L1060.5 893.4 L1061.0 892.9 L1061.6 892.6 L1062.1 894.5 L1062.6 892.7 L1063.1 894.2 L1063.6 893.5 L1064.1 894.2 L1064.6 894.2 L1065.1 893.9 L1065.7 894.3 L1066.2 893.1 L1066.7 893.9 L1067.2 893.8 L1067.7 891.8 L1068.2 894.1 L1068.7 893.5 L1069.3 894.3 L1069.8 893.8 L1070.3 893.5 L1070.8 894.1 L1071.3 894.3 L1071.8 893.2 L1072.3 894.2 L1072.9 894.0 L1073.4 893.9 L1073.9 893.0 L1074.4 893.6 L1074.9 893.5 L1075.4 893.4 L1075.9 894.0 L1076.4 894.1 L1077.0 894.4 L1077.5 894.0 L1078.0 893.5 L1078.5 893.7 L1079.0 894.1 L1079.5 894.3 L1080.0 893.5 L1080.6 893.5 L1081.1 893.9 L1081.6 893.8 L1082.1 894.2 L1082.6 893.4 L1083.1 893.9 L1083.6 894.2 L1084.1 894.3 L1084.7 894.1 L1085.2 893.3 L1085.7 893.6 L1086.2 893.9 L1086.7 892.3 L1087.2 893.8 L1087.7 893.3 L1088.3 893.7 L1088.8 893.9 L1089.3 893.9 L1089.8 893.8 L1090.3 893.2 L1090.8 893.8 L1091.3 891.2 L1091.9 891.4 L1092.4 892.8 L1092.9 893.0 L1093.4 892.4 L1093.9 892.7 L1094.4 893.1 L1094.9 893.0 L1095.4 894.0 L1096.0 892.8 L1096.5 893.8 L1097.0 894.1 L1097.5 894.3 L1098.0 893.3 L1098.5 893.7 L1099.0 889.5 L1099.6 893.6 L1100.1 893.7 L1100.6 894.2 L1101.1 894.1 L1101.6 894.1 L1102.1 893.6 L1102.6 892.5 L1103.1 893.8 L1103.7 894.0 L1104.2 893.1 L1104.7 894.1 L1105.2 894.0 L1105.7 894.1 L1106.2 893.6 L1106.7 893.6 L1107.3 894.3 L1107.8 890.2 L1108.3 893.8 L1108.8 892.9 L1109.3 894.1 L1109.8 892.3 L1110.3 893.8 L1110.9 893.9 L1111.4 893.7 L1111.9 893.5 L1112.4 893.0 L1112.9 893.4 L1113.4 894.2 L1113.9 893.8 L1114.4 892.6 L1115.0 894.0 L1115.5 892.7 L1116.0 893.5 L1116.5 894.3 L1117.0 894.3 L1117.5 891.9 L1118.0 893.7 L1118.6 894.0 L1119.1 893.4 L1119.6 894.3 L1120.1 894.3 L1120.6 891.6 L1121.1 893.7 L1121.6 892.8 L1122.1 894.3 L1122.7 894.3 L1123.2 894.4 L1123.7 894.4 L1124.2 894.0 L1124.7 893.9 L1125.2 894.4 L1125.7 893.6 L1126.3 894.4 L1126.8 892.3 L1127.3 893.8 L1127.8 891.8 L1128.3 894.3 L1128.8 889.9 L1129.3 894.1 L1129.9 893.5 L1130.4 894.1 L1130.9 894.2 L1131.4 893.3 L1131.9 893.8 L1132.4 894.2 L1132.9 893.7 L1133.4 892.0 L1134.0 893.1 L1134.5 893.6 L1135.0 894.0 L1135.5 893.4 L1136.0 891.9 L1136.5 894.0 L1137.0 894.3 L1137.6 894.0 L1138.1 893.5 L1138.6 894.3 L1139.1 894.0 L1139.6 894.1 L1140.1 889.4 L1140.6 893.4 L1141.1 892.6 L1141.7 893.4 L1142.2 892.5 L1142.7 894.4 L1143.2 894.2 L1143.7 894.1 L1144.2 894.0 L1144.7 894.6 L1145.3 894.2 L1145.8 894.3 L1146.3 892.4 L1146.8 894.4 L1147.3 894.2 L1147.8 892.2 L1148.3 894.3 L1148.9 894.0 L1149.4 893.2 L1149.9 894.4 L1150.4 894.1 L1150.9 892.4 L1151.4 894.1 L1151.9 889.7 L1152.4 893.7 L1153.0 894.5 L1153.5 894.4 L1154.0 893.3 L1154.5 894.4 L1155.0 894.3 L1155.5 894.4 L1156.0 893.6 L1156.6 893.9 L1157.1 894.3 L1157.6 894.0 L1158.1 891.3 L1158.6 893.5 L1159.1 894.1 L1159.6 894.6 L1160.1 894.3 L1160.7 894.2 L1161.2 893.6 L1161.7 894.0 L1162.2 894.5 L1162.7 894.0 L1163.2 894.1 L1163.7 892.3 L1164.3 893.1 L1164.8 893.4 L1165.3 894.6 L1165.8 891.5 L1166.3 894.4 L1166.8 894.3 L1167.3 894.1 L1167.9 893.4 L1168.4 891.7 L1168.9 892.9 L1169.4 894.1 L1169.9 894.3 L1170.4 892.3 L1170.9 894.4 L1171.4 893.4 L1172.0 894.2 L1172.5 891.9 L1173.0 893.3 L1173.5 893.9 L1174.0 894.0 L1174.5 893.0 L1175.0 893.7 L1175.6 893.6 L1176.1 893.8 L1176.6 893.4 L1177.1 893.7 L1177.6 894.0 L1178.1 894.0 L1178.6 894.2 L1179.1 893.3 L1179.7 893.1 L1180.2 893.2 L1180.7 894.1 L1181.2 894.3 L1181.7 893.8 L1182.2 893.6 L1182.7 894.3 L1183.3 894.3 L1183.8 893.7 L1184.3 894.1 L1184.8 894.2 L1185.3 893.3 L1185.8 894.5 L1186.3 893.9 L1186.9 894.0 L1187.4 894.3 L1187.9 894.4 L1188.4 894.1 L1188.9 894.1 L1189.4 893.0 L1189.9 893.9 L1190.4 894.5 L1191.0 893.7 L1191.5 893.9 L1192.0 893.9 L1192.5 893.9 L1192.5 896.0 Z" fill="#3a3222"/><line x1="679.5" y1="896.5" x2="1192.5" y2="896.5" stroke="#9a7aa0" stroke-width="1"/><line x1="679.5" y1="897.5" x2="1192.5" y2="897.5" stroke="#6a5098" stroke-width="1"/><line x1="679.5" y1="898.5" x2="1192.5" y2="898.5" stroke="#4a3e3c" stroke-width="1"/><g stroke="rgba(204,204,214,0.22)" stroke-width="1"><line x1="1281" y1="785.50" x2="1801.5" y2="785.50"/><line x1="1281" y1="831.55" x2="1801.5" y2="831.55"/><line x1="1281" y1="877.60" x2="1801.5" y2="877.60"/><line x1="1281" y1="923.65" x2="1801.5" y2="923.65"/><line x1="1281" y1="969.70" x2="1801.5" y2="969.70"/><line x1="1346.50" y1="785.5" x2="1346.50" y2="969.7"/><line x1="1429.00" y1="785.5" x2="1429.00" y2="969.7"/><line x1="1511.00" y1="785.5" x2="1511.00" y2="969.7"/><line x1="1593.50" y1="785.5" x2="1593.50" y2="969.7"/><line x1="1676.00" y1="785.5" x2="1676.00" y2="969.7"/><line x1="1758.50" y1="785.5" x2="1758.50" y2="969.7"/></g></svg>
</body></html>
